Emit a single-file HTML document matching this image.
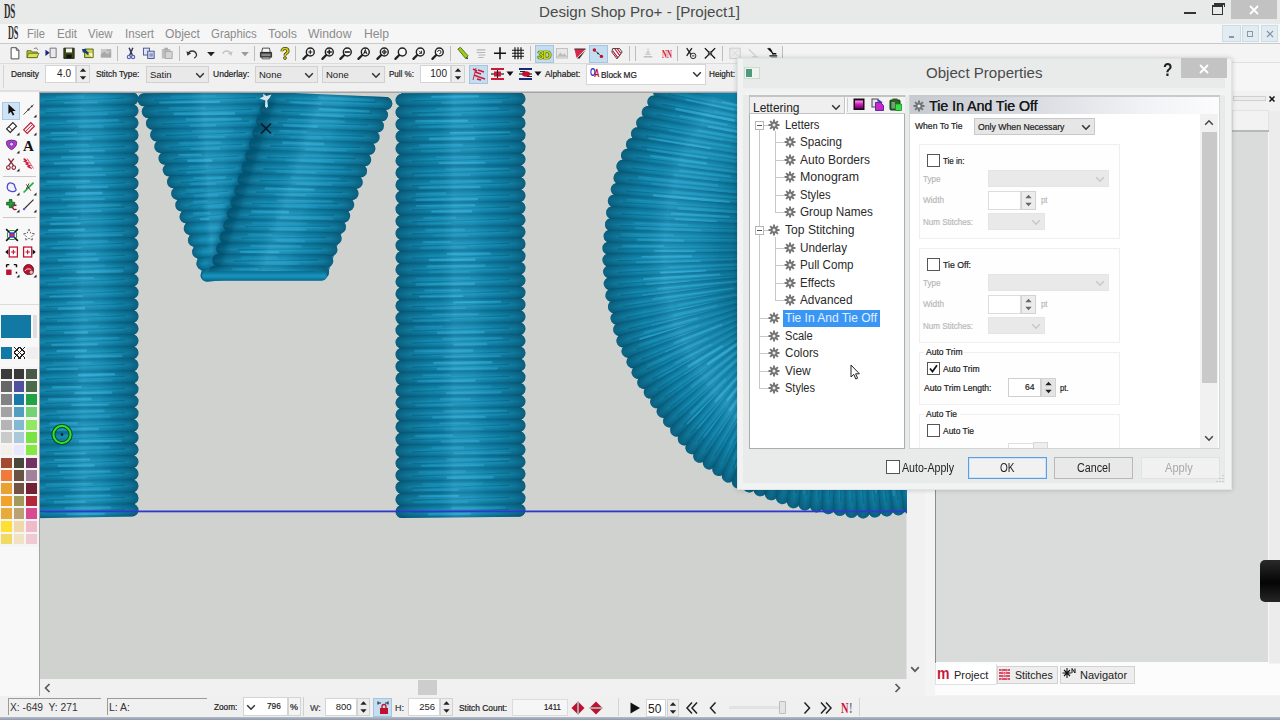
<!DOCTYPE html>
<html lang="en"><head><meta charset="utf-8"><title>Design Shop Pro+ - [Project1]</title>
<style>
html,body{margin:0;padding:0;}
body{width:1280px;height:720px;overflow:hidden;position:relative;background:#f0f0f0;
 font-family:"Liberation Sans",sans-serif;}
div,span,svg{position:absolute;box-sizing:border-box;}
.t{line-height:20px;height:20px;white-space:nowrap;}
.soft{filter:blur(0.35px);}
</style></head>
<body>
<div style="left:0px;top:0px;width:1280px;height:24px;background:#e8eae9;"></div>
<span class="t" style="left:538.7px;top:2px;font-size:15.5px;color:#4a4a4a;transform:scaleX(0.978);transform-origin:0 50%;">Design Shop Pro+ - [Project1]</span>
<span class="t" style="left:3.5px;top:0.5px;font-size:20px;color:#2e2e2e;transform:scaleX(0.450);transform-origin:0 50%;font-weight:bold;font-family:'Liberation Serif',serif;letter-spacing:-0.5px;">DS</span>
<div style="left:1184px;top:12px;width:12px;height:2px;background:#333;"></div>
<div style="left:1212px;top:5px;width:11px;height:10px;border:1.5px solid #333;border-top-width:2.5px;"></div>
<div style="left:1214px;top:3px;width:11px;height:4px;border:1.5px solid #333;border-bottom:none;border-top-width:2px;"></div>
<div style="left:1231px;top:0px;width:46px;height:19px;background:#c2c2c2;"></div>
<svg style="left:1249px;top:5px" width="10" height="10" viewBox="0 0 10 10"><path d="M1 1L9 9M9 1L1 9" stroke="#fff" stroke-width="1.8"/></svg>
<div style="left:0px;top:24px;width:1280px;height:19px;background:#f6f6f6;"></div>
<span class="t" style="left:7.8px;top:22.5px;font-size:19.5px;color:#2e2e2e;transform:scaleX(0.421);transform-origin:0 50%;font-weight:bold;font-family:'Liberation Serif',serif;letter-spacing:-0.5px;">DS</span>
<span class="t" style="left:27px;top:23.5px;font-size:12.8px;color:#8c8c8c;transform:scaleX(0.873);transform-origin:0 50%;">File</span>
<span class="t" style="left:56.5px;top:23.5px;font-size:12.8px;color:#8c8c8c;transform:scaleX(0.907);transform-origin:0 50%;">Edit</span>
<span class="t" style="left:88.3px;top:23.5px;font-size:12.8px;color:#8c8c8c;transform:scaleX(0.891);transform-origin:0 50%;">View</span>
<span class="t" style="left:125px;top:23.5px;font-size:12.8px;color:#8c8c8c;transform:scaleX(0.906);transform-origin:0 50%;">Insert</span>
<span class="t" style="left:165px;top:23.5px;font-size:12.8px;color:#8c8c8c;transform:scaleX(0.946);transform-origin:0 50%;">Object</span>
<span class="t" style="left:211.3px;top:23.5px;font-size:12.8px;color:#8c8c8c;transform:scaleX(0.892);transform-origin:0 50%;">Graphics</span>
<span class="t" style="left:268px;top:23.5px;font-size:12.8px;color:#8c8c8c;transform:scaleX(0.971);transform-origin:0 50%;">Tools</span>
<span class="t" style="left:308px;top:23.5px;font-size:12.8px;color:#8c8c8c;transform:scaleX(0.956);transform-origin:0 50%;">Window</span>
<span class="t" style="left:363.5px;top:23.5px;font-size:12.8px;color:#8c8c8c;transform:scaleX(0.950);transform-origin:0 50%;">Help</span>
<div style="left:1222px;top:25px;width:19px;height:17px;background:#e1ebf2;border:1px solid #cfdbe5;"></div>
<div style="left:1242px;top:25px;width:17px;height:17px;background:#e1ebf2;border:1px solid #cfdbe5;"></div>
<div style="left:1261px;top:25px;width:17px;height:17px;background:#e1ebf2;border:1px solid #cfdbe5;"></div>
<div style="left:1229px;top:36px;width:5px;height:1.5px;background:#8a98a6;"></div>
<div style="left:1247px;top:31px;width:6px;height:6px;border:1px solid #8a98a6;"></div>
<svg style="left:1266px;top:30px" width="8" height="8" viewBox="0 0 8 8"><path d="M1 1L7 7M7 1L1 7" stroke="#8290a0" stroke-width="1.2"/></svg>
<div style="left:0px;top:43px;width:1280px;height:1px;background:#c9c9c9;"></div>
<div style="left:0px;top:44px;width:1280px;height:19px;background:#f1f1f1;"></div>
<div style="left:783px;top:44px;width:497px;height:19px;background:#f4f4f4;"></div>
<div style="left:0px;top:63px;width:1280px;height:27px;background:#f0f0f0;"></div>
<div style="left:0px;top:63px;width:760px;height:1px;background:#dcdcdc;"></div>
<div style="left:117px;top:46px;width:1px;height:15px;background:#bdbdbd;"></div>
<div style="left:179px;top:46px;width:1px;height:15px;background:#bdbdbd;"></div>
<div style="left:254px;top:46px;width:1px;height:15px;background:#bdbdbd;"></div>
<div style="left:295px;top:46px;width:1px;height:15px;background:#bdbdbd;"></div>
<div style="left:450px;top:46px;width:1px;height:15px;background:#bdbdbd;"></div>
<div style="left:530px;top:46px;width:1px;height:15px;background:#bdbdbd;"></div>
<div style="left:629px;top:46px;width:1px;height:15px;background:#bdbdbd;"></div>
<div style="left:635px;top:46px;width:1px;height:15px;background:#bdbdbd;"></div>
<div style="left:677px;top:46px;width:1px;height:15px;background:#bdbdbd;"></div>
<div style="left:722px;top:46px;width:1px;height:15px;background:#bdbdbd;"></div>
<div style="left:782px;top:46px;width:1px;height:15px;background:#bdbdbd;"></div>
<svg style="left:7px;top:45px" width="16" height="16" viewBox="0 0 16 16"><g transform="translate(8 8.3) scale(0.86) translate(-8 -8)"><path d="M3.5 1.5h6l3 3v10h-9z" fill="#fff" stroke="#444" stroke-width="1.1"/><path d="M9.5 1.5v3h3" fill="none" stroke="#444"/></g></svg>
<svg style="left:25px;top:45px" width="16" height="16" viewBox="0 0 16 16"><g transform="translate(8 8.3) scale(0.86) translate(-8 -8)"><path d="M1 5h5l1 1.5h6V13H1z" fill="#b4c238" stroke="#5a6410" stroke-width="1"/><path d="M3 8h12l-2.5 5H1z" fill="#d6e060" stroke="#5a6410" stroke-width="0.9"/><path d="M9 3c2-2 4-1 4.5 1" fill="none" stroke="#444" stroke-width="0.9"/></g></svg>
<svg style="left:43px;top:45px" width="16" height="16" viewBox="0 0 16 16"><g transform="translate(8 8.3) scale(0.86) translate(-8 -8)"><path d="M7 2h7v11H7z" fill="#e8e8ee" stroke="#666" stroke-width="1"/><path d="M1.5 4l5 3.5-5 3.5z" fill="#1a237e"/></g></svg>
<svg style="left:61px;top:45px" width="16" height="16" viewBox="0 0 16 16"><g transform="translate(8 8.3) scale(0.86) translate(-8 -8)"><path d="M2 2h12v12H2z" fill="#3a4a10" stroke="#222"/><rect x="4.5" y="2.5" width="7" height="4.5" fill="#f4f4f4"/><rect x="5" y="9.5" width="6" height="4" fill="#111"/></g></svg>
<svg style="left:80px;top:45px" width="16" height="16" viewBox="0 0 16 16"><g transform="translate(8 8.3) scale(0.86) translate(-8 -8)"><path d="M4 3h10v10H4z" fill="#c8d848" stroke="#4a5410"/><path d="M1 3l5 0 0 2 4 3-2 2-4-3-2 0z" fill="#1c3a7a"/><path d="M8 8l5 0 0 5" fill="#fff8d0"/></g></svg>
<svg style="left:98px;top:45px" width="16" height="16" viewBox="0 0 16 16"><g transform="translate(8 8.3) scale(0.86) translate(-8 -8)"><rect x="2" y="3" width="12" height="10" fill="#c9c9c9"/><path d="M2 9l4-3 4 3 4-4v8H2z" fill="#a8a8a8"/><rect x="9" y="3" width="5" height="3" fill="#b5b5b5"/></g></svg>
<svg style="left:122.5px;top:45px" width="16" height="16" viewBox="0 0 16 16"><g transform="translate(8 8.3) scale(0.86) translate(-8 -8)"><path d="M5.800 1.500L9.500 10M10.200 1.500L6.500 10" stroke="#33335a" stroke-width="1.700"/><circle cx="5.600" cy="12.200" r="1.900" fill="none" stroke="#5a68b4" stroke-width="1.400"/><circle cx="10.400" cy="12.200" r="1.900" fill="none" stroke="#5a68b4" stroke-width="1.400"/></g></svg>
<svg style="left:141px;top:45px" width="16" height="16" viewBox="0 0 16 16"><g transform="translate(8 8.3) scale(0.86) translate(-8 -8)"><rect x="1.5" y="2" width="7" height="8" fill="#dfe3f3" stroke="#3a4a8a"/><rect x="6.500" y="5.5" width="7.500" height="8.500" fill="#c9d2ee" stroke="#3a4a8a"/><path d="M8.5 9h4M8.5 11h4" stroke="#3a4a8a" stroke-width="0.8"/></g></svg>
<svg style="left:159px;top:45px" width="16" height="16" viewBox="0 0 16 16"><g transform="translate(8 8.3) scale(0.86) translate(-8 -8)"><rect x="2" y="3" width="10" height="11" fill="#bdbdbd"/><rect x="6" y="6" width="8" height="8" fill="#d4d4d4" stroke="#a4a4a4"/><rect x="5" y="1.5" width="4" height="3" fill="#a8a8a8"/></g></svg>
<svg style="left:184px;top:45px" width="16" height="16" viewBox="0 0 16 16"><g transform="translate(8 8.3) scale(0.86) translate(-8 -8)"><path d="M4 8.5C5 4.5 11 4 13 8.500c1 2.500-1 4.500-2.500 5" fill="none" stroke="#333" stroke-width="1.5"/><path d="M1.500 5.500l1.200 5.300 4.300-2.800z" fill="#333"/></g></svg>
<svg style="left:203px;top:45px" width="16" height="16" viewBox="0 0 16 16"><g transform="translate(8 8.3) scale(0.86) translate(-8 -8)"><path d="M3.5 6.500h9l-4.500 5z" fill="#222"/></g></svg>
<svg style="left:219px;top:45px" width="16" height="16" viewBox="0 0 16 16"><g transform="translate(8 8.3) scale(0.86) translate(-8 -8)"><path d="M12 8.500C11 4.500 5 4 3 8.500" fill="none" stroke="#c4c4c4" stroke-width="1.5"/><path d="M14.500 5.500l-1.200 5.300-4.300-2.800z" fill="#c4c4c4"/></g></svg>
<svg style="left:237px;top:45px" width="16" height="16" viewBox="0 0 16 16"><g transform="translate(8 8.3) scale(0.86) translate(-8 -8)"><path d="M3.500 6.500h9l-4.500 5z" fill="#9a9a9a"/></g></svg>
<svg style="left:258px;top:45px" width="16" height="16" viewBox="0 0 16 16"><g transform="translate(8 8.3) scale(0.86) translate(-8 -8)"><path d="M4 2h8l1 5H3z" fill="#f6f6f6" stroke="#333"/><path d="M1.500 7h13v5.500h-13z" fill="#555" stroke="#222"/><path d="M3 10h10" stroke="#ccc"/><path d="M3.500 12.500h9v2h-9z" fill="#ddd" stroke="#333" stroke-width="0.8"/></g></svg>
<svg style="left:277px;top:45px" width="16" height="16" viewBox="0 0 16 16"><g transform="translate(8 8.3) scale(0.86) translate(-8 -8)"><path d="M4.500 5.500C4.500 1.500 11.500 1.500 11.500 5.500C11.500 8 8 8 8 10.500" fill="none" stroke="#403800" stroke-width="3.600"/><path d="M4.500 5.500C4.500 1.500 11.500 1.500 11.500 5.500C11.500 8 8 8 8 10.500" fill="none" stroke="#d8d020" stroke-width="1.800"/><circle cx="8" cy="13.500" r="1.700" fill="#d8d020" stroke="#403800" stroke-width="0.9"/></g></svg>
<svg style="left:301px;top:45px" width="16" height="16" viewBox="0 0 16 16"><g transform="translate(8 8.3) scale(0.86) translate(-8 -8)"><circle cx="9.500" cy="6.500" r="4.600" fill="#fafafa" stroke="#222" stroke-width="1.700"/><path d="M6 10L1.500 14.500" stroke="#222" stroke-width="2.600" stroke-linecap="round"/><path d="M7 6.500h5M9.500 4v5" stroke="#222" stroke-width="1.300"/></g></svg>
<svg style="left:320px;top:45px" width="16" height="16" viewBox="0 0 16 16"><g transform="translate(8 8.3) scale(0.86) translate(-8 -8)"><circle cx="9.500" cy="6.500" r="4.600" fill="#fafafa" stroke="#222" stroke-width="1.700"/><path d="M6 10L1.500 14.500" stroke="#222" stroke-width="2.600" stroke-linecap="round"/><path d="M6.500 6.500h6M9.500 3.500v6" stroke="#222" stroke-width="1.900"/></g></svg>
<svg style="left:338px;top:45px" width="16" height="16" viewBox="0 0 16 16"><g transform="translate(8 8.3) scale(0.86) translate(-8 -8)"><circle cx="9.500" cy="6.500" r="4.600" fill="#fafafa" stroke="#222" stroke-width="1.700"/><path d="M6 10L1.500 14.500" stroke="#222" stroke-width="2.600" stroke-linecap="round"/><path d="M6.500 6.500h6" stroke="#222" stroke-width="1.900"/></g></svg>
<svg style="left:356px;top:45px" width="16" height="16" viewBox="0 0 16 16"><g transform="translate(8 8.3) scale(0.86) translate(-8 -8)"><circle cx="9.500" cy="6.500" r="4.600" fill="#fafafa" stroke="#222" stroke-width="1.700"/><path d="M6 10L1.500 14.500" stroke="#222" stroke-width="2.600" stroke-linecap="round"/><path d="M7.500 9l2-5 2 5M8.200 7.400h2.600" stroke="#222" stroke-width="1.200" fill="none"/></g></svg>
<svg style="left:375px;top:45px" width="16" height="16" viewBox="0 0 16 16"><g transform="translate(8 8.3) scale(0.86) translate(-8 -8)"><circle cx="9.500" cy="6.500" r="4.600" fill="#fafafa" stroke="#222" stroke-width="1.700"/><path d="M6 10L1.500 14.500" stroke="#222" stroke-width="2.600" stroke-linecap="round"/><path d="M6.500 6.500h6M9.500 3.500v6" stroke="#222" stroke-width="1.100"/><circle cx="9.500" cy="6.500" r="2" fill="none" stroke="#222" stroke-width="0.9"/></g></svg>
<svg style="left:393px;top:45px" width="16" height="16" viewBox="0 0 16 16"><g transform="translate(8 8.3) scale(0.86) translate(-8 -8)"><circle cx="9.500" cy="6.500" r="4.600" fill="#fafafa" stroke="#222" stroke-width="1.700"/><path d="M6 10L1.500 14.500" stroke="#222" stroke-width="2.600" stroke-linecap="round"/></g></svg>
<svg style="left:411px;top:45px" width="16" height="16" viewBox="0 0 16 16"><g transform="translate(8 8.3) scale(0.86) translate(-8 -8)"><circle cx="9.500" cy="6.500" r="4.600" fill="#fafafa" stroke="#222" stroke-width="1.700"/><path d="M6 10L1.500 14.500" stroke="#222" stroke-width="2.600" stroke-linecap="round"/><path d="M8 5l3 3M11 5l0 3-3 0" stroke="#222" stroke-width="1.100" fill="none"/></g></svg>
<svg style="left:430px;top:45px" width="16" height="16" viewBox="0 0 16 16"><g transform="translate(8 8.3) scale(0.86) translate(-8 -8)"><circle cx="9.500" cy="6.500" r="4.600" fill="#fafafa" stroke="#222" stroke-width="1.700"/><path d="M6 10L1.500 14.500" stroke="#222" stroke-width="2.600" stroke-linecap="round"/><path d="M7.500 6.500a2 2 0 1 1 2 2" stroke="#222" stroke-width="1.100" fill="none"/></g></svg>
<svg style="left:455px;top:45px" width="16" height="16" viewBox="0 0 16 16"><g transform="translate(8 8.3) scale(0.86) translate(-8 -8)"><path d="M2 3l3-2 9 10-3 3z" fill="#9ccc20" stroke="#4a6a08"/><path d="M11 14l3 1-1-3z" fill="#333"/></g></svg>
<svg style="left:473px;top:45px" width="16" height="16" viewBox="0 0 16 16"><g transform="translate(8 8.3) scale(0.86) translate(-8 -8)"><path d="M3 4h10M3 7h10M5 10h8M5 13h6" stroke="#b4b4b4" stroke-width="1.200"/></g></svg>
<svg style="left:492px;top:45px" width="16" height="16" viewBox="0 0 16 16"><g transform="translate(8 8.3) scale(0.86) translate(-8 -8)"><path d="M8 1v14M1 8h14" stroke="#111" stroke-width="1.800"/></g></svg>
<svg style="left:510px;top:45px" width="16" height="16" viewBox="0 0 16 16"><g transform="translate(8 8.3) scale(0.86) translate(-8 -8)"><path d="M4.500 1v14M8 1v14M11.500 1v14M1 4.500h14M1 8h14M1 11.500h14" stroke="#111" stroke-width="1.300"/></g></svg>
<div style="left:535px;top:45px;width:19px;height:18px;background:#c4ddf0;border:1px solid #a4c4e0;"></div>
<span class="t" style="left:537.5px;top:44.5px;font-size:11.5px;color:#c8e000;font-weight:bold;letter-spacing:-0.8px;text-shadow:0 0 1px #2a3a00,0 0 1px #2a3a00,0 0 1px #2a3a00;">3D</span>
<svg style="left:554px;top:45px" width="16" height="16" viewBox="0 0 16 16"><g transform="translate(8 8.3) scale(0.86) translate(-8 -8)"><rect x="1.500" y="2.500" width="13" height="11" fill="#e8e8e8" stroke="#bbb"/><path d="M2 12l4-5 3 3 2-2 3 4z" fill="#bcbcbc"/></g></svg>
<svg style="left:572px;top:45px" width="16" height="16" viewBox="0 0 16 16"><g transform="translate(8 8.3) scale(0.86) translate(-8 -8)"><path d="M1.500 3h13L4 13.500z" fill="#d8284a"/><path d="M14.500 4.500L4.500 14h3z" fill="#222"/><path d="M1.500 3h13" stroke="#333" stroke-width="1.200"/></g></svg>
<div style="left:589px;top:45px;width:19px;height:18px;background:#c4ddf0;border:1px solid #a4c4e0;"></div>
<svg style="left:590px;top:45px" width="16" height="16" viewBox="0 0 16 16"><g transform="translate(8 8.3) scale(0.86) translate(-8 -8)"><path d="M3.500 4L12 11.500" stroke="#333" stroke-width="0.9"/><circle cx="3.800" cy="4.200" r="2" fill="#c01030"/><circle cx="12" cy="11.600" r="2" fill="#c01030"/><circle cx="8" cy="8" r="1" fill="#222"/></g></svg>
<svg style="left:609px;top:45px" width="16" height="16" viewBox="0 0 16 16"><g transform="translate(8 8.3) scale(0.86) translate(-8 -8)"><path d="M3 2.500h8l3 4-6 8-6-8z" fill="#fff" stroke="#222"/><path d="M3 5l6 8M5.500 3l6 8M8.500 3l4 5" stroke="#c01030" stroke-width="1.300"/></g></svg>
<svg style="left:640px;top:45px" width="16" height="16" viewBox="0 0 16 16"><g transform="translate(8 8.3) scale(0.86) translate(-8 -8)"><path d="M3 12h10M5 9h6M6.500 6.500h3" stroke="#c0c0c0" stroke-width="1.600"/><path d="M8 2v5" stroke="#c8c8c8"/></g></svg>
<span class="t" style="left:662px;top:44px;font-size:12px;color:#d01838;transform:scaleX(0.577);transform-origin:0 50%;font-weight:bold;font-family:'Liberation Serif',serif;">NN</span>
<svg style="left:683px;top:45px" width="16" height="16" viewBox="0 0 16 16"><g transform="translate(8 8.3) scale(0.86) translate(-8 -8)"><path d="M3 2l6 9M9 2L3 11" stroke="#222" stroke-width="1.600"/><circle cx="10.500" cy="11" r="3.200" fill="#eee" stroke="#222" stroke-width="1.100"/><path d="M9 11h3" stroke="#222"/></g></svg>
<svg style="left:702px;top:45px" width="16" height="16" viewBox="0 0 16 16"><g transform="translate(8 8.3) scale(0.86) translate(-8 -8)"><path d="M2 2l5 5M14 2l-5 5M2 14l5-5M14 14l-5-5" stroke="#111" stroke-width="1.500"/><path d="M5.500 8h5M8 5.500v5" stroke="#111" stroke-width="1"/></g></svg>
<svg style="left:727px;top:45px" width="16" height="16" viewBox="0 0 16 16"><g transform="translate(8 8.3) scale(0.86) translate(-8 -8)"><rect x="2" y="2" width="12" height="12" fill="#ececec" stroke="#c8c8c8"/><path d="M4 4l8 8M12 4l-8 8" stroke="#d4d4d4"/></g></svg>
<svg style="left:745px;top:45px" width="16" height="16" viewBox="0 0 16 16"><g transform="translate(8 8.3) scale(0.86) translate(-8 -8)"><path d="M3 3l8 8M7 12h7" stroke="#cfcfcf" stroke-width="1.400"/></g></svg>
<svg style="left:764px;top:45px" width="16" height="16" viewBox="0 0 16 16"><g transform="translate(8 8.3) scale(0.86) translate(-8 -8)"><path d="M3 2l7 7M5 2l3 4" stroke="#111" stroke-width="1.500"/><path d="M5 11h9M7 14h7M8 8.500h5" stroke="#111" stroke-width="1.600"/></g></svg>
<div style="left:2.5px;top:65px;width:1px;height:23px;background:#d4d4d4;"></div>
<span class="t" style="left:10.6px;top:64px;font-size:9.2px;color:#222;transform:scaleX(0.913);transform-origin:0 50%;-webkit-text-stroke:0.22px currentColor;">Density</span>
<div style="left:45px;top:65px;width:31px;height:18px;background:#fff;border:1px solid #d5d5d5;"></div>
<span class="t" style="left:45px;top:64.0px;width:26px;text-align:right;font-size:10px;color:#222">4.0</span>
<div style="left:76px;top:65px;width:14px;height:18px;background:#ededed;border:1px solid #d2d2d2;"></div>
<svg style="left:76px;top:65px" width="14" height="18" viewBox="0 0 14 18"><path d="M3.8 6.8l3.200-3.600 3.200 3.600z" fill="#222"/><path d="M3.8 11.2l3.200 3.600 3.200-3.600z" fill="#222"/></svg>
<span class="t" style="left:95.6px;top:64px;font-size:9.2px;color:#222;transform:scaleX(0.906);transform-origin:0 50%;-webkit-text-stroke:0.22px currentColor;">Stitch Type:</span>
<div style="left:146px;top:66px;width:63px;height:17px;background:#e9e9e9;border:1px solid #d0d0d0;"></div>
<span class="t" style="left:150px;top:64.5px;font-size:9.5px;color:#222">Satin</span>
<svg style="left:195.0px;top:71.5px" width="10.0" height="7.0" viewBox="0 0 10 7"><path d="M1.200 1.200L5 5.200L8.800 1.200" fill="none" stroke="#333" stroke-width="1.5"/></svg>
<span class="t" style="left:213px;top:64px;font-size:9.2px;color:#222;transform:scaleX(0.927);transform-origin:0 50%;-webkit-text-stroke:0.22px currentColor;">Underlay:</span>
<div style="left:255px;top:66px;width:63px;height:17px;background:#e9e9e9;border:1px solid #d0d0d0;"></div>
<span class="t" style="left:259px;top:64.5px;font-size:9.5px;color:#222">None</span>
<svg style="left:304.0px;top:71.5px" width="10.0" height="7.0" viewBox="0 0 10 7"><path d="M1.200 1.200L5 5.200L8.800 1.200" fill="none" stroke="#333" stroke-width="1.5"/></svg>
<div style="left:322px;top:66px;width:63px;height:17px;background:#e9e9e9;border:1px solid #d0d0d0;"></div>
<span class="t" style="left:326px;top:64.5px;font-size:9.5px;color:#222">None</span>
<svg style="left:371.0px;top:71.5px" width="10.0" height="7.0" viewBox="0 0 10 7"><path d="M1.200 1.200L5 5.200L8.800 1.200" fill="none" stroke="#333" stroke-width="1.5"/></svg>
<span class="t" style="left:389px;top:64px;font-size:9.2px;color:#222;transform:scaleX(0.873);transform-origin:0 50%;-webkit-text-stroke:0.22px currentColor;">Pull %:</span>
<div style="left:420px;top:65px;width:31px;height:18px;background:#fff;border:1px solid #d5d5d5;"></div>
<span class="t" style="left:420px;top:64.0px;width:27px;text-align:right;font-size:10px;color:#222">100</span>
<div style="left:451px;top:65px;width:14px;height:18px;background:#ededed;border:1px solid #d2d2d2;"></div>
<svg style="left:451px;top:65px" width="14" height="18" viewBox="0 0 14 18"><path d="M3.8 6.8l3.200-3.600 3.200 3.600z" fill="#222"/><path d="M3.8 11.2l3.200 3.600 3.200-3.600z" fill="#222"/></svg>
<div style="left:469px;top:65px;width:19px;height:19px;background:#c4ddf0;border:1px solid #a4c4e0;"></div>
<svg style="left:471px;top:66px" width="16" height="16" viewBox="0 0 16 16"><path d="M2 3l4 2M4 6l6 2M3 9l5 2M7 4l6 2M8 11l6 2M6 13l4 1" stroke="#d01838" stroke-width="1.500"/><path d="M5 2l-3 12" stroke="#d01838" stroke-width="0.9"/></svg>
<svg style="left:490px;top:66px" width="16" height="16" viewBox="0 0 16 16"><path d="M1 3h13M1 13h13" stroke="#d01838" stroke-width="2"/><path d="M1 8h13" stroke="#222" stroke-width="1.200"/><path d="M4 5.500h7v5H4z" fill="#d01838"/><path d="M7.500 4v8" stroke="#222" stroke-width="1.200"/></svg>
<svg style="left:506px;top:71px" width="8" height="6" viewBox="0 0 8 6"><path d="M0.5 0.500h7l-3.500 4.500z" fill="#111"/></svg>
<svg style="left:518px;top:66px" width="16" height="16" viewBox="0 0 16 16"><path d="M1 3h13M1 13h13" stroke="#1a2a7a" stroke-width="2"/><path d="M1 8h13" stroke="#222" stroke-width="1.200"/><ellipse cx="8" cy="8" rx="4" ry="2.800" fill="#c01030"/><path d="M2 5.500h5M9 10.500h5" stroke="#222" stroke-width="1"/></svg>
<svg style="left:534px;top:71px" width="8" height="6" viewBox="0 0 8 6"><path d="M0.5 0.500h7l-3.500 4.500z" fill="#111"/></svg>
<span class="t" style="left:544.5px;top:64px;font-size:9.2px;color:#222;transform:scaleX(0.913);transform-origin:0 50%;-webkit-text-stroke:0.22px currentColor;">Alphabet:</span>
<div style="left:586px;top:63.5px;width:119.5px;height:21.5px;background:#fff;border:1px solid #d5d5d5;"></div>
<span class="t" style="left:589.5px;top:62.5px;font-size:10px;color:#2a2ad0;transform:scaleX(0.707);transform-origin:0 50%;font-weight:bold;">O</span>
<span class="t" style="left:593.5px;top:63.5px;font-size:10px;color:#c01030;transform:scaleX(0.762);transform-origin:0 50%;font-weight:bold;">A</span>
<span class="t" style="left:601px;top:64.5px;font-size:9.2px;color:#222;transform:scaleX(0.903);transform-origin:0 50%;-webkit-text-stroke:0.22px currentColor;">Block MG</span>
<svg style="left:692.0px;top:71.0px" width="10.0" height="7.0" viewBox="0 0 10 7"><path d="M1.200 1.200L5 5.200L8.800 1.200" fill="none" stroke="#333" stroke-width="1.5"/></svg>
<span class="t" style="left:709px;top:64px;font-size:9.2px;color:#222;transform:scaleX(0.892);transform-origin:0 50%;-webkit-text-stroke:0.22px currentColor;">Height:</span>
<div style="left:744px;top:66.5px;width:16px;height:12.5px;background:#eef4ee;border:1px solid #cfd8d4;"></div>
<div style="left:746px;top:68.5px;width:6px;height:8.5px;background:#4f9a7a;"></div>
<div style="left:0px;top:90px;width:39px;height:606px;background:#f8f8f8;"></div>
<div style="left:38.5px;top:92px;width:1.5px;height:604px;background:#a4a4a4;"></div>
<div style="left:0px;top:90px;width:40px;height:2px;background:#e0e0e0;"></div>
<div style="left:2px;top:102px;width:18px;height:17.5px;background:#cfe3f5;border:1px solid #a8c8e8;"></div>
<div style="left:3px;top:176px;width:33px;height:1px;background:#c8c8c8;"></div>
<div style="left:3px;top:217px;width:33px;height:1px;background:#c8c8c8;"></div>
<svg style="left:4px;top:102px" width="16" height="16" viewBox="0 0 16 16"><g transform="translate(8 8) scale(0.9) translate(-8 -8)"><path d="M4 1.500v11l2.800-2.600 2 4.300 1.800-0.800-2-4.200 3.600-0.200z" fill="#111"/></g></svg>
<svg style="left:21px;top:102px" width="16" height="16" viewBox="0 0 16 16"><g transform="translate(8 8) scale(0.9) translate(-8 -8)"><path d="M2 13L13 2" stroke="#333" stroke-width="1"/><circle cx="7.500" cy="7.500" r="1.200" fill="#333"/><circle cx="11" cy="4" r="1" fill="#333"/></g><path d="M12.500 15.500h3v-3z" fill="#222"/></svg>
<svg style="left:4px;top:120px" width="16" height="16" viewBox="0 0 16 16"><g transform="translate(8 8) scale(0.9) translate(-8 -8)"><path d="M2 9l7-7 4 4-7 7z" fill="#fff" stroke="#222" stroke-width="1.200"/><path d="M4.500 6.500l4 4" stroke="#222"/></g><path d="M12.500 15.500h3v-3z" fill="#222"/></svg>
<svg style="left:21px;top:120px" width="16" height="16" viewBox="0 0 16 16"><g transform="translate(8 8) scale(0.9) translate(-8 -8)"><path d="M2 10l8-8 4 4-8 8z" fill="#fbeaea" stroke="#c01030" stroke-width="1.200"/><path d="M4 12l8-8" stroke="#c01030" stroke-width="0.9"/></g><path d="M12.500 15.500h3v-3z" fill="#222"/></svg>
<svg style="left:4px;top:137.5px" width="16" height="16" viewBox="0 0 16 16"><g transform="translate(8 8) scale(0.9) translate(-8 -8)"><path d="M2 3c2-2 9-2 11 0 1 3-2 8-5.500 9C4 11 1 6 2 3z" fill="#b83cc0" stroke="#5a1a8a"/><circle cx="7.500" cy="6" r="2.200" fill="#e8d0f0" stroke="#3a3ab0"/></g><path d="M12.500 15.500h3v-3z" fill="#222"/></svg>
<span class="t" style="left:23px;top:136px;font-size:15px;color:#111;font-weight:bold;font-family:'Liberation Serif',serif;">A</span>
<svg style="left:4px;top:156px" width="16" height="16" viewBox="0 0 16 16"><g transform="translate(8 8) scale(0.9) translate(-8 -8)"><path d="M4 2l6 8M10 2l-6 8" stroke="#8a2030" stroke-width="1.400"/><circle cx="4" cy="12" r="2" fill="none" stroke="#8a2030" stroke-width="1.200"/><circle cx="10" cy="12" r="2" fill="none" stroke="#8a2030" stroke-width="1.200"/></g><path d="M12.500 15.500h3v-3z" fill="#222"/></svg>
<svg style="left:21px;top:156px" width="16" height="16" viewBox="0 0 16 16"><g transform="translate(8 8) scale(0.9) translate(-8 -8)"><path d="M2 2l3 2-2 1 4 2-2 1 4 2-2 1 4 2" stroke="#d01838" stroke-width="1.500" fill="none"/><path d="M6 2l7 11" stroke="#d01838" stroke-width="0.800"/></g></svg>
<svg style="left:4px;top:179.5px" width="16" height="16" viewBox="0 0 16 16"><g transform="translate(8 8) scale(0.9) translate(-8 -8)"><path d="M3 5c1-4 8-3 8 1 0 2 3 3 1 5-2 2-8 1-9-2-0.500-1.500-0.300-3 0-4z" fill="#f4f0ff" stroke="#4a4ad0" stroke-width="1.400"/></g><path d="M12.500 15.500h3v-3z" fill="#222"/></svg>
<svg style="left:21px;top:179.5px" width="16" height="16" viewBox="0 0 16 16"><g transform="translate(8 8) scale(0.9) translate(-8 -8)"><path d="M2 13L13 2" stroke="#20b030" stroke-width="1.800"/><path d="M5 4l5 7M8 3l-3 6" stroke="#333" stroke-width="1"/></g><path d="M12.500 15.500h3v-3z" fill="#222"/></svg>
<svg style="left:4px;top:197px" width="16" height="16" viewBox="0 0 16 16"><g transform="translate(8 8) scale(0.9) translate(-8 -8)"><path d="M2 5h3V2h3v3h3v3H8v3H5V8H2z" fill="#20a030" stroke="#0a4a14" stroke-width="0.800"/><path d="M13 8.500c-3-1-5 1-4 3s3 2 4 1" fill="none" stroke="#8a2030" stroke-width="1.600"/></g><path d="M12.500 15.500h3v-3z" fill="#222"/></svg>
<svg style="left:21px;top:197px" width="16" height="16" viewBox="0 0 16 16"><g transform="translate(8 8) scale(0.9) translate(-8 -8)"><path d="M2 13L13 2" stroke="#333" stroke-width="1.300"/><circle cx="2.500" cy="12.500" r="1.300" fill="#5a5ad0"/></g><path d="M12.500 15.500h3v-3z" fill="#222"/></svg>
<svg style="left:4px;top:227px" width="16" height="16" viewBox="0 0 16 16"><g transform="translate(8 8) scale(0.9) translate(-8 -8)"><path d="M1.500 1.500l4 4M14.500 1.500l-4 4M1.500 14.500l4-4M14.500 14.500l-4-4" stroke="#111" stroke-width="1.800"/><rect x="5" y="5" width="6" height="6" fill="#3a3ad0"/><circle cx="8" cy="8" r="1.800" fill="#e03030"/><path d="M5 3h6M5 13h6M3 5v6M13 5v6" stroke="#20a030" stroke-width="1.200"/></g></svg>
<svg style="left:21px;top:227px" width="16" height="16" viewBox="0 0 16 16"><g transform="translate(8 8) scale(0.9) translate(-8 -8)"><path d="M8 1.500l2 4.500 4.500 0.500-3.500 3 1 4.500-4-2.500-4 2.500 1-4.500-3.500-3 4.500-0.500z" fill="none" stroke="#555" stroke-width="1" stroke-dasharray="2 1.200"/></g></svg>
<svg style="left:4px;top:244px" width="16" height="16" viewBox="0 0 16 16"><g transform="translate(8 8) scale(0.9) translate(-8 -8)"><rect x="5" y="2.500" width="9" height="11" fill="#fff" stroke="#c01030" stroke-width="1.400"/><path d="M9.500 5.500v5M7 8h5" stroke="#c01030" stroke-width="1.200"/><path d="M0.500 8l3.500-3v6z" fill="#111"/></g></svg>
<svg style="left:21px;top:244px" width="16" height="16" viewBox="0 0 16 16"><g transform="translate(8 8) scale(0.9) translate(-8 -8)"><rect x="2" y="2.500" width="9" height="11" fill="#fff" stroke="#c01030" stroke-width="1.400"/><path d="M6.500 5.500v5M4 8h5" stroke="#c01030" stroke-width="1.200"/><path d="M15.500 8l-3.500-3v6z" fill="#111"/></g></svg>
<svg style="left:4px;top:262px" width="16" height="16" viewBox="0 0 16 16"><g transform="translate(8 8) scale(0.9) translate(-8 -8)"><rect x="1.500" y="7.500" width="6" height="6" fill="#c01030"/><path d="M2 2h3M2 2v3M13 2h-3M13 2v3M13 12v-2" stroke="#111" stroke-width="1.600" fill="none"/></g><path d="M12.500 15.500h3v-3z" fill="#222"/></svg>
<svg style="left:21px;top:262px" width="16" height="16" viewBox="0 0 16 16"><g transform="translate(8 8) scale(0.9) translate(-8 -8)"><circle cx="7.500" cy="7.500" r="5.500" fill="#c01030" stroke="#5a0a14"/><path d="M3.500 9c2-3 6-3 8 0" stroke="#fff" stroke-width="1.100" fill="none"/><circle cx="10.500" cy="10.500" r="2.400" fill="#e8b0b8" stroke="#5a0a14" stroke-width="0.800"/></g><path d="M12.500 15.500h3v-3z" fill="#222"/></svg>
<div style="left:0px;top:304px;width:39px;height:1px;background:#dcdcdc;"></div>
<div style="left:1px;top:315px;width:30px;height:23px;background:#1279a4;"></div>
<div style="left:33px;top:315px;width:4px;height:23px;background:#dedede;"></div>
<div style="left:1px;top:347px;width:11px;height:12px;background:#1279a4;"></div>
<div style="left:14px;top:347px;width:11px;height:12px;background:#fff;background-image:repeating-linear-gradient(45deg,#222 0 1px,transparent 1px 4px),repeating-linear-gradient(-45deg,#222 0 1px,transparent 1px 4px);"></div>
<div style="left:27px;top:347px;width:11px;height:12px;background:#efefef;"></div>
<div style="left:0px;top:367px;width:39px;height:180px;background:#f4f4f4;"></div>
<div style="left:1.1px;top:368.7px;width:10.7px;height:10.6px;background:#3b3b3b;"></div>
<div style="left:13.75px;top:368.7px;width:10.7px;height:10.6px;background:#3a3a3a;"></div>
<div style="left:26.400000000000002px;top:368.7px;width:10.7px;height:10.6px;background:#4a584a;"></div>
<div style="left:1.1px;top:381.4px;width:10.7px;height:10.6px;background:#666666;"></div>
<div style="left:13.75px;top:381.4px;width:10.7px;height:10.6px;background:#514fa0;"></div>
<div style="left:26.400000000000002px;top:381.4px;width:10.7px;height:10.6px;background:#4b6b4a;"></div>
<div style="left:1.1px;top:394.09999999999997px;width:10.7px;height:10.6px;background:#838383;"></div>
<div style="left:13.75px;top:394.09999999999997px;width:10.7px;height:10.6px;background:#1878a8;"></div>
<div style="left:26.400000000000002px;top:394.09999999999997px;width:10.7px;height:10.6px;background:#22a244;"></div>
<div style="left:1.1px;top:406.79999999999995px;width:10.7px;height:10.6px;background:#a3a3a3;"></div>
<div style="left:13.75px;top:406.79999999999995px;width:10.7px;height:10.6px;background:#509fc2;"></div>
<div style="left:26.400000000000002px;top:406.79999999999995px;width:10.7px;height:10.6px;background:#74d274;"></div>
<div style="left:1.1px;top:419.5px;width:10.7px;height:10.6px;background:#b4b4b4;"></div>
<div style="left:13.75px;top:419.5px;width:10.7px;height:10.6px;background:#82b9d2;"></div>
<div style="left:26.400000000000002px;top:419.5px;width:10.7px;height:10.6px;background:#93e862;"></div>
<div style="left:1.1px;top:432.2px;width:10.7px;height:10.6px;background:#c9cbc9;"></div>
<div style="left:13.75px;top:432.2px;width:10.7px;height:10.6px;background:#a9c9da;"></div>
<div style="left:26.400000000000002px;top:432.2px;width:10.7px;height:10.6px;background:#7be244;"></div>
<div style="left:1.1px;top:444.9px;width:10.7px;height:10.6px;background:#f1f1ea;"></div>
<div style="left:13.75px;top:444.9px;width:10.7px;height:10.6px;background:#e9e7ff;"></div>
<div style="left:26.400000000000002px;top:444.9px;width:10.7px;height:10.6px;background:#84ea42;"></div>
<div style="left:1.1px;top:457.59999999999997px;width:10.7px;height:10.6px;background:#a04a32;"></div>
<div style="left:13.75px;top:457.59999999999997px;width:10.7px;height:10.6px;background:#48483a;"></div>
<div style="left:26.400000000000002px;top:457.59999999999997px;width:10.7px;height:10.6px;background:#723262;"></div>
<div style="left:1.1px;top:470.29999999999995px;width:10.7px;height:10.6px;background:#f07a3a;"></div>
<div style="left:13.75px;top:470.29999999999995px;width:10.7px;height:10.6px;background:#6a5242;"></div>
<div style="left:26.400000000000002px;top:470.29999999999995px;width:10.7px;height:10.6px;background:#a2829a;"></div>
<div style="left:1.1px;top:483.0px;width:10.7px;height:10.6px;background:#e8a232;"></div>
<div style="left:13.75px;top:483.0px;width:10.7px;height:10.6px;background:#725242;"></div>
<div style="left:26.400000000000002px;top:483.0px;width:10.7px;height:10.6px;background:#722232;"></div>
<div style="left:1.1px;top:495.7px;width:10.7px;height:10.6px;background:#f0a22a;"></div>
<div style="left:13.75px;top:495.7px;width:10.7px;height:10.6px;background:#a29a5a;"></div>
<div style="left:26.400000000000002px;top:495.7px;width:10.7px;height:10.6px;background:#b22a3a;"></div>
<div style="left:1.1px;top:508.4px;width:10.7px;height:10.6px;background:#e8aa3a;"></div>
<div style="left:13.75px;top:508.4px;width:10.7px;height:10.6px;background:#baa272;"></div>
<div style="left:26.400000000000002px;top:508.4px;width:10.7px;height:10.6px;background:#da4a92;"></div>
<div style="left:1.1px;top:521.0999999999999px;width:10.7px;height:10.6px;background:#ffe032;"></div>
<div style="left:13.75px;top:521.0999999999999px;width:10.7px;height:10.6px;background:#f0d8aa;"></div>
<div style="left:26.400000000000002px;top:521.0999999999999px;width:10.7px;height:10.6px;background:#f0baca;"></div>
<div style="left:1.1px;top:533.8px;width:10.7px;height:10.6px;background:#f0da62;"></div>
<div style="left:13.75px;top:533.8px;width:10.7px;height:10.6px;background:#f0e2c2;"></div>
<div style="left:26.400000000000002px;top:533.8px;width:10.7px;height:10.6px;background:#f0cad2;"></div>
<div style="left:906.5px;top:92px;width:18.5px;height:587px;background:#f1f1f1;"></div>
<div style="left:925px;top:92px;width:10px;height:604px;background:#f4f4f4;"></div>
<svg style="left:910.0px;top:665.5px" width="10.0" height="7.0" viewBox="0 0 10 7"><path d="M1.200 1.200L5 5.200L8.800 1.200" fill="none" stroke="#5a5a5a" stroke-width="1.7"/></svg>
<div style="left:40px;top:679px;width:885px;height:17px;background:#f1f1f1;"></div>
<svg style="left:44px;top:683px" width="7" height="10" viewBox="0 0 7 10"><path d="M5.500 1L1.500 5l4 4" fill="none" stroke="#5a5a5a" stroke-width="1.700"/></svg>
<svg style="left:894px;top:683px" width="7" height="10" viewBox="0 0 7 10"><path d="M1.500 1L5.500 5l-4 4" fill="none" stroke="#5a5a5a" stroke-width="1.700"/></svg>
<div style="left:418px;top:680px;width:19px;height:15px;background:#cdcdcd;"></div>
<div style="left:0px;top:696px;width:1280px;height:20px;background:#f0f0f0;"></div>
<div style="left:0px;top:717.2px;width:1280px;height:3px;background:linear-gradient(#b4bcc8,#8e9aaa);"></div>
<div style="left:8px;top:698px;width:93px;height:17px;border-top:1px solid #9a9a9a;border-left:1px solid #9a9a9a;"></div>
<div style="left:107px;top:698px;width:100px;height:17px;border-top:1px solid #9a9a9a;border-left:1px solid #9a9a9a;"></div>
<span class="t" style="left:9.6px;top:697px;font-size:10.5px;color:#333;transform:scaleX(0.976);transform-origin:0 50%;">X: -649&nbsp; Y: 271</span>
<span class="t" style="left:109px;top:697px;font-size:10.5px;color:#333;">L: A:</span>
<span class="t" style="left:213.7px;top:696.5px;font-size:9px;color:#222;transform:scaleX(0.914);transform-origin:0 50%;-webkit-text-stroke:0.22px currentColor;">Zoom:</span>
<div style="left:243px;top:697px;width:45px;height:19px;background:#fff;border:1px solid #d4d4d4;"></div>
<svg style="left:246.0px;top:703.5px" width="10.0" height="7.0" viewBox="0 0 10 7"><path d="M1.200 1.200L5 5.200L8.800 1.200" fill="none" stroke="#333" stroke-width="1.5"/></svg>
<span class="t" style="left:267px;top:696px;font-size:9.5px;color:#222;transform:scaleX(0.871);transform-origin:0 50%;-webkit-text-stroke:0.22px currentColor;">796</span>
<div style="left:288px;top:697px;width:13px;height:19px;background:#f4f4f4;border:1px solid #d4d4d4;"></div>
<span class="t" style="left:290px;top:696.5px;font-size:9px;color:#222;-webkit-text-stroke:0.22px currentColor;">%</span>
<div style="left:303px;top:697px;width:1px;height:19px;background:#d0d0d0;"></div>
<span class="t" style="left:310px;top:698px;font-size:9px;color:#444;-webkit-text-stroke:0.22px currentColor;">W:</span>
<div style="left:324.5px;top:698px;width:32px;height:18px;background:#fff;border:1px solid #d5d5d5;"></div>
<span class="t" style="left:324.5px;top:697.0px;width:27px;text-align:right;font-size:9.5px;color:#222">800</span>
<div style="left:356.5px;top:698px;width:13px;height:18px;background:#ededed;border:1px solid #d2d2d2;"></div>
<svg style="left:356.5px;top:698px" width="13" height="18" viewBox="0 0 13 18"><path d="M3.3 6.8l3.200-3.600 3.200 3.600z" fill="#222"/><path d="M3.3 11.2l3.200 3.600 3.200-3.600z" fill="#222"/></svg>
<div style="left:373px;top:698px;width:19px;height:19px;background:#c4ddf0;border:1px solid #a4c4e0;"></div>
<svg style="left:375px;top:700px" width="16" height="16" viewBox="0 0 16 16"><path d="M3 3h3M10 3h3M3 1.500v3M13 1.500v3" stroke="#222" stroke-width="1.100"/><rect x="5" y="8" width="8" height="6" fill="#c01030"/><path d="M7 8V6.500a2 2 0 0 1 4 0V8" fill="none" stroke="#c01030" stroke-width="1.300"/></svg>
<span class="t" style="left:395px;top:698px;font-size:9px;color:#444;-webkit-text-stroke:0.22px currentColor;">H:</span>
<div style="left:407.5px;top:698px;width:32.5px;height:18px;background:#fff;border:1px solid #d5d5d5;"></div>
<span class="t" style="left:407.5px;top:697.0px;width:27.5px;text-align:right;font-size:9.5px;color:#222">256</span>
<div style="left:440px;top:698px;width:13px;height:18px;background:#ededed;border:1px solid #d2d2d2;"></div>
<svg style="left:440px;top:698px" width="13" height="18" viewBox="0 0 13 18"><path d="M3.3 6.8l3.200-3.600 3.200 3.600z" fill="#222"/><path d="M3.3 11.2l3.200 3.600 3.200-3.600z" fill="#222"/></svg>
<span class="t" style="left:458.7px;top:697.5px;font-size:9px;color:#222;transform:scaleX(0.932);transform-origin:0 50%;-webkit-text-stroke:0.22px currentColor;">Stitch Count:</span>
<div style="left:512px;top:699px;width:56px;height:17px;background:#f6f6f6;border:1px solid #dcdcdc;"></div>
<span class="t" style="left:544px;top:697px;font-size:9.5px;color:#222;transform:scaleX(0.822);transform-origin:0 50%;-webkit-text-stroke:0.22px currentColor;">1411</span>
<svg style="left:570px;top:700px" width="16" height="16" viewBox="0 0 16 16"><path d="M7 2.500v11L1.500 8z" fill="#c01030"/><path d="M9 2.500v11L14.500 8z" fill="#c01030"/><path d="M8 1.500v13" stroke="#333" stroke-width="0.800"/></svg>
<svg style="left:588px;top:700px" width="16" height="16" viewBox="0 0 16 16"><path d="M2.500 7h11L8 1.500z" fill="#c01030"/><path d="M2.500 9h11L8 14.500z" fill="#c01030"/><path d="M1.500 8h13" stroke="#333" stroke-width="0.800"/></svg>
<div style="left:618px;top:698px;width:1px;height:18px;background:#d4d4d4;"></div>
<svg style="left:629px;top:702px" width="12" height="12" viewBox="0 0 12 12"><path d="M1.500 0.500v11L11 6z" fill="#111"/></svg>
<div style="left:646px;top:699px;width:20px;height:18px;background:#fff;border:1px solid #d4d4d4;"></div>
<span class="t" style="left:648px;top:698.5px;font-size:12px;color:#222;">50</span>
<div style="left:667px;top:699px;width:12px;height:18px;background:#ededed;border:1px solid #d2d2d2;"></div>
<svg style="left:667px;top:699px" width="12" height="18" viewBox="0 0 12 18"><path d="M2.8 6.8l3.200-3.600 3.200 3.600z" fill="#222"/><path d="M2.8 11.2l3.200 3.600 3.200-3.600z" fill="#222"/></svg>
<svg style="left:684px;top:700px" width="16" height="16" viewBox="0 0 16 16"><path d="M8.0 2.500L3.0 8L8.0 13.500M13.0 2.500L8.0 8L13.0 13.500" fill="none" stroke="#222" stroke-width="1.500"/></svg>
<svg style="left:705px;top:700px" width="16" height="16" viewBox="0 0 16 16"><path d="M10.5 2.500L5.5 8L10.5 13.500" fill="none" stroke="#222" stroke-width="1.500"/></svg>
<div style="left:729px;top:706px;width:55px;height:3px;background:#e2e2e2;border-radius:1px;"></div>
<div style="left:779px;top:701px;width:7px;height:13px;background:#e4e4e4;border:1px solid #bdbdbd;border-radius:1px;"></div>
<svg style="left:799px;top:700px" width="16" height="16" viewBox="0 0 16 16"><path d="M5.5 2.500L10.5 8L5.5 13.500" fill="none" stroke="#222" stroke-width="1.500"/></svg>
<svg style="left:818px;top:700px" width="16" height="16" viewBox="0 0 16 16"><path d="M3.0 2.500L8.0 8L3.0 13.500M8.0 2.500L13.0 8L8.0 13.500" fill="none" stroke="#222" stroke-width="1.500"/></svg>
<span class="t" style="left:841px;top:698px;font-size:14.5px;color:#c81838;transform:scaleX(0.716);transform-origin:0 50%;font-weight:bold;font-family:'Liberation Serif',serif;">N</span>
<span class="t" style="left:849px;top:698px;font-size:14.5px;color:#7a6a9a;transform:scaleX(0.725);transform-origin:0 50%;font-weight:bold;font-family:'Liberation Serif',serif;">!</span>
<div style="left:858.5px;top:698px;width:1px;height:18px;background:#d4d4d4;"></div>
<svg style="left:40px;top:92px" width="866.5" height="587" viewBox="40 92 866.5 587">
<defs>
<linearGradient id="th" x1="0" y1="0" x2="0" y2="1">
<stop offset="0" stop-color="#066a8e"/><stop offset="0.25" stop-color="#0f83aa"/>
<stop offset="0.5" stop-color="#1a95be"/><stop offset="0.75" stop-color="#0f82a9"/>
<stop offset="1" stop-color="#056589"/></linearGradient>
<linearGradient id="th2" x1="0" y1="0" x2="0" y2="1">
<stop offset="0" stop-color="#066a8e"/><stop offset="0.3" stop-color="#1086ad"/>
<stop offset="0.55" stop-color="#1c98c1"/><stop offset="0.8" stop-color="#0f82a9"/>
<stop offset="1" stop-color="#056589"/></linearGradient>
<linearGradient id="al" x1="0" y1="0" x2="1" y2="0">
<stop offset="0" stop-color="#03425a" stop-opacity="0.62"/><stop offset="0.10" stop-color="#03425a" stop-opacity="0.34"/>
<stop offset="0.28" stop-color="#03425a" stop-opacity="0.06"/><stop offset="0.45" stop-color="#6fd0f4" stop-opacity="0.20"/>
<stop offset="0.60" stop-color="#6fd0f4" stop-opacity="0.14"/><stop offset="0.78" stop-color="#03425a" stop-opacity="0.10"/>
<stop offset="0.92" stop-color="#03425a" stop-opacity="0.36"/><stop offset="1" stop-color="#03425a" stop-opacity="0.62"/></linearGradient>
<linearGradient id="alL" x1="0" y1="0" x2="1" y2="0">
<stop offset="0" stop-color="#03425a" stop-opacity="0.30"/><stop offset="0.25" stop-color="#03425a" stop-opacity="0.08"/>
<stop offset="0.50" stop-color="#6fd0f4" stop-opacity="0.20"/>
<stop offset="0.65" stop-color="#6fd0f4" stop-opacity="0.12"/><stop offset="0.80" stop-color="#03425a" stop-opacity="0.12"/>
<stop offset="0.92" stop-color="#03425a" stop-opacity="0.36"/><stop offset="1" stop-color="#03425a" stop-opacity="0.62"/></linearGradient>
<linearGradient id="alG" x1="0" y1="0" x2="1" y2="0">
<stop offset="0" stop-color="#03425a" stop-opacity="0.60"/><stop offset="0.05" stop-color="#03425a" stop-opacity="0.36"/>
<stop offset="0.14" stop-color="#03425a" stop-opacity="0.08"/><stop offset="0.26" stop-color="#6fd0f4" stop-opacity="0.20"/>
<stop offset="0.36" stop-color="#6fd0f4" stop-opacity="0.12"/><stop offset="0.50" stop-color="#03425a" stop-opacity="0.18"/>
<stop offset="0.62" stop-color="#03425a" stop-opacity="0.40"/><stop offset="1" stop-color="#03425a" stop-opacity="0.45"/></linearGradient>
<filter id="bl2" x="-50%" y="-10%" width="200%" height="120%"><feGaussianBlur stdDeviation="2.2"/></filter>
<filter id="bl" x="-5%" y="-5%" width="110%" height="110%"><feGaussianBlur stdDeviation="0.7"/></filter>
</defs>
<rect x="40" y="92" width="866.5" height="587" fill="#cfd2cf"/>
<g filter="url(#bl)">
<rect x="30" y="93" width="104" height="420" fill="#0e80a7"/>
<rect x="401" y="93" width="119" height="420" fill="#0e80a7"/>
<polygon points="142,95 388,97 326,279 204,279" fill="#0e80a7"/>
<rect x="27.5" y="93.8" width="111.0" height="13.0" rx="6.5" fill="url(#th)" transform="rotate(-0.94 34.0 100.3)"/>
<line x1="45.5" y1="100.9" x2="124.5" y2="98.1" stroke="#05607f" stroke-width="1.3" stroke-opacity="0.50" stroke-linecap="round"/><line x1="57.4" y1="96.9" x2="83.4" y2="96.5" stroke="#3ab8e2" stroke-width="2.3" stroke-opacity="0.23" stroke-linecap="round"/><line x1="64.8" y1="102.8" x2="97.3" y2="102.3" stroke="#3ab8e2" stroke-width="1.7" stroke-opacity="0.40" stroke-linecap="round"/>
<rect x="27.5" y="93.8" width="111.0" height="13.0" rx="6.5" fill="url(#alL)" transform="rotate(-0.94 34.0 100.3)"/>

<rect x="27.5" y="105.9" width="111.0" height="13.0" rx="6.5" fill="url(#th)" transform="rotate(-0.94 34.0 112.4)"/>
<line x1="45.5" y1="113.0" x2="124.5" y2="110.2" stroke="#05607f" stroke-width="1.3" stroke-opacity="0.50" stroke-linecap="round"/><line x1="47.5" y1="109.2" x2="82.1" y2="108.6" stroke="#3ab8e2" stroke-width="1.7" stroke-opacity="0.24" stroke-linecap="round"/><line x1="61.0" y1="115.0" x2="107.3" y2="114.2" stroke="#3ab8e2" stroke-width="1.7" stroke-opacity="0.29" stroke-linecap="round"/>
<rect x="27.5" y="105.9" width="111.0" height="13.0" rx="6.5" fill="url(#alL)" transform="rotate(-0.94 34.0 112.4)"/>

<rect x="27.5" y="118.0" width="111.0" height="13.0" rx="6.5" fill="url(#th)" transform="rotate(-0.94 34.0 124.5)"/>
<line x1="45.5" y1="125.1" x2="124.5" y2="122.3" stroke="#05607f" stroke-width="1.3" stroke-opacity="0.50" stroke-linecap="round"/><line x1="67.8" y1="121.0" x2="117.9" y2="120.2" stroke="#3ab8e2" stroke-width="2.2" stroke-opacity="0.36" stroke-linecap="round"/><line x1="79.9" y1="126.8" x2="102.8" y2="126.4" stroke="#3ab8e2" stroke-width="2.5" stroke-opacity="0.32" stroke-linecap="round"/>
<rect x="27.5" y="118.0" width="111.0" height="13.0" rx="6.5" fill="url(#alL)" transform="rotate(-0.94 34.0 124.5)"/>

<rect x="27.5" y="130.1" width="111.0" height="13.0" rx="6.5" fill="url(#th)" transform="rotate(-0.94 34.0 136.6)"/>
<line x1="45.5" y1="137.2" x2="124.5" y2="134.4" stroke="#05607f" stroke-width="1.3" stroke-opacity="0.50" stroke-linecap="round"/><line x1="51.2" y1="133.3" x2="76.3" y2="132.9" stroke="#3ab8e2" stroke-width="1.9" stroke-opacity="0.53" stroke-linecap="round"/><line x1="52.6" y1="139.3" x2="91.6" y2="138.7" stroke="#3ab8e2" stroke-width="2.2" stroke-opacity="0.35" stroke-linecap="round"/>
<rect x="27.5" y="130.1" width="111.0" height="13.0" rx="6.5" fill="url(#alL)" transform="rotate(-0.94 34.0 136.6)"/>

<rect x="27.5" y="142.2" width="111.0" height="13.0" rx="6.5" fill="url(#th)" transform="rotate(-0.94 34.0 148.7)"/>
<line x1="45.5" y1="149.3" x2="124.5" y2="146.5" stroke="#05607f" stroke-width="1.3" stroke-opacity="0.50" stroke-linecap="round"/><line x1="65.1" y1="145.2" x2="88.5" y2="144.8" stroke="#3ab8e2" stroke-width="1.7" stroke-opacity="0.28" stroke-linecap="round"/><line x1="69.8" y1="151.1" x2="104.1" y2="150.6" stroke="#3ab8e2" stroke-width="1.9" stroke-opacity="0.43" stroke-linecap="round"/>
<rect x="27.5" y="142.2" width="111.0" height="13.0" rx="6.5" fill="url(#alL)" transform="rotate(-0.94 34.0 148.7)"/>

<rect x="27.5" y="154.3" width="111.0" height="13.0" rx="6.5" fill="url(#th)" transform="rotate(-0.94 34.0 160.8)"/>
<line x1="45.5" y1="161.4" x2="124.5" y2="158.6" stroke="#05607f" stroke-width="1.3" stroke-opacity="0.50" stroke-linecap="round"/><line x1="61.8" y1="157.4" x2="92.4" y2="156.9" stroke="#3ab8e2" stroke-width="2.4" stroke-opacity="0.48" stroke-linecap="round"/><line x1="54.7" y1="163.5" x2="93.5" y2="162.9" stroke="#3ab8e2" stroke-width="2.1" stroke-opacity="0.55" stroke-linecap="round"/>
<rect x="27.5" y="154.3" width="111.0" height="13.0" rx="6.5" fill="url(#alL)" transform="rotate(-0.94 34.0 160.8)"/>

<rect x="27.5" y="166.4" width="111.0" height="13.0" rx="6.5" fill="url(#th)" transform="rotate(-0.94 34.0 172.9)"/>
<line x1="45.5" y1="173.5" x2="124.5" y2="170.7" stroke="#05607f" stroke-width="1.3" stroke-opacity="0.50" stroke-linecap="round"/><line x1="71.3" y1="169.3" x2="101.5" y2="168.8" stroke="#3ab8e2" stroke-width="2.6" stroke-opacity="0.25" stroke-linecap="round"/><line x1="60.7" y1="175.5" x2="105.0" y2="174.8" stroke="#3ab8e2" stroke-width="1.8" stroke-opacity="0.40" stroke-linecap="round"/>
<rect x="27.5" y="166.4" width="111.0" height="13.0" rx="6.5" fill="url(#alL)" transform="rotate(-0.94 34.0 172.9)"/>

<rect x="27.5" y="178.5" width="111.0" height="13.0" rx="6.5" fill="url(#th)" transform="rotate(-0.94 34.0 185.0)"/>
<line x1="45.5" y1="185.6" x2="124.5" y2="182.8" stroke="#05607f" stroke-width="1.3" stroke-opacity="0.50" stroke-linecap="round"/><line x1="47.6" y1="181.8" x2="89.2" y2="181.1" stroke="#3ab8e2" stroke-width="2.4" stroke-opacity="0.43" stroke-linecap="round"/><line x1="76.5" y1="187.3" x2="107.4" y2="186.8" stroke="#3ab8e2" stroke-width="2.3" stroke-opacity="0.44" stroke-linecap="round"/>
<rect x="27.5" y="178.5" width="111.0" height="13.0" rx="6.5" fill="url(#alL)" transform="rotate(-0.94 34.0 185.0)"/>

<rect x="27.5" y="190.6" width="111.0" height="13.0" rx="6.5" fill="url(#th)" transform="rotate(-0.94 34.0 197.1)"/>
<line x1="45.5" y1="197.7" x2="124.5" y2="194.9" stroke="#05607f" stroke-width="1.3" stroke-opacity="0.50" stroke-linecap="round"/><line x1="66.2" y1="193.6" x2="101.4" y2="193.0" stroke="#3ab8e2" stroke-width="2.4" stroke-opacity="0.58" stroke-linecap="round"/><line x1="62.7" y1="199.7" x2="104.1" y2="199.0" stroke="#3ab8e2" stroke-width="1.7" stroke-opacity="0.48" stroke-linecap="round"/>
<rect x="27.5" y="190.6" width="111.0" height="13.0" rx="6.5" fill="url(#alL)" transform="rotate(-0.94 34.0 197.1)"/>

<rect x="27.5" y="202.7" width="111.0" height="13.0" rx="6.5" fill="url(#th)" transform="rotate(-0.94 34.0 209.2)"/>
<line x1="45.5" y1="209.8" x2="124.5" y2="207.0" stroke="#05607f" stroke-width="1.3" stroke-opacity="0.50" stroke-linecap="round"/><line x1="68.5" y1="205.7" x2="119.9" y2="204.8" stroke="#3ab8e2" stroke-width="2.4" stroke-opacity="0.31" stroke-linecap="round"/><line x1="59.6" y1="211.8" x2="101.2" y2="211.1" stroke="#3ab8e2" stroke-width="1.6" stroke-opacity="0.38" stroke-linecap="round"/>
<rect x="27.5" y="202.7" width="111.0" height="13.0" rx="6.5" fill="url(#alL)" transform="rotate(-0.94 34.0 209.2)"/>

<rect x="27.5" y="214.8" width="111.0" height="13.0" rx="6.5" fill="url(#th)" transform="rotate(-0.94 34.0 221.3)"/>
<line x1="45.5" y1="221.9" x2="124.5" y2="219.1" stroke="#05607f" stroke-width="1.3" stroke-opacity="0.50" stroke-linecap="round"/><line x1="52.0" y1="218.0" x2="77.1" y2="217.6" stroke="#3ab8e2" stroke-width="1.7" stroke-opacity="0.51" stroke-linecap="round"/><line x1="50.8" y1="224.1" x2="79.8" y2="223.6" stroke="#3ab8e2" stroke-width="2.0" stroke-opacity="0.55" stroke-linecap="round"/>
<rect x="27.5" y="214.8" width="111.0" height="13.0" rx="6.5" fill="url(#alL)" transform="rotate(-0.94 34.0 221.3)"/>

<rect x="27.5" y="226.9" width="111.0" height="13.0" rx="6.5" fill="url(#th)" transform="rotate(-0.94 34.0 233.4)"/>
<line x1="45.5" y1="234.0" x2="124.5" y2="231.2" stroke="#05607f" stroke-width="1.3" stroke-opacity="0.50" stroke-linecap="round"/><line x1="49.0" y1="230.2" x2="84.0" y2="229.6" stroke="#3ab8e2" stroke-width="2.1" stroke-opacity="0.55" stroke-linecap="round"/><line x1="74.5" y1="235.8" x2="122.0" y2="235.0" stroke="#3ab8e2" stroke-width="1.9" stroke-opacity="0.37" stroke-linecap="round"/>
<rect x="27.5" y="226.9" width="111.0" height="13.0" rx="6.5" fill="url(#alL)" transform="rotate(-0.94 34.0 233.4)"/>

<rect x="27.5" y="239.0" width="111.0" height="13.0" rx="6.5" fill="url(#th)" transform="rotate(-0.94 34.0 245.5)"/>
<line x1="45.5" y1="246.1" x2="124.5" y2="243.3" stroke="#05607f" stroke-width="1.3" stroke-opacity="0.50" stroke-linecap="round"/><line x1="58.6" y1="242.1" x2="106.7" y2="241.3" stroke="#3ab8e2" stroke-width="2.6" stroke-opacity="0.26" stroke-linecap="round"/><line x1="52.4" y1="248.2" x2="80.9" y2="247.8" stroke="#3ab8e2" stroke-width="1.8" stroke-opacity="0.39" stroke-linecap="round"/>
<rect x="27.5" y="239.0" width="111.0" height="13.0" rx="6.5" fill="url(#alL)" transform="rotate(-0.94 34.0 245.5)"/>

<rect x="27.5" y="251.1" width="111.0" height="13.0" rx="6.5" fill="url(#th)" transform="rotate(-0.94 34.0 257.6)"/>
<line x1="45.5" y1="258.2" x2="124.5" y2="255.4" stroke="#05607f" stroke-width="1.3" stroke-opacity="0.50" stroke-linecap="round"/><line x1="66.5" y1="254.1" x2="95.9" y2="253.6" stroke="#3ab8e2" stroke-width="1.6" stroke-opacity="0.37" stroke-linecap="round"/><line x1="59.1" y1="260.2" x2="97.6" y2="259.6" stroke="#3ab8e2" stroke-width="2.6" stroke-opacity="0.48" stroke-linecap="round"/>
<rect x="27.5" y="251.1" width="111.0" height="13.0" rx="6.5" fill="url(#alL)" transform="rotate(-0.94 34.0 257.6)"/>

<rect x="27.5" y="263.2" width="111.0" height="13.0" rx="6.5" fill="url(#th)" transform="rotate(-0.94 34.0 269.7)"/>
<line x1="45.5" y1="270.3" x2="124.5" y2="267.5" stroke="#05607f" stroke-width="1.3" stroke-opacity="0.50" stroke-linecap="round"/><line x1="64.0" y1="266.2" x2="104.1" y2="265.6" stroke="#3ab8e2" stroke-width="2.3" stroke-opacity="0.22" stroke-linecap="round"/><line x1="77.3" y1="272.0" x2="122.3" y2="271.3" stroke="#3ab8e2" stroke-width="2.5" stroke-opacity="0.52" stroke-linecap="round"/>
<rect x="27.5" y="263.2" width="111.0" height="13.0" rx="6.5" fill="url(#alL)" transform="rotate(-0.94 34.0 269.7)"/>

<rect x="27.5" y="275.3" width="111.0" height="13.0" rx="6.5" fill="url(#th)" transform="rotate(-0.94 34.0 281.8)"/>
<line x1="45.5" y1="282.4" x2="124.5" y2="279.6" stroke="#05607f" stroke-width="1.3" stroke-opacity="0.50" stroke-linecap="round"/><line x1="59.7" y1="278.4" x2="93.3" y2="277.9" stroke="#3ab8e2" stroke-width="1.7" stroke-opacity="0.45" stroke-linecap="round"/><line x1="48.5" y1="284.6" x2="72.0" y2="284.2" stroke="#3ab8e2" stroke-width="1.8" stroke-opacity="0.26" stroke-linecap="round"/>
<rect x="27.5" y="275.3" width="111.0" height="13.0" rx="6.5" fill="url(#alL)" transform="rotate(-0.94 34.0 281.8)"/>

<rect x="27.5" y="287.4" width="111.0" height="13.0" rx="6.5" fill="url(#th)" transform="rotate(-0.94 34.0 293.9)"/>
<line x1="45.5" y1="294.5" x2="124.5" y2="291.7" stroke="#05607f" stroke-width="1.3" stroke-opacity="0.50" stroke-linecap="round"/><line x1="57.9" y1="290.5" x2="81.0" y2="290.2" stroke="#3ab8e2" stroke-width="1.6" stroke-opacity="0.26" stroke-linecap="round"/><line x1="49.8" y1="296.7" x2="82.3" y2="296.1" stroke="#3ab8e2" stroke-width="1.6" stroke-opacity="0.55" stroke-linecap="round"/>
<rect x="27.5" y="287.4" width="111.0" height="13.0" rx="6.5" fill="url(#alL)" transform="rotate(-0.94 34.0 293.9)"/>

<rect x="27.5" y="299.5" width="111.0" height="13.0" rx="6.5" fill="url(#th)" transform="rotate(-0.94 34.0 306.0)"/>
<line x1="45.5" y1="306.6" x2="124.5" y2="303.8" stroke="#05607f" stroke-width="1.3" stroke-opacity="0.50" stroke-linecap="round"/><line x1="67.4" y1="302.5" x2="93.3" y2="302.1" stroke="#3ab8e2" stroke-width="1.9" stroke-opacity="0.34" stroke-linecap="round"/><line x1="58.9" y1="308.6" x2="84.1" y2="308.2" stroke="#3ab8e2" stroke-width="2.4" stroke-opacity="0.60" stroke-linecap="round"/>
<rect x="27.5" y="299.5" width="111.0" height="13.0" rx="6.5" fill="url(#alL)" transform="rotate(-0.94 34.0 306.0)"/>

<rect x="27.5" y="311.6" width="111.0" height="13.0" rx="6.5" fill="url(#th)" transform="rotate(-0.94 34.0 318.1)"/>
<line x1="45.5" y1="318.7" x2="124.5" y2="315.9" stroke="#05607f" stroke-width="1.3" stroke-opacity="0.50" stroke-linecap="round"/><line x1="62.3" y1="314.7" x2="98.3" y2="314.1" stroke="#3ab8e2" stroke-width="1.7" stroke-opacity="0.24" stroke-linecap="round"/><line x1="58.1" y1="320.7" x2="87.6" y2="320.3" stroke="#3ab8e2" stroke-width="2.4" stroke-opacity="0.26" stroke-linecap="round"/>
<rect x="27.5" y="311.6" width="111.0" height="13.0" rx="6.5" fill="url(#alL)" transform="rotate(-0.94 34.0 318.1)"/>

<rect x="27.5" y="323.7" width="111.0" height="13.0" rx="6.5" fill="url(#th)" transform="rotate(-0.94 34.0 330.2)"/>
<line x1="45.5" y1="330.8" x2="124.5" y2="328.0" stroke="#05607f" stroke-width="1.3" stroke-opacity="0.50" stroke-linecap="round"/><line x1="47.0" y1="327.0" x2="97.2" y2="326.2" stroke="#3ab8e2" stroke-width="2.1" stroke-opacity="0.26" stroke-linecap="round"/><line x1="65.0" y1="332.7" x2="87.3" y2="332.4" stroke="#3ab8e2" stroke-width="2.1" stroke-opacity="0.59" stroke-linecap="round"/>
<rect x="27.5" y="323.7" width="111.0" height="13.0" rx="6.5" fill="url(#alL)" transform="rotate(-0.94 34.0 330.2)"/>

<rect x="27.5" y="335.8" width="111.0" height="13.0" rx="6.5" fill="url(#th)" transform="rotate(-0.94 34.0 342.3)"/>
<line x1="45.5" y1="342.9" x2="124.5" y2="340.1" stroke="#05607f" stroke-width="1.3" stroke-opacity="0.50" stroke-linecap="round"/><line x1="75.9" y1="338.6" x2="118.4" y2="338.0" stroke="#3ab8e2" stroke-width="1.9" stroke-opacity="0.35" stroke-linecap="round"/><line x1="52.1" y1="345.0" x2="96.8" y2="344.3" stroke="#3ab8e2" stroke-width="2.1" stroke-opacity="0.51" stroke-linecap="round"/>
<rect x="27.5" y="335.8" width="111.0" height="13.0" rx="6.5" fill="url(#alL)" transform="rotate(-0.94 34.0 342.3)"/>

<rect x="27.5" y="347.9" width="111.0" height="13.0" rx="6.5" fill="url(#th)" transform="rotate(-0.94 34.0 354.4)"/>
<line x1="45.5" y1="355.0" x2="124.5" y2="352.2" stroke="#05607f" stroke-width="1.3" stroke-opacity="0.50" stroke-linecap="round"/><line x1="57.6" y1="351.0" x2="85.8" y2="350.6" stroke="#3ab8e2" stroke-width="2.4" stroke-opacity="0.59" stroke-linecap="round"/><line x1="75.7" y1="356.8" x2="121.4" y2="356.0" stroke="#3ab8e2" stroke-width="2.4" stroke-opacity="0.50" stroke-linecap="round"/>
<rect x="27.5" y="347.9" width="111.0" height="13.0" rx="6.5" fill="url(#alL)" transform="rotate(-0.94 34.0 354.4)"/>

<rect x="27.5" y="360.0" width="111.0" height="13.0" rx="6.5" fill="url(#th)" transform="rotate(-0.94 34.0 366.5)"/>
<line x1="45.5" y1="367.1" x2="124.5" y2="364.3" stroke="#05607f" stroke-width="1.3" stroke-opacity="0.50" stroke-linecap="round"/><line x1="54.1" y1="363.2" x2="91.1" y2="362.6" stroke="#3ab8e2" stroke-width="2.0" stroke-opacity="0.21" stroke-linecap="round"/><line x1="47.3" y1="369.3" x2="77.2" y2="368.8" stroke="#3ab8e2" stroke-width="1.9" stroke-opacity="0.48" stroke-linecap="round"/>
<rect x="27.5" y="360.0" width="111.0" height="13.0" rx="6.5" fill="url(#alL)" transform="rotate(-0.94 34.0 366.5)"/>

<rect x="27.5" y="372.1" width="111.0" height="13.0" rx="6.5" fill="url(#th)" transform="rotate(-0.94 34.0 378.6)"/>
<line x1="45.5" y1="379.2" x2="124.5" y2="376.4" stroke="#05607f" stroke-width="1.3" stroke-opacity="0.50" stroke-linecap="round"/><line x1="79.2" y1="374.9" x2="114.1" y2="374.3" stroke="#3ab8e2" stroke-width="2.5" stroke-opacity="0.60" stroke-linecap="round"/><line x1="79.2" y1="380.9" x2="111.7" y2="380.4" stroke="#3ab8e2" stroke-width="1.8" stroke-opacity="0.29" stroke-linecap="round"/>
<rect x="27.5" y="372.1" width="111.0" height="13.0" rx="6.5" fill="url(#alL)" transform="rotate(-0.94 34.0 378.6)"/>

<rect x="27.5" y="384.2" width="111.0" height="13.0" rx="6.5" fill="url(#th)" transform="rotate(-0.94 34.0 390.7)"/>
<line x1="45.5" y1="391.3" x2="124.5" y2="388.5" stroke="#05607f" stroke-width="1.3" stroke-opacity="0.50" stroke-linecap="round"/><line x1="53.0" y1="387.4" x2="80.7" y2="387.0" stroke="#3ab8e2" stroke-width="2.2" stroke-opacity="0.56" stroke-linecap="round"/><line x1="75.3" y1="393.1" x2="111.2" y2="392.5" stroke="#3ab8e2" stroke-width="2.3" stroke-opacity="0.52" stroke-linecap="round"/>
<rect x="27.5" y="384.2" width="111.0" height="13.0" rx="6.5" fill="url(#alL)" transform="rotate(-0.94 34.0 390.7)"/>

<rect x="27.5" y="396.3" width="111.0" height="13.0" rx="6.5" fill="url(#th)" transform="rotate(-0.94 34.0 402.8)"/>
<line x1="45.5" y1="403.4" x2="124.5" y2="400.6" stroke="#05607f" stroke-width="1.3" stroke-opacity="0.50" stroke-linecap="round"/><line x1="49.2" y1="399.6" x2="90.6" y2="398.9" stroke="#3ab8e2" stroke-width="2.5" stroke-opacity="0.51" stroke-linecap="round"/><line x1="72.2" y1="405.2" x2="108.0" y2="404.6" stroke="#3ab8e2" stroke-width="1.8" stroke-opacity="0.52" stroke-linecap="round"/>
<rect x="27.5" y="396.3" width="111.0" height="13.0" rx="6.5" fill="url(#alL)" transform="rotate(-0.94 34.0 402.8)"/>

<rect x="27.5" y="408.4" width="111.0" height="13.0" rx="6.5" fill="url(#th)" transform="rotate(-0.94 34.0 414.9)"/>
<line x1="45.5" y1="415.5" x2="124.5" y2="412.7" stroke="#05607f" stroke-width="1.3" stroke-opacity="0.50" stroke-linecap="round"/><line x1="57.7" y1="411.5" x2="103.3" y2="410.8" stroke="#3ab8e2" stroke-width="2.6" stroke-opacity="0.36" stroke-linecap="round"/><line x1="60.2" y1="417.5" x2="110.2" y2="416.7" stroke="#3ab8e2" stroke-width="2.3" stroke-opacity="0.27" stroke-linecap="round"/>
<rect x="27.5" y="408.4" width="111.0" height="13.0" rx="6.5" fill="url(#alL)" transform="rotate(-0.94 34.0 414.9)"/>

<rect x="27.5" y="420.5" width="111.0" height="13.0" rx="6.5" fill="url(#th)" transform="rotate(-0.94 34.0 427.0)"/>
<line x1="45.5" y1="427.6" x2="124.5" y2="424.8" stroke="#05607f" stroke-width="1.3" stroke-opacity="0.50" stroke-linecap="round"/><line x1="50.6" y1="423.8" x2="76.7" y2="423.3" stroke="#3ab8e2" stroke-width="2.5" stroke-opacity="0.52" stroke-linecap="round"/><line x1="51.4" y1="429.7" x2="97.8" y2="429.0" stroke="#3ab8e2" stroke-width="2.6" stroke-opacity="0.46" stroke-linecap="round"/>
<rect x="27.5" y="420.5" width="111.0" height="13.0" rx="6.5" fill="url(#alL)" transform="rotate(-0.94 34.0 427.0)"/>

<rect x="27.5" y="432.6" width="111.0" height="13.0" rx="6.5" fill="url(#th)" transform="rotate(-0.94 34.0 439.1)"/>
<line x1="45.5" y1="439.7" x2="124.5" y2="436.9" stroke="#05607f" stroke-width="1.3" stroke-opacity="0.50" stroke-linecap="round"/><line x1="58.3" y1="435.7" x2="96.3" y2="435.1" stroke="#3ab8e2" stroke-width="1.7" stroke-opacity="0.21" stroke-linecap="round"/><line x1="79.7" y1="441.4" x2="120.8" y2="440.7" stroke="#3ab8e2" stroke-width="2.1" stroke-opacity="0.57" stroke-linecap="round"/>
<rect x="27.5" y="432.6" width="111.0" height="13.0" rx="6.5" fill="url(#alL)" transform="rotate(-0.94 34.0 439.1)"/>

<rect x="27.5" y="444.7" width="111.0" height="13.0" rx="6.5" fill="url(#th)" transform="rotate(-0.94 34.0 451.2)"/>
<line x1="45.5" y1="451.8" x2="124.5" y2="449.0" stroke="#05607f" stroke-width="1.3" stroke-opacity="0.50" stroke-linecap="round"/><line x1="61.2" y1="447.8" x2="108.9" y2="447.0" stroke="#3ab8e2" stroke-width="2.4" stroke-opacity="0.28" stroke-linecap="round"/><line x1="55.0" y1="453.9" x2="85.3" y2="453.4" stroke="#3ab8e2" stroke-width="1.8" stroke-opacity="0.43" stroke-linecap="round"/>
<rect x="27.5" y="444.7" width="111.0" height="13.0" rx="6.5" fill="url(#alL)" transform="rotate(-0.94 34.0 451.2)"/>

<rect x="27.5" y="456.8" width="111.0" height="13.0" rx="6.5" fill="url(#th)" transform="rotate(-0.94 34.0 463.3)"/>
<line x1="45.5" y1="463.9" x2="124.5" y2="461.1" stroke="#05607f" stroke-width="1.3" stroke-opacity="0.50" stroke-linecap="round"/><line x1="55.2" y1="460.0" x2="89.3" y2="459.4" stroke="#3ab8e2" stroke-width="1.7" stroke-opacity="0.56" stroke-linecap="round"/><line x1="58.5" y1="465.9" x2="93.8" y2="465.4" stroke="#3ab8e2" stroke-width="2.2" stroke-opacity="0.56" stroke-linecap="round"/>
<rect x="27.5" y="456.8" width="111.0" height="13.0" rx="6.5" fill="url(#alL)" transform="rotate(-0.94 34.0 463.3)"/>

<rect x="27.5" y="468.9" width="111.0" height="13.0" rx="6.5" fill="url(#th)" transform="rotate(-0.94 34.0 475.4)"/>
<line x1="45.5" y1="476.0" x2="124.5" y2="473.2" stroke="#05607f" stroke-width="1.3" stroke-opacity="0.50" stroke-linecap="round"/><line x1="60.7" y1="472.0" x2="109.8" y2="471.2" stroke="#3ab8e2" stroke-width="2.1" stroke-opacity="0.41" stroke-linecap="round"/><line x1="64.4" y1="477.9" x2="86.4" y2="477.6" stroke="#3ab8e2" stroke-width="2.0" stroke-opacity="0.27" stroke-linecap="round"/>
<rect x="27.5" y="468.9" width="111.0" height="13.0" rx="6.5" fill="url(#alL)" transform="rotate(-0.94 34.0 475.4)"/>

<rect x="27.5" y="481.0" width="111.0" height="13.0" rx="6.5" fill="url(#th)" transform="rotate(-0.94 34.0 487.5)"/>
<line x1="45.5" y1="488.1" x2="124.5" y2="485.3" stroke="#05607f" stroke-width="1.3" stroke-opacity="0.50" stroke-linecap="round"/><line x1="46.4" y1="484.3" x2="91.9" y2="483.6" stroke="#3ab8e2" stroke-width="1.8" stroke-opacity="0.39" stroke-linecap="round"/><line x1="71.3" y1="489.9" x2="109.5" y2="489.3" stroke="#3ab8e2" stroke-width="1.9" stroke-opacity="0.41" stroke-linecap="round"/>
<rect x="27.5" y="481.0" width="111.0" height="13.0" rx="6.5" fill="url(#alL)" transform="rotate(-0.94 34.0 487.5)"/>

<rect x="27.5" y="493.1" width="111.0" height="13.0" rx="6.5" fill="url(#th)" transform="rotate(-0.94 34.0 499.6)"/>
<line x1="45.5" y1="500.2" x2="124.5" y2="497.4" stroke="#05607f" stroke-width="1.3" stroke-opacity="0.50" stroke-linecap="round"/><line x1="65.4" y1="496.1" x2="110.5" y2="495.4" stroke="#3ab8e2" stroke-width="1.7" stroke-opacity="0.42" stroke-linecap="round"/><line x1="54.9" y1="502.3" x2="84.7" y2="501.8" stroke="#3ab8e2" stroke-width="2.4" stroke-opacity="0.40" stroke-linecap="round"/>
<rect x="27.5" y="493.1" width="111.0" height="13.0" rx="6.5" fill="url(#alL)" transform="rotate(-0.94 34.0 499.6)"/>

<rect x="27.5" y="505.2" width="111.0" height="13.0" rx="6.5" fill="url(#th)" transform="rotate(-0.94 34.0 511.7)"/>
<line x1="45.5" y1="512.3" x2="124.5" y2="509.5" stroke="#05607f" stroke-width="1.3" stroke-opacity="0.50" stroke-linecap="round"/><line x1="65.6" y1="508.2" x2="110.0" y2="507.5" stroke="#3ab8e2" stroke-width="2.5" stroke-opacity="0.38" stroke-linecap="round"/><line x1="67.4" y1="514.2" x2="104.1" y2="513.6" stroke="#3ab8e2" stroke-width="2.1" stroke-opacity="0.48" stroke-linecap="round"/>
<rect x="27.5" y="505.2" width="111.0" height="13.0" rx="6.5" fill="url(#alL)" transform="rotate(-0.94 34.0 511.7)"/>

<rect x="395.5" y="93.7" width="130.0" height="13.0" rx="6.5" fill="url(#th)" transform="rotate(-0.69 402.0 100.2)"/>
<line x1="412.2" y1="100.9" x2="508.8" y2="98.1" stroke="#05607f" stroke-width="1.3" stroke-opacity="0.50" stroke-linecap="round"/><line x1="432.2" y1="96.8" x2="478.1" y2="96.3" stroke="#3ab8e2" stroke-width="2.1" stroke-opacity="0.58" stroke-linecap="round"/><line x1="442.7" y1="102.7" x2="501.1" y2="102.0" stroke="#3ab8e2" stroke-width="2.5" stroke-opacity="0.30" stroke-linecap="round"/>
<rect x="395.5" y="93.7" width="130.0" height="13.0" rx="6.5" fill="url(#al)" transform="rotate(-0.69 402.0 100.2)"/>

<rect x="395.5" y="105.8" width="130.0" height="13.0" rx="6.5" fill="url(#th)" transform="rotate(-0.69 402.0 112.3)"/>
<line x1="412.2" y1="113.0" x2="508.8" y2="110.2" stroke="#05607f" stroke-width="1.3" stroke-opacity="0.50" stroke-linecap="round"/><line x1="436.7" y1="108.9" x2="497.6" y2="108.2" stroke="#3ab8e2" stroke-width="2.4" stroke-opacity="0.25" stroke-linecap="round"/><line x1="418.4" y1="115.1" x2="460.9" y2="114.6" stroke="#3ab8e2" stroke-width="1.7" stroke-opacity="0.30" stroke-linecap="round"/>
<rect x="395.5" y="105.8" width="130.0" height="13.0" rx="6.5" fill="url(#al)" transform="rotate(-0.69 402.0 112.3)"/>

<rect x="395.5" y="117.9" width="130.0" height="13.0" rx="6.5" fill="url(#th)" transform="rotate(-0.69 402.0 124.4)"/>
<line x1="412.2" y1="125.1" x2="508.8" y2="122.3" stroke="#05607f" stroke-width="1.3" stroke-opacity="0.50" stroke-linecap="round"/><line x1="416.3" y1="121.2" x2="467.1" y2="120.6" stroke="#3ab8e2" stroke-width="2.4" stroke-opacity="0.56" stroke-linecap="round"/><line x1="419.8" y1="127.2" x2="472.3" y2="126.6" stroke="#3ab8e2" stroke-width="2.3" stroke-opacity="0.26" stroke-linecap="round"/>
<rect x="395.5" y="117.9" width="130.0" height="13.0" rx="6.5" fill="url(#al)" transform="rotate(-0.69 402.0 124.4)"/>

<rect x="395.5" y="130.0" width="130.0" height="13.0" rx="6.5" fill="url(#th)" transform="rotate(-0.69 402.0 136.5)"/>
<line x1="412.2" y1="137.2" x2="508.8" y2="134.4" stroke="#05607f" stroke-width="1.3" stroke-opacity="0.50" stroke-linecap="round"/><line x1="450.3" y1="132.9" x2="509.8" y2="132.2" stroke="#3ab8e2" stroke-width="1.8" stroke-opacity="0.58" stroke-linecap="round"/><line x1="430.0" y1="139.1" x2="474.2" y2="138.6" stroke="#3ab8e2" stroke-width="2.6" stroke-opacity="0.53" stroke-linecap="round"/>
<rect x="395.5" y="130.0" width="130.0" height="13.0" rx="6.5" fill="url(#al)" transform="rotate(-0.69 402.0 136.5)"/>

<rect x="395.5" y="142.1" width="130.0" height="13.0" rx="6.5" fill="url(#th)" transform="rotate(-0.69 402.0 148.6)"/>
<line x1="412.2" y1="149.3" x2="508.8" y2="146.5" stroke="#05607f" stroke-width="1.3" stroke-opacity="0.50" stroke-linecap="round"/><line x1="420.0" y1="145.4" x2="462.1" y2="144.9" stroke="#3ab8e2" stroke-width="2.1" stroke-opacity="0.34" stroke-linecap="round"/><line x1="421.5" y1="151.3" x2="459.5" y2="150.9" stroke="#3ab8e2" stroke-width="2.3" stroke-opacity="0.21" stroke-linecap="round"/>
<rect x="395.5" y="142.1" width="130.0" height="13.0" rx="6.5" fill="url(#al)" transform="rotate(-0.69 402.0 148.6)"/>

<rect x="395.5" y="154.2" width="130.0" height="13.0" rx="6.5" fill="url(#th)" transform="rotate(-0.69 402.0 160.7)"/>
<line x1="412.2" y1="161.4" x2="508.8" y2="158.6" stroke="#05607f" stroke-width="1.3" stroke-opacity="0.50" stroke-linecap="round"/><line x1="436.5" y1="157.3" x2="478.9" y2="156.8" stroke="#3ab8e2" stroke-width="1.6" stroke-opacity="0.33" stroke-linecap="round"/><line x1="439.5" y1="163.2" x2="484.6" y2="162.7" stroke="#3ab8e2" stroke-width="1.7" stroke-opacity="0.59" stroke-linecap="round"/>
<rect x="395.5" y="154.2" width="130.0" height="13.0" rx="6.5" fill="url(#al)" transform="rotate(-0.69 402.0 160.7)"/>

<rect x="395.5" y="166.3" width="130.0" height="13.0" rx="6.5" fill="url(#th)" transform="rotate(-0.69 402.0 172.8)"/>
<line x1="412.2" y1="173.5" x2="508.8" y2="170.7" stroke="#05607f" stroke-width="1.3" stroke-opacity="0.50" stroke-linecap="round"/><line x1="446.3" y1="169.3" x2="508.3" y2="168.6" stroke="#3ab8e2" stroke-width="1.7" stroke-opacity="0.31" stroke-linecap="round"/><line x1="414.9" y1="175.6" x2="469.8" y2="175.0" stroke="#3ab8e2" stroke-width="1.9" stroke-opacity="0.25" stroke-linecap="round"/>
<rect x="395.5" y="166.3" width="130.0" height="13.0" rx="6.5" fill="url(#al)" transform="rotate(-0.69 402.0 172.8)"/>

<rect x="395.5" y="178.4" width="130.0" height="13.0" rx="6.5" fill="url(#th)" transform="rotate(-0.69 402.0 184.9)"/>
<line x1="412.2" y1="185.6" x2="508.8" y2="182.8" stroke="#05607f" stroke-width="1.3" stroke-opacity="0.50" stroke-linecap="round"/><line x1="431.0" y1="181.5" x2="490.7" y2="180.9" stroke="#3ab8e2" stroke-width="2.4" stroke-opacity="0.30" stroke-linecap="round"/><line x1="419.6" y1="187.7" x2="479.6" y2="187.0" stroke="#3ab8e2" stroke-width="2.2" stroke-opacity="0.48" stroke-linecap="round"/>
<rect x="395.5" y="178.4" width="130.0" height="13.0" rx="6.5" fill="url(#al)" transform="rotate(-0.69 402.0 184.9)"/>

<rect x="395.5" y="190.5" width="130.0" height="13.0" rx="6.5" fill="url(#th)" transform="rotate(-0.69 402.0 197.0)"/>
<line x1="412.2" y1="197.7" x2="508.8" y2="194.9" stroke="#05607f" stroke-width="1.3" stroke-opacity="0.50" stroke-linecap="round"/><line x1="417.0" y1="193.8" x2="445.3" y2="193.5" stroke="#3ab8e2" stroke-width="2.3" stroke-opacity="0.37" stroke-linecap="round"/><line x1="416.3" y1="199.8" x2="477.1" y2="199.1" stroke="#3ab8e2" stroke-width="2.2" stroke-opacity="0.52" stroke-linecap="round"/>
<rect x="395.5" y="190.5" width="130.0" height="13.0" rx="6.5" fill="url(#al)" transform="rotate(-0.69 402.0 197.0)"/>

<rect x="395.5" y="202.6" width="130.0" height="13.0" rx="6.5" fill="url(#th)" transform="rotate(-0.69 402.0 209.1)"/>
<line x1="412.2" y1="209.8" x2="508.8" y2="207.0" stroke="#05607f" stroke-width="1.3" stroke-opacity="0.50" stroke-linecap="round"/><line x1="416.7" y1="205.9" x2="474.4" y2="205.2" stroke="#3ab8e2" stroke-width="1.7" stroke-opacity="0.55" stroke-linecap="round"/><line x1="432.3" y1="211.7" x2="471.1" y2="211.3" stroke="#3ab8e2" stroke-width="2.2" stroke-opacity="0.57" stroke-linecap="round"/>
<rect x="395.5" y="202.6" width="130.0" height="13.0" rx="6.5" fill="url(#al)" transform="rotate(-0.69 402.0 209.1)"/>

<rect x="395.5" y="214.7" width="130.0" height="13.0" rx="6.5" fill="url(#th)" transform="rotate(-0.69 402.0 221.2)"/>
<line x1="412.2" y1="221.9" x2="508.8" y2="219.1" stroke="#05607f" stroke-width="1.3" stroke-opacity="0.50" stroke-linecap="round"/><line x1="424.5" y1="217.9" x2="455.5" y2="217.6" stroke="#3ab8e2" stroke-width="2.1" stroke-opacity="0.30" stroke-linecap="round"/><line x1="417.9" y1="224.0" x2="450.1" y2="223.6" stroke="#3ab8e2" stroke-width="1.7" stroke-opacity="0.28" stroke-linecap="round"/>
<rect x="395.5" y="214.7" width="130.0" height="13.0" rx="6.5" fill="url(#al)" transform="rotate(-0.69 402.0 221.2)"/>

<rect x="395.5" y="226.8" width="130.0" height="13.0" rx="6.5" fill="url(#th)" transform="rotate(-0.69 402.0 233.3)"/>
<line x1="412.2" y1="234.0" x2="508.8" y2="231.2" stroke="#05607f" stroke-width="1.3" stroke-opacity="0.50" stroke-linecap="round"/><line x1="426.3" y1="230.0" x2="463.8" y2="229.6" stroke="#3ab8e2" stroke-width="2.4" stroke-opacity="0.32" stroke-linecap="round"/><line x1="434.3" y1="235.9" x2="467.1" y2="235.5" stroke="#3ab8e2" stroke-width="1.9" stroke-opacity="0.21" stroke-linecap="round"/>
<rect x="395.5" y="226.8" width="130.0" height="13.0" rx="6.5" fill="url(#al)" transform="rotate(-0.69 402.0 233.3)"/>

<rect x="395.5" y="238.9" width="130.0" height="13.0" rx="6.5" fill="url(#th)" transform="rotate(-0.69 402.0 245.4)"/>
<line x1="412.2" y1="246.1" x2="508.8" y2="243.3" stroke="#05607f" stroke-width="1.3" stroke-opacity="0.50" stroke-linecap="round"/><line x1="423.7" y1="242.1" x2="450.5" y2="241.8" stroke="#3ab8e2" stroke-width="2.3" stroke-opacity="0.42" stroke-linecap="round"/><line x1="421.2" y1="248.1" x2="464.9" y2="247.6" stroke="#3ab8e2" stroke-width="2.5" stroke-opacity="0.24" stroke-linecap="round"/>
<rect x="395.5" y="238.9" width="130.0" height="13.0" rx="6.5" fill="url(#al)" transform="rotate(-0.69 402.0 245.4)"/>

<rect x="395.5" y="251.0" width="130.0" height="13.0" rx="6.5" fill="url(#th)" transform="rotate(-0.69 402.0 257.5)"/>
<line x1="412.2" y1="258.2" x2="508.8" y2="255.4" stroke="#05607f" stroke-width="1.3" stroke-opacity="0.50" stroke-linecap="round"/><line x1="447.6" y1="253.9" x2="489.7" y2="253.5" stroke="#3ab8e2" stroke-width="2.1" stroke-opacity="0.53" stroke-linecap="round"/><line x1="429.8" y1="260.2" x2="474.7" y2="259.6" stroke="#3ab8e2" stroke-width="2.3" stroke-opacity="0.59" stroke-linecap="round"/>
<rect x="395.5" y="251.0" width="130.0" height="13.0" rx="6.5" fill="url(#al)" transform="rotate(-0.69 402.0 257.5)"/>

<rect x="395.5" y="263.1" width="130.0" height="13.0" rx="6.5" fill="url(#th)" transform="rotate(-0.69 402.0 269.6)"/>
<line x1="412.2" y1="270.3" x2="508.8" y2="267.5" stroke="#05607f" stroke-width="1.3" stroke-opacity="0.50" stroke-linecap="round"/><line x1="427.6" y1="266.3" x2="484.4" y2="265.6" stroke="#3ab8e2" stroke-width="2.3" stroke-opacity="0.45" stroke-linecap="round"/><line x1="430.3" y1="272.2" x2="469.3" y2="271.8" stroke="#3ab8e2" stroke-width="1.7" stroke-opacity="0.25" stroke-linecap="round"/>
<rect x="395.5" y="263.1" width="130.0" height="13.0" rx="6.5" fill="url(#al)" transform="rotate(-0.69 402.0 269.6)"/>

<rect x="395.5" y="275.2" width="130.0" height="13.0" rx="6.5" fill="url(#th)" transform="rotate(-0.69 402.0 281.7)"/>
<line x1="412.2" y1="282.4" x2="508.8" y2="279.6" stroke="#05607f" stroke-width="1.3" stroke-opacity="0.50" stroke-linecap="round"/><line x1="416.2" y1="278.5" x2="469.7" y2="277.9" stroke="#3ab8e2" stroke-width="1.9" stroke-opacity="0.27" stroke-linecap="round"/><line x1="416.8" y1="284.5" x2="474.0" y2="283.8" stroke="#3ab8e2" stroke-width="2.5" stroke-opacity="0.47" stroke-linecap="round"/>
<rect x="395.5" y="275.2" width="130.0" height="13.0" rx="6.5" fill="url(#al)" transform="rotate(-0.69 402.0 281.7)"/>

<rect x="395.5" y="287.3" width="130.0" height="13.0" rx="6.5" fill="url(#th)" transform="rotate(-0.69 402.0 293.8)"/>
<line x1="412.2" y1="294.5" x2="508.8" y2="291.7" stroke="#05607f" stroke-width="1.3" stroke-opacity="0.50" stroke-linecap="round"/><line x1="425.1" y1="290.5" x2="460.2" y2="290.1" stroke="#3ab8e2" stroke-width="1.9" stroke-opacity="0.38" stroke-linecap="round"/><line x1="419.9" y1="296.6" x2="462.5" y2="296.1" stroke="#3ab8e2" stroke-width="1.9" stroke-opacity="0.58" stroke-linecap="round"/>
<rect x="395.5" y="287.3" width="130.0" height="13.0" rx="6.5" fill="url(#al)" transform="rotate(-0.69 402.0 293.8)"/>

<rect x="395.5" y="299.4" width="130.0" height="13.0" rx="6.5" fill="url(#th)" transform="rotate(-0.69 402.0 305.9)"/>
<line x1="412.2" y1="306.6" x2="508.8" y2="303.8" stroke="#05607f" stroke-width="1.3" stroke-opacity="0.50" stroke-linecap="round"/><line x1="454.1" y1="302.3" x2="500.4" y2="301.7" stroke="#3ab8e2" stroke-width="1.8" stroke-opacity="0.59" stroke-linecap="round"/><line x1="426.3" y1="308.6" x2="465.6" y2="308.1" stroke="#3ab8e2" stroke-width="1.6" stroke-opacity="0.35" stroke-linecap="round"/>
<rect x="395.5" y="299.4" width="130.0" height="13.0" rx="6.5" fill="url(#al)" transform="rotate(-0.69 402.0 305.9)"/>

<rect x="395.5" y="311.5" width="130.0" height="13.0" rx="6.5" fill="url(#th)" transform="rotate(-0.69 402.0 318.0)"/>
<line x1="412.2" y1="318.7" x2="508.8" y2="315.9" stroke="#05607f" stroke-width="1.3" stroke-opacity="0.50" stroke-linecap="round"/><line x1="433.2" y1="314.6" x2="477.9" y2="314.1" stroke="#3ab8e2" stroke-width="1.8" stroke-opacity="0.40" stroke-linecap="round"/><line x1="413.5" y1="320.8" x2="449.5" y2="320.4" stroke="#3ab8e2" stroke-width="1.7" stroke-opacity="0.36" stroke-linecap="round"/>
<rect x="395.5" y="311.5" width="130.0" height="13.0" rx="6.5" fill="url(#al)" transform="rotate(-0.69 402.0 318.0)"/>

<rect x="395.5" y="323.6" width="130.0" height="13.0" rx="6.5" fill="url(#th)" transform="rotate(-0.69 402.0 330.1)"/>
<line x1="412.2" y1="330.8" x2="508.8" y2="328.0" stroke="#05607f" stroke-width="1.3" stroke-opacity="0.50" stroke-linecap="round"/><line x1="415.0" y1="326.9" x2="442.0" y2="326.6" stroke="#3ab8e2" stroke-width="1.9" stroke-opacity="0.29" stroke-linecap="round"/><line x1="437.9" y1="332.7" x2="483.6" y2="332.1" stroke="#3ab8e2" stroke-width="2.4" stroke-opacity="0.46" stroke-linecap="round"/>
<rect x="395.5" y="323.6" width="130.0" height="13.0" rx="6.5" fill="url(#al)" transform="rotate(-0.69 402.0 330.1)"/>

<rect x="395.5" y="335.7" width="130.0" height="13.0" rx="6.5" fill="url(#th)" transform="rotate(-0.69 402.0 342.2)"/>
<line x1="412.2" y1="342.9" x2="508.8" y2="340.1" stroke="#05607f" stroke-width="1.3" stroke-opacity="0.50" stroke-linecap="round"/><line x1="443.3" y1="338.7" x2="501.8" y2="338.0" stroke="#3ab8e2" stroke-width="2.0" stroke-opacity="0.33" stroke-linecap="round"/><line x1="454.6" y1="344.6" x2="486.4" y2="344.2" stroke="#3ab8e2" stroke-width="2.3" stroke-opacity="0.46" stroke-linecap="round"/>
<rect x="395.5" y="335.7" width="130.0" height="13.0" rx="6.5" fill="url(#al)" transform="rotate(-0.69 402.0 342.2)"/>

<rect x="395.5" y="347.8" width="130.0" height="13.0" rx="6.5" fill="url(#th)" transform="rotate(-0.69 402.0 354.3)"/>
<line x1="412.2" y1="355.0" x2="508.8" y2="352.2" stroke="#05607f" stroke-width="1.3" stroke-opacity="0.50" stroke-linecap="round"/><line x1="415.1" y1="351.1" x2="472.0" y2="350.5" stroke="#3ab8e2" stroke-width="2.5" stroke-opacity="0.45" stroke-linecap="round"/><line x1="444.1" y1="356.8" x2="500.2" y2="356.1" stroke="#3ab8e2" stroke-width="1.7" stroke-opacity="0.41" stroke-linecap="round"/>
<rect x="395.5" y="347.8" width="130.0" height="13.0" rx="6.5" fill="url(#al)" transform="rotate(-0.69 402.0 354.3)"/>

<rect x="395.5" y="359.9" width="130.0" height="13.0" rx="6.5" fill="url(#th)" transform="rotate(-0.69 402.0 366.4)"/>
<line x1="412.2" y1="367.1" x2="508.8" y2="364.3" stroke="#05607f" stroke-width="1.3" stroke-opacity="0.50" stroke-linecap="round"/><line x1="434.4" y1="363.0" x2="491.3" y2="362.3" stroke="#3ab8e2" stroke-width="2.4" stroke-opacity="0.53" stroke-linecap="round"/><line x1="437.8" y1="369.0" x2="496.9" y2="368.3" stroke="#3ab8e2" stroke-width="2.3" stroke-opacity="0.48" stroke-linecap="round"/>
<rect x="395.5" y="359.9" width="130.0" height="13.0" rx="6.5" fill="url(#al)" transform="rotate(-0.69 402.0 366.4)"/>

<rect x="395.5" y="372.0" width="130.0" height="13.0" rx="6.5" fill="url(#th)" transform="rotate(-0.69 402.0 378.5)"/>
<line x1="412.2" y1="379.2" x2="508.8" y2="376.4" stroke="#05607f" stroke-width="1.3" stroke-opacity="0.50" stroke-linecap="round"/><line x1="422.9" y1="375.2" x2="450.3" y2="374.9" stroke="#3ab8e2" stroke-width="1.7" stroke-opacity="0.34" stroke-linecap="round"/><line x1="417.7" y1="381.3" x2="474.7" y2="380.6" stroke="#3ab8e2" stroke-width="2.2" stroke-opacity="0.45" stroke-linecap="round"/>
<rect x="395.5" y="372.0" width="130.0" height="13.0" rx="6.5" fill="url(#al)" transform="rotate(-0.69 402.0 378.5)"/>

<rect x="395.5" y="384.1" width="130.0" height="13.0" rx="6.5" fill="url(#th)" transform="rotate(-0.69 402.0 390.6)"/>
<line x1="412.2" y1="391.3" x2="508.8" y2="388.5" stroke="#05607f" stroke-width="1.3" stroke-opacity="0.50" stroke-linecap="round"/><line x1="439.5" y1="387.1" x2="490.8" y2="386.6" stroke="#3ab8e2" stroke-width="2.1" stroke-opacity="0.20" stroke-linecap="round"/><line x1="446.8" y1="393.1" x2="500.5" y2="392.4" stroke="#3ab8e2" stroke-width="2.1" stroke-opacity="0.41" stroke-linecap="round"/>
<rect x="395.5" y="384.1" width="130.0" height="13.0" rx="6.5" fill="url(#al)" transform="rotate(-0.69 402.0 390.6)"/>

<rect x="395.5" y="396.2" width="130.0" height="13.0" rx="6.5" fill="url(#th)" transform="rotate(-0.69 402.0 402.7)"/>
<line x1="412.2" y1="403.4" x2="508.8" y2="400.6" stroke="#05607f" stroke-width="1.3" stroke-opacity="0.50" stroke-linecap="round"/><line x1="440.9" y1="399.2" x2="469.6" y2="398.9" stroke="#3ab8e2" stroke-width="2.3" stroke-opacity="0.30" stroke-linecap="round"/><line x1="416.4" y1="405.5" x2="452.4" y2="405.1" stroke="#3ab8e2" stroke-width="2.3" stroke-opacity="0.28" stroke-linecap="round"/>
<rect x="395.5" y="396.2" width="130.0" height="13.0" rx="6.5" fill="url(#al)" transform="rotate(-0.69 402.0 402.7)"/>

<rect x="395.5" y="408.3" width="130.0" height="13.0" rx="6.5" fill="url(#th)" transform="rotate(-0.69 402.0 414.8)"/>
<line x1="412.2" y1="415.5" x2="508.8" y2="412.7" stroke="#05607f" stroke-width="1.3" stroke-opacity="0.50" stroke-linecap="round"/><line x1="444.3" y1="411.3" x2="506.4" y2="410.6" stroke="#3ab8e2" stroke-width="2.1" stroke-opacity="0.35" stroke-linecap="round"/><line x1="433.4" y1="417.4" x2="484.8" y2="416.8" stroke="#3ab8e2" stroke-width="2.4" stroke-opacity="0.45" stroke-linecap="round"/>
<rect x="395.5" y="408.3" width="130.0" height="13.0" rx="6.5" fill="url(#al)" transform="rotate(-0.69 402.0 414.8)"/>

<rect x="395.5" y="420.4" width="130.0" height="13.0" rx="6.5" fill="url(#th)" transform="rotate(-0.69 402.0 426.9)"/>
<line x1="412.2" y1="427.6" x2="508.8" y2="424.8" stroke="#05607f" stroke-width="1.3" stroke-opacity="0.50" stroke-linecap="round"/><line x1="440.2" y1="423.4" x2="469.3" y2="423.1" stroke="#3ab8e2" stroke-width="1.7" stroke-opacity="0.30" stroke-linecap="round"/><line x1="444.5" y1="429.4" x2="481.9" y2="429.0" stroke="#3ab8e2" stroke-width="2.2" stroke-opacity="0.20" stroke-linecap="round"/>
<rect x="395.5" y="420.4" width="130.0" height="13.0" rx="6.5" fill="url(#al)" transform="rotate(-0.69 402.0 426.9)"/>

<rect x="395.5" y="432.5" width="130.0" height="13.0" rx="6.5" fill="url(#th)" transform="rotate(-0.69 402.0 439.0)"/>
<line x1="412.2" y1="439.7" x2="508.8" y2="436.9" stroke="#05607f" stroke-width="1.3" stroke-opacity="0.50" stroke-linecap="round"/><line x1="415.8" y1="435.8" x2="451.9" y2="435.4" stroke="#3ab8e2" stroke-width="2.3" stroke-opacity="0.48" stroke-linecap="round"/><line x1="441.7" y1="441.5" x2="478.6" y2="441.1" stroke="#3ab8e2" stroke-width="2.1" stroke-opacity="0.39" stroke-linecap="round"/>
<rect x="395.5" y="432.5" width="130.0" height="13.0" rx="6.5" fill="url(#al)" transform="rotate(-0.69 402.0 439.0)"/>

<rect x="395.5" y="444.6" width="130.0" height="13.0" rx="6.5" fill="url(#th)" transform="rotate(-0.69 402.0 451.1)"/>
<line x1="412.2" y1="451.8" x2="508.8" y2="449.0" stroke="#05607f" stroke-width="1.3" stroke-opacity="0.50" stroke-linecap="round"/><line x1="432.8" y1="447.7" x2="463.4" y2="447.4" stroke="#3ab8e2" stroke-width="2.5" stroke-opacity="0.28" stroke-linecap="round"/><line x1="454.4" y1="453.5" x2="509.9" y2="452.8" stroke="#3ab8e2" stroke-width="1.6" stroke-opacity="0.38" stroke-linecap="round"/>
<rect x="395.5" y="444.6" width="130.0" height="13.0" rx="6.5" fill="url(#al)" transform="rotate(-0.69 402.0 451.1)"/>

<rect x="395.5" y="456.7" width="130.0" height="13.0" rx="6.5" fill="url(#th)" transform="rotate(-0.69 402.0 463.2)"/>
<line x1="412.2" y1="463.9" x2="508.8" y2="461.1" stroke="#05607f" stroke-width="1.3" stroke-opacity="0.50" stroke-linecap="round"/><line x1="447.7" y1="459.6" x2="509.5" y2="458.9" stroke="#3ab8e2" stroke-width="2.0" stroke-opacity="0.31" stroke-linecap="round"/><line x1="422.1" y1="465.9" x2="483.1" y2="465.2" stroke="#3ab8e2" stroke-width="1.8" stroke-opacity="0.43" stroke-linecap="round"/>
<rect x="395.5" y="456.7" width="130.0" height="13.0" rx="6.5" fill="url(#al)" transform="rotate(-0.69 402.0 463.2)"/>

<rect x="395.5" y="468.8" width="130.0" height="13.0" rx="6.5" fill="url(#th)" transform="rotate(-0.69 402.0 475.3)"/>
<line x1="412.2" y1="476.0" x2="508.8" y2="473.2" stroke="#05607f" stroke-width="1.3" stroke-opacity="0.50" stroke-linecap="round"/><line x1="419.2" y1="472.1" x2="464.7" y2="471.6" stroke="#3ab8e2" stroke-width="2.6" stroke-opacity="0.25" stroke-linecap="round"/><line x1="447.7" y1="477.7" x2="492.7" y2="477.2" stroke="#3ab8e2" stroke-width="2.5" stroke-opacity="0.48" stroke-linecap="round"/>
<rect x="395.5" y="468.8" width="130.0" height="13.0" rx="6.5" fill="url(#al)" transform="rotate(-0.69 402.0 475.3)"/>

<rect x="395.5" y="480.9" width="130.0" height="13.0" rx="6.5" fill="url(#th)" transform="rotate(-0.69 402.0 487.4)"/>
<line x1="412.2" y1="488.1" x2="508.8" y2="485.3" stroke="#05607f" stroke-width="1.3" stroke-opacity="0.50" stroke-linecap="round"/><line x1="422.9" y1="484.1" x2="482.2" y2="483.5" stroke="#3ab8e2" stroke-width="2.1" stroke-opacity="0.21" stroke-linecap="round"/><line x1="413.4" y1="490.2" x2="457.8" y2="489.7" stroke="#3ab8e2" stroke-width="2.1" stroke-opacity="0.32" stroke-linecap="round"/>
<rect x="395.5" y="480.9" width="130.0" height="13.0" rx="6.5" fill="url(#al)" transform="rotate(-0.69 402.0 487.4)"/>

<rect x="395.5" y="493.0" width="130.0" height="13.0" rx="6.5" fill="url(#th)" transform="rotate(-0.69 402.0 499.5)"/>
<line x1="412.2" y1="500.2" x2="508.8" y2="497.4" stroke="#05607f" stroke-width="1.3" stroke-opacity="0.50" stroke-linecap="round"/><line x1="419.1" y1="496.3" x2="458.0" y2="495.8" stroke="#3ab8e2" stroke-width="1.9" stroke-opacity="0.54" stroke-linecap="round"/><line x1="413.4" y1="502.3" x2="467.2" y2="501.7" stroke="#3ab8e2" stroke-width="2.4" stroke-opacity="0.25" stroke-linecap="round"/>
<rect x="395.5" y="493.0" width="130.0" height="13.0" rx="6.5" fill="url(#al)" transform="rotate(-0.69 402.0 499.5)"/>

<rect x="395.5" y="505.1" width="130.0" height="13.0" rx="6.5" fill="url(#th)" transform="rotate(-0.69 402.0 511.6)"/>
<line x1="412.2" y1="512.3" x2="508.8" y2="509.5" stroke="#05607f" stroke-width="1.3" stroke-opacity="0.50" stroke-linecap="round"/><line x1="452.1" y1="508.0" x2="504.6" y2="507.4" stroke="#3ab8e2" stroke-width="2.5" stroke-opacity="0.32" stroke-linecap="round"/><line x1="428.9" y1="514.3" x2="469.6" y2="513.8" stroke="#3ab8e2" stroke-width="2.6" stroke-opacity="0.44" stroke-linecap="round"/>
<rect x="395.5" y="505.1" width="130.0" height="13.0" rx="6.5" fill="url(#al)" transform="rotate(-0.69 402.0 511.6)"/>

<rect x="137.5" y="93.3" width="146.8" height="13.0" rx="6.5" fill="url(#th)" transform="rotate(-0.69 144.0 99.8)"/>
<line x1="154.4" y1="100.4" x2="255.4" y2="97.6" stroke="#05607f" stroke-width="1.3" stroke-opacity="0.50" stroke-linecap="round"/><line x1="171.3" y1="96.4" x2="215.2" y2="95.9" stroke="#3ab8e2" stroke-width="1.9" stroke-opacity="0.22" stroke-linecap="round"/><line x1="160.0" y1="102.5" x2="219.5" y2="101.8" stroke="#3ab8e2" stroke-width="1.9" stroke-opacity="0.57" stroke-linecap="round"/>
<rect x="137.5" y="93.3" width="146.8" height="13.0" rx="6.5" fill="url(#al)" transform="rotate(-0.69 144.0 99.8)"/>
<rect x="141.7" y="105.0" width="138.8" height="13.0" rx="6.5" fill="url(#th)" transform="rotate(-0.73 148.2 111.5)"/>
<line x1="158.3" y1="112.1" x2="252.0" y2="109.3" stroke="#05607f" stroke-width="1.3" stroke-opacity="0.50" stroke-linecap="round"/><line x1="169.5" y1="108.1" x2="204.4" y2="107.7" stroke="#3ab8e2" stroke-width="2.1" stroke-opacity="0.28" stroke-linecap="round"/><line x1="174.6" y1="114.1" x2="234.1" y2="113.4" stroke="#3ab8e2" stroke-width="2.5" stroke-opacity="0.52" stroke-linecap="round"/>
<rect x="141.7" y="105.0" width="138.8" height="13.0" rx="6.5" fill="url(#al)" transform="rotate(-0.73 148.2 111.5)"/>
<rect x="145.9" y="116.7" width="130.9" height="13.0" rx="6.5" fill="url(#th)" transform="rotate(-0.78 152.4 123.2)"/>
<line x1="162.2" y1="123.8" x2="248.6" y2="121.0" stroke="#05607f" stroke-width="1.3" stroke-opacity="0.50" stroke-linecap="round"/><line x1="186.8" y1="119.6" x2="240.3" y2="119.0" stroke="#3ab8e2" stroke-width="2.5" stroke-opacity="0.42" stroke-linecap="round"/><line x1="190.2" y1="125.6" x2="215.3" y2="125.3" stroke="#3ab8e2" stroke-width="2.3" stroke-opacity="0.38" stroke-linecap="round"/>
<rect x="145.9" y="116.7" width="130.9" height="13.0" rx="6.5" fill="url(#al)" transform="rotate(-0.78 152.4 123.2)"/>
<rect x="150.1" y="128.4" width="123.0" height="13.0" rx="6.5" fill="url(#th)" transform="rotate(-0.83 156.6 134.9)"/>
<line x1="166.1" y1="135.5" x2="245.1" y2="132.7" stroke="#05607f" stroke-width="1.3" stroke-opacity="0.50" stroke-linecap="round"/><line x1="192.8" y1="131.3" x2="233.6" y2="130.7" stroke="#3ab8e2" stroke-width="1.9" stroke-opacity="0.22" stroke-linecap="round"/><line x1="198.8" y1="137.2" x2="224.2" y2="136.8" stroke="#3ab8e2" stroke-width="2.1" stroke-opacity="0.34" stroke-linecap="round"/>
<rect x="150.1" y="128.4" width="123.0" height="13.0" rx="6.5" fill="url(#al)" transform="rotate(-0.83 156.6 134.9)"/>
<rect x="154.3" y="140.1" width="115.0" height="13.0" rx="6.5" fill="url(#th)" transform="rotate(-0.90 160.8 146.6)"/>
<line x1="170.0" y1="147.2" x2="241.7" y2="144.4" stroke="#05607f" stroke-width="1.3" stroke-opacity="0.50" stroke-linecap="round"/><line x1="180.0" y1="143.2" x2="219.7" y2="142.6" stroke="#3ab8e2" stroke-width="2.6" stroke-opacity="0.30" stroke-linecap="round"/><line x1="191.3" y1="149.0" x2="219.0" y2="148.6" stroke="#3ab8e2" stroke-width="2.2" stroke-opacity="0.36" stroke-linecap="round"/>
<rect x="154.3" y="140.1" width="115.0" height="13.0" rx="6.5" fill="url(#al)" transform="rotate(-0.90 160.8 146.6)"/>
<rect x="158.5" y="151.8" width="107.1" height="13.0" rx="6.5" fill="url(#th)" transform="rotate(-0.97 165.0 158.3)"/>
<line x1="173.9" y1="158.9" x2="238.3" y2="156.1" stroke="#05607f" stroke-width="1.3" stroke-opacity="0.50" stroke-linecap="round"/><line x1="179.2" y1="155.0" x2="200.7" y2="154.6" stroke="#3ab8e2" stroke-width="1.8" stroke-opacity="0.56" stroke-linecap="round"/><line x1="188.5" y1="160.8" x2="211.4" y2="160.4" stroke="#3ab8e2" stroke-width="2.5" stroke-opacity="0.60" stroke-linecap="round"/>
<rect x="158.5" y="151.8" width="107.1" height="13.0" rx="6.5" fill="url(#al)" transform="rotate(-0.97 165.0 158.3)"/>
<rect x="162.7" y="163.5" width="99.1" height="13.0" rx="6.5" fill="url(#th)" transform="rotate(-1.06 169.2 170.0)"/>
<line x1="177.7" y1="170.6" x2="234.9" y2="167.8" stroke="#05607f" stroke-width="1.3" stroke-opacity="0.50" stroke-linecap="round"/><line x1="189.5" y1="166.5" x2="208.0" y2="166.2" stroke="#3ab8e2" stroke-width="1.8" stroke-opacity="0.24" stroke-linecap="round"/><line x1="186.9" y1="172.6" x2="204.4" y2="172.2" stroke="#3ab8e2" stroke-width="1.8" stroke-opacity="0.30" stroke-linecap="round"/>
<rect x="162.7" y="163.5" width="99.1" height="13.0" rx="6.5" fill="url(#al)" transform="rotate(-1.06 169.2 170.0)"/>
<rect x="166.9" y="175.2" width="91.2" height="13.0" rx="6.5" fill="url(#th)" transform="rotate(-1.17 173.4 181.7)"/>
<line x1="181.6" y1="182.3" x2="231.4" y2="179.5" stroke="#05607f" stroke-width="1.3" stroke-opacity="0.50" stroke-linecap="round"/><line x1="194.4" y1="178.2" x2="224.8" y2="177.5" stroke="#3ab8e2" stroke-width="2.3" stroke-opacity="0.37" stroke-linecap="round"/><line x1="191.2" y1="184.2" x2="214.7" y2="183.7" stroke="#3ab8e2" stroke-width="2.0" stroke-opacity="0.34" stroke-linecap="round"/>
<rect x="166.9" y="175.2" width="91.2" height="13.0" rx="6.5" fill="url(#al)" transform="rotate(-1.17 173.4 181.7)"/>
<rect x="171.1" y="186.9" width="83.2" height="13.0" rx="6.5" fill="url(#th)" transform="rotate(-1.31 177.6 193.4)"/>
<line x1="185.5" y1="194.0" x2="228.0" y2="191.2" stroke="#05607f" stroke-width="1.3" stroke-opacity="0.50" stroke-linecap="round"/><line x1="187.0" y1="190.1" x2="203.1" y2="189.7" stroke="#3ab8e2" stroke-width="2.6" stroke-opacity="0.25" stroke-linecap="round"/><line x1="195.3" y1="195.9" x2="217.1" y2="195.3" stroke="#3ab8e2" stroke-width="2.5" stroke-opacity="0.29" stroke-linecap="round"/>
<rect x="171.1" y="186.9" width="83.2" height="13.0" rx="6.5" fill="url(#al)" transform="rotate(-1.31 177.6 193.4)"/>
<rect x="175.3" y="198.6" width="75.3" height="13.0" rx="6.5" fill="url(#th)" transform="rotate(-1.47 181.8 205.1)"/>
<line x1="189.4" y1="205.7" x2="224.6" y2="202.9" stroke="#05607f" stroke-width="1.3" stroke-opacity="0.50" stroke-linecap="round"/><line x1="193.8" y1="201.7" x2="206.7" y2="201.3" stroke="#3ab8e2" stroke-width="2.0" stroke-opacity="0.38" stroke-linecap="round"/><line x1="204.5" y1="207.4" x2="225.1" y2="206.7" stroke="#3ab8e2" stroke-width="2.5" stroke-opacity="0.21" stroke-linecap="round"/>
<rect x="175.3" y="198.6" width="75.3" height="13.0" rx="6.5" fill="url(#al)" transform="rotate(-1.47 181.8 205.1)"/>
<rect x="179.5" y="210.3" width="67.4" height="13.0" rx="6.5" fill="url(#th)" transform="rotate(-1.69 186.0 216.8)"/>
<line x1="193.3" y1="217.4" x2="221.1" y2="214.6" stroke="#05607f" stroke-width="1.3" stroke-opacity="0.50" stroke-linecap="round"/><line x1="193.8" y1="213.5" x2="209.0" y2="212.9" stroke="#3ab8e2" stroke-width="2.5" stroke-opacity="0.39" stroke-linecap="round"/><line x1="200.8" y1="219.3" x2="208.4" y2="219.0" stroke="#3ab8e2" stroke-width="2.0" stroke-opacity="0.57" stroke-linecap="round"/>
<rect x="179.5" y="210.3" width="67.4" height="13.0" rx="6.5" fill="url(#al)" transform="rotate(-1.69 186.0 216.8)"/>
<rect x="183.7" y="222.0" width="59.4" height="13.0" rx="6.5" fill="url(#th)" transform="rotate(-1.98 190.2 228.5)"/>
<rect x="183.7" y="222.0" width="59.4" height="13.0" rx="6.5" fill="url(#al)" transform="rotate(-1.98 190.2 228.5)"/>
<rect x="187.9" y="233.7" width="51.5" height="13.0" rx="6.5" fill="url(#th)" transform="rotate(-2.38 194.4 240.2)"/>
<rect x="187.9" y="233.7" width="51.5" height="13.0" rx="6.5" fill="url(#al)" transform="rotate(-2.38 194.4 240.2)"/>
<rect x="192.1" y="245.4" width="43.5" height="13.0" rx="6.5" fill="url(#th)" transform="rotate(-3.00 198.6 251.9)"/>
<rect x="192.1" y="245.4" width="43.5" height="13.0" rx="6.5" fill="url(#al)" transform="rotate(-3.00 198.6 251.9)"/>
<rect x="196.3" y="257.1" width="35.6" height="13.0" rx="6.5" fill="url(#th)" transform="rotate(-4.06 202.8 263.6)"/>
<rect x="196.3" y="257.1" width="35.6" height="13.0" rx="6.5" fill="url(#al)" transform="rotate(-4.06 202.8 263.6)"/>
<rect x="200.5" y="268.8" width="27.7" height="13.0" rx="6.5" fill="url(#th)" transform="rotate(-6.25 207.0 275.3)"/>
<rect x="200.5" y="268.8" width="27.7" height="13.0" rx="6.5" fill="url(#al)" transform="rotate(-6.25 207.0 275.3)"/>
<rect x="263.2" y="91.9" width="129.3" height="13.0" rx="6.5" fill="url(#th2)" transform="rotate(2.55 269.7 98.4)"/>
<line x1="285.6" y1="99.9" x2="375.9" y2="102.4" stroke="#05607f" stroke-width="1.3" stroke-opacity="0.50" stroke-linecap="round"/><line x1="319.1" y1="97.6" x2="373.1" y2="100.0" stroke="#3ab8e2" stroke-width="2.6" stroke-opacity="0.30" stroke-linecap="round"/><line x1="290.7" y1="102.3" x2="320.6" y2="103.7" stroke="#3ab8e2" stroke-width="2.1" stroke-opacity="0.47" stroke-linecap="round"/>
<rect x="263.2" y="91.9" width="129.3" height="13.0" rx="6.5" fill="url(#al)" transform="rotate(2.55 269.7 98.4)"/>
<rect x="259.5" y="103.5" width="128.7" height="13.0" rx="6.5" fill="url(#th2)" transform="rotate(2.40 266.0 110.0)"/>
<line x1="281.9" y1="111.4" x2="371.7" y2="113.6" stroke="#05607f" stroke-width="1.3" stroke-opacity="0.50" stroke-linecap="round"/><line x1="319.8" y1="109.2" x2="368.8" y2="111.3" stroke="#3ab8e2" stroke-width="2.2" stroke-opacity="0.51" stroke-linecap="round"/><line x1="300.6" y1="114.4" x2="343.9" y2="116.2" stroke="#3ab8e2" stroke-width="1.6" stroke-opacity="0.51" stroke-linecap="round"/>
<rect x="259.5" y="103.5" width="128.7" height="13.0" rx="6.5" fill="url(#al)" transform="rotate(2.40 266.0 110.0)"/>
<rect x="255.9" y="115.0" width="128.1" height="13.0" rx="6.5" fill="url(#th2)" transform="rotate(2.25 262.4 121.5)"/>
<line x1="278.2" y1="122.9" x2="367.5" y2="124.9" stroke="#05607f" stroke-width="1.3" stroke-opacity="0.50" stroke-linecap="round"/><line x1="288.4" y1="119.5" x2="343.9" y2="121.7" stroke="#3ab8e2" stroke-width="2.2" stroke-opacity="0.32" stroke-linecap="round"/><line x1="284.1" y1="125.4" x2="316.9" y2="126.7" stroke="#3ab8e2" stroke-width="2.2" stroke-opacity="0.48" stroke-linecap="round"/>
<rect x="255.9" y="115.0" width="128.1" height="13.0" rx="6.5" fill="url(#al)" transform="rotate(2.25 262.4 121.5)"/>
<rect x="252.2" y="126.6" width="127.5" height="13.0" rx="6.5" fill="url(#th2)" transform="rotate(2.09 258.7 133.1)"/>
<line x1="274.6" y1="134.5" x2="363.3" y2="136.1" stroke="#05607f" stroke-width="1.3" stroke-opacity="0.50" stroke-linecap="round"/><line x1="280.0" y1="130.9" x2="306.5" y2="131.8" stroke="#3ab8e2" stroke-width="2.1" stroke-opacity="0.43" stroke-linecap="round"/><line x1="290.4" y1="137.3" x2="322.1" y2="138.4" stroke="#3ab8e2" stroke-width="2.2" stroke-opacity="0.20" stroke-linecap="round"/>
<rect x="252.2" y="126.6" width="127.5" height="13.0" rx="6.5" fill="url(#al)" transform="rotate(2.09 258.7 133.1)"/>
<rect x="248.6" y="138.2" width="126.9" height="13.0" rx="6.5" fill="url(#th2)" transform="rotate(1.94 255.1 144.7)"/>
<line x1="270.9" y1="146.0" x2="359.2" y2="147.4" stroke="#05607f" stroke-width="1.3" stroke-opacity="0.50" stroke-linecap="round"/><line x1="283.5" y1="142.6" x2="323.0" y2="144.0" stroke="#3ab8e2" stroke-width="2.6" stroke-opacity="0.46" stroke-linecap="round"/><line x1="305.7" y1="149.4" x2="345.6" y2="150.7" stroke="#3ab8e2" stroke-width="1.8" stroke-opacity="0.30" stroke-linecap="round"/>
<rect x="248.6" y="138.2" width="126.9" height="13.0" rx="6.5" fill="url(#al)" transform="rotate(1.94 255.1 144.7)"/>
<rect x="244.9" y="149.7" width="126.4" height="13.0" rx="6.5" fill="url(#th2)" transform="rotate(1.78 251.4 156.2)"/>
<line x1="267.2" y1="157.5" x2="355.0" y2="158.7" stroke="#05607f" stroke-width="1.3" stroke-opacity="0.50" stroke-linecap="round"/><line x1="304.9" y1="154.9" x2="352.2" y2="156.4" stroke="#3ab8e2" stroke-width="1.9" stroke-opacity="0.21" stroke-linecap="round"/><line x1="287.1" y1="160.3" x2="333.4" y2="161.8" stroke="#3ab8e2" stroke-width="2.0" stroke-opacity="0.30" stroke-linecap="round"/>
<rect x="244.9" y="149.7" width="126.4" height="13.0" rx="6.5" fill="url(#al)" transform="rotate(1.78 251.4 156.2)"/>
<rect x="241.3" y="161.3" width="125.8" height="13.0" rx="6.5" fill="url(#th2)" transform="rotate(1.62 247.8 167.8)"/>
<line x1="263.6" y1="169.0" x2="350.8" y2="169.9" stroke="#05607f" stroke-width="1.3" stroke-opacity="0.50" stroke-linecap="round"/><line x1="289.9" y1="166.0" x2="344.3" y2="167.5" stroke="#3ab8e2" stroke-width="1.8" stroke-opacity="0.21" stroke-linecap="round"/><line x1="277.3" y1="171.6" x2="314.9" y2="172.7" stroke="#3ab8e2" stroke-width="2.3" stroke-opacity="0.28" stroke-linecap="round"/>
<rect x="241.3" y="161.3" width="125.8" height="13.0" rx="6.5" fill="url(#al)" transform="rotate(1.62 247.8 167.8)"/>
<rect x="237.6" y="172.9" width="125.2" height="13.0" rx="6.5" fill="url(#th2)" transform="rotate(1.46 244.1 179.4)"/>
<line x1="259.9" y1="180.6" x2="346.6" y2="181.2" stroke="#05607f" stroke-width="1.3" stroke-opacity="0.50" stroke-linecap="round"/><line x1="291.0" y1="177.6" x2="338.8" y2="178.8" stroke="#3ab8e2" stroke-width="2.1" stroke-opacity="0.28" stroke-linecap="round"/><line x1="297.3" y1="183.7" x2="331.1" y2="184.6" stroke="#3ab8e2" stroke-width="2.4" stroke-opacity="0.29" stroke-linecap="round"/>
<rect x="237.6" y="172.9" width="125.2" height="13.0" rx="6.5" fill="url(#al)" transform="rotate(1.46 244.1 179.4)"/>
<rect x="234.0" y="184.4" width="124.6" height="13.0" rx="6.5" fill="url(#th2)" transform="rotate(1.30 240.5 190.9)"/>
<line x1="256.2" y1="192.1" x2="342.4" y2="192.5" stroke="#05607f" stroke-width="1.3" stroke-opacity="0.50" stroke-linecap="round"/><line x1="265.5" y1="188.5" x2="313.8" y2="189.6" stroke="#3ab8e2" stroke-width="1.9" stroke-opacity="0.58" stroke-linecap="round"/><line x1="275.7" y1="194.7" x2="305.2" y2="195.4" stroke="#3ab8e2" stroke-width="1.8" stroke-opacity="0.37" stroke-linecap="round"/>
<rect x="234.0" y="184.4" width="124.6" height="13.0" rx="6.5" fill="url(#al)" transform="rotate(1.30 240.5 190.9)"/>
<rect x="230.3" y="196.0" width="124.0" height="13.0" rx="6.5" fill="url(#th2)" transform="rotate(1.14 236.8 202.5)"/>
<line x1="252.6" y1="203.6" x2="338.2" y2="203.7" stroke="#05607f" stroke-width="1.3" stroke-opacity="0.50" stroke-linecap="round"/><line x1="278.3" y1="200.3" x2="332.5" y2="201.4" stroke="#3ab8e2" stroke-width="1.7" stroke-opacity="0.36" stroke-linecap="round"/><line x1="261.4" y1="206.0" x2="316.3" y2="207.1" stroke="#3ab8e2" stroke-width="1.7" stroke-opacity="0.22" stroke-linecap="round"/>
<rect x="230.3" y="196.0" width="124.0" height="13.0" rx="6.5" fill="url(#al)" transform="rotate(1.14 236.8 202.5)"/>
<rect x="226.7" y="207.6" width="123.5" height="13.0" rx="6.5" fill="url(#th2)" transform="rotate(0.97 233.2 214.1)"/>
<line x1="248.9" y1="215.1" x2="334.0" y2="215.0" stroke="#05607f" stroke-width="1.3" stroke-opacity="0.50" stroke-linecap="round"/><line x1="252.1" y1="211.4" x2="287.9" y2="212.0" stroke="#3ab8e2" stroke-width="2.5" stroke-opacity="0.55" stroke-linecap="round"/><line x1="276.9" y1="217.8" x2="332.3" y2="218.8" stroke="#3ab8e2" stroke-width="2.5" stroke-opacity="0.33" stroke-linecap="round"/>
<rect x="226.7" y="207.6" width="123.5" height="13.0" rx="6.5" fill="url(#al)" transform="rotate(0.97 233.2 214.1)"/>
<rect x="223.1" y="219.1" width="122.9" height="13.0" rx="6.5" fill="url(#th2)" transform="rotate(0.81 229.6 225.6)"/>
<line x1="245.2" y1="226.6" x2="329.8" y2="226.2" stroke="#05607f" stroke-width="1.3" stroke-opacity="0.50" stroke-linecap="round"/><line x1="253.0" y1="222.9" x2="306.1" y2="223.7" stroke="#3ab8e2" stroke-width="2.3" stroke-opacity="0.21" stroke-linecap="round"/><line x1="270.5" y1="229.2" x2="305.7" y2="229.7" stroke="#3ab8e2" stroke-width="2.0" stroke-opacity="0.33" stroke-linecap="round"/>
<rect x="223.1" y="219.1" width="122.9" height="13.0" rx="6.5" fill="url(#al)" transform="rotate(0.81 229.6 225.6)"/>
<rect x="219.4" y="230.7" width="122.3" height="13.0" rx="6.5" fill="url(#th2)" transform="rotate(0.64 225.9 237.2)"/>
<line x1="241.5" y1="238.2" x2="325.6" y2="237.5" stroke="#05607f" stroke-width="1.3" stroke-opacity="0.50" stroke-linecap="round"/><line x1="248.7" y1="234.4" x2="271.6" y2="234.7" stroke="#3ab8e2" stroke-width="1.9" stroke-opacity="0.34" stroke-linecap="round"/><line x1="277.3" y1="240.8" x2="304.1" y2="241.1" stroke="#3ab8e2" stroke-width="2.6" stroke-opacity="0.28" stroke-linecap="round"/>
<rect x="219.4" y="230.7" width="122.3" height="13.0" rx="6.5" fill="url(#al)" transform="rotate(0.64 225.9 237.2)"/>
<rect x="215.8" y="242.3" width="121.7" height="13.0" rx="6.5" fill="url(#th2)" transform="rotate(0.47 222.3 248.8)"/>
<line x1="237.9" y1="249.7" x2="321.4" y2="248.8" stroke="#05607f" stroke-width="1.3" stroke-opacity="0.50" stroke-linecap="round"/><line x1="251.8" y1="246.0" x2="300.5" y2="246.4" stroke="#3ab8e2" stroke-width="2.4" stroke-opacity="0.37" stroke-linecap="round"/><line x1="240.6" y1="251.9" x2="278.3" y2="252.2" stroke="#3ab8e2" stroke-width="2.0" stroke-opacity="0.57" stroke-linecap="round"/>
<rect x="215.8" y="242.3" width="121.7" height="13.0" rx="6.5" fill="url(#al)" transform="rotate(0.47 222.3 248.8)"/>
<rect x="212.1" y="253.8" width="121.2" height="13.0" rx="6.5" fill="url(#th2)" transform="rotate(0.30 218.6 260.3)"/>
<line x1="234.2" y1="261.2" x2="317.2" y2="260.0" stroke="#05607f" stroke-width="1.3" stroke-opacity="0.50" stroke-linecap="round"/><line x1="242.1" y1="257.4" x2="276.1" y2="257.6" stroke="#3ab8e2" stroke-width="2.5" stroke-opacity="0.21" stroke-linecap="round"/><line x1="249.9" y1="263.5" x2="298.1" y2="263.7" stroke="#3ab8e2" stroke-width="2.4" stroke-opacity="0.22" stroke-linecap="round"/>
<rect x="212.1" y="253.8" width="121.2" height="13.0" rx="6.5" fill="url(#al)" transform="rotate(0.30 218.6 260.3)"/>
<rect x="208.5" y="265.4" width="120.6" height="13.0" rx="6.5" fill="url(#th2)" transform="rotate(0.12 215.0 271.9)"/>
<line x1="230.5" y1="272.7" x2="313.0" y2="271.3" stroke="#05607f" stroke-width="1.3" stroke-opacity="0.50" stroke-linecap="round"/><line x1="232.7" y1="268.9" x2="257.1" y2="269.0" stroke="#3ab8e2" stroke-width="2.5" stroke-opacity="0.30" stroke-linecap="round"/><line x1="258.2" y1="275.0" x2="308.8" y2="275.1" stroke="#3ab8e2" stroke-width="1.9" stroke-opacity="0.31" stroke-linecap="round"/>
<rect x="208.5" y="265.4" width="120.6" height="13.0" rx="6.5" fill="url(#al)" transform="rotate(0.12 215.0 271.9)"/>
<rect x="202.2" y="271.2" width="124.5" height="9.5" rx="4.8" fill="url(#th)" transform="rotate(0.00 207.0 276.0)"/>
<polygon points="262,100 276,100 220,268 207,268" fill="#044a68" opacity="0.42" filter="url(#bl2)"/>
<polygon points="648,80 661.8,91.9 643.9,125.6 625.9,164.1 616.0,204.6 611.0,252.0 613.0,289.4 623.7,336.8 643.1,377.1 673.7,423.0 700.3,453.7 736.4,478.7 796.3,500.1 857.7,510.0 913.4,505.1 915,80" fill="#0e80a7"/>
<rect x="652.9" y="84.9" width="236.5" height="13.0" rx="6.5" fill="url(#th)" transform="rotate(12.00 659.4 91.4)"/>
<line x1="668.1" y1="94.0" x2="794.4" y2="119.2" stroke="#05607f" stroke-width="1.3" stroke-opacity="0.50" stroke-linecap="round"/><line x1="722.6" y1="102.1" x2="786.4" y2="115.7" stroke="#3ab8e2" stroke-width="1.9" stroke-opacity="0.49" stroke-linecap="round"/><line x1="686.4" y1="99.8" x2="733.9" y2="109.8" stroke="#3ab8e2" stroke-width="1.6" stroke-opacity="0.50" stroke-linecap="round"/>
<rect x="652.9" y="84.9" width="236.5" height="13.0" rx="6.5" fill="url(#alG)" transform="rotate(12.00 659.4 91.4)"/>

<rect x="647.3" y="95.4" width="236.5" height="13.0" rx="6.5" fill="url(#th)" transform="rotate(11.38 653.8 101.9)"/>
<line x1="662.5" y1="104.5" x2="789.1" y2="128.3" stroke="#05607f" stroke-width="1.3" stroke-opacity="0.50" stroke-linecap="round"/><line x1="714.9" y1="111.5" x2="779.6" y2="124.6" stroke="#3ab8e2" stroke-width="2.5" stroke-opacity="0.21" stroke-linecap="round"/><line x1="676.4" y1="109.1" x2="733.5" y2="120.6" stroke="#3ab8e2" stroke-width="2.6" stroke-opacity="0.58" stroke-linecap="round"/>
<rect x="647.3" y="95.4" width="236.5" height="13.0" rx="6.5" fill="url(#alG)" transform="rotate(11.38 653.8 101.9)"/>

<rect x="641.7" y="105.9" width="236.5" height="13.0" rx="6.5" fill="url(#th)" transform="rotate(10.75 648.2 112.4)"/>
<line x1="656.9" y1="114.9" x2="783.8" y2="137.4" stroke="#05607f" stroke-width="1.3" stroke-opacity="0.50" stroke-linecap="round"/><line x1="680.2" y1="115.9" x2="726.7" y2="124.7" stroke="#3ab8e2" stroke-width="2.0" stroke-opacity="0.40" stroke-linecap="round"/><line x1="709.0" y1="126.6" x2="752.2" y2="134.8" stroke="#3ab8e2" stroke-width="2.4" stroke-opacity="0.50" stroke-linecap="round"/>
<rect x="641.7" y="105.9" width="236.5" height="13.0" rx="6.5" fill="url(#alG)" transform="rotate(10.75 648.2 112.4)"/>

<rect x="636.1" y="116.5" width="236.5" height="13.0" rx="6.5" fill="url(#th)" transform="rotate(10.13 642.6 123.0)"/>
<line x1="651.4" y1="125.3" x2="778.4" y2="146.4" stroke="#05607f" stroke-width="1.3" stroke-opacity="0.50" stroke-linecap="round"/><line x1="698.7" y1="130.3" x2="770.4" y2="143.2" stroke="#3ab8e2" stroke-width="2.2" stroke-opacity="0.33" stroke-linecap="round"/><line x1="670.0" y1="130.5" x2="722.0" y2="139.8" stroke="#3ab8e2" stroke-width="2.4" stroke-opacity="0.23" stroke-linecap="round"/>
<rect x="636.1" y="116.5" width="236.5" height="13.0" rx="6.5" fill="url(#alG)" transform="rotate(10.13 642.6 123.0)"/>

<rect x="630.9" y="127.2" width="236.5" height="13.0" rx="6.5" fill="url(#th)" transform="rotate(9.33 637.4 133.7)"/>
<line x1="646.3" y1="136.0" x2="773.6" y2="155.3" stroke="#05607f" stroke-width="1.3" stroke-opacity="0.50" stroke-linecap="round"/><line x1="659.1" y1="134.6" x2="730.0" y2="146.3" stroke="#3ab8e2" stroke-width="1.8" stroke-opacity="0.23" stroke-linecap="round"/><line x1="649.2" y1="138.3" x2="710.5" y2="148.4" stroke="#3ab8e2" stroke-width="1.9" stroke-opacity="0.59" stroke-linecap="round"/>
<rect x="630.9" y="127.2" width="236.5" height="13.0" rx="6.5" fill="url(#alG)" transform="rotate(9.33 637.4 133.7)"/>

<rect x="625.9" y="138.0" width="236.5" height="13.0" rx="6.5" fill="url(#th)" transform="rotate(8.50 632.4 144.5)"/>
<line x1="641.3" y1="146.6" x2="768.9" y2="164.1" stroke="#05607f" stroke-width="1.3" stroke-opacity="0.50" stroke-linecap="round"/><line x1="692.1" y1="150.8" x2="770.6" y2="162.5" stroke="#3ab8e2" stroke-width="1.9" stroke-opacity="0.23" stroke-linecap="round"/><line x1="647.7" y1="149.4" x2="706.5" y2="158.2" stroke="#3ab8e2" stroke-width="2.3" stroke-opacity="0.38" stroke-linecap="round"/>
<rect x="625.9" y="138.0" width="236.5" height="13.0" rx="6.5" fill="url(#alG)" transform="rotate(8.50 632.4 144.5)"/>

<rect x="620.9" y="148.8" width="236.5" height="13.0" rx="6.5" fill="url(#th)" transform="rotate(7.66 627.4 155.3)"/>
<line x1="636.3" y1="157.3" x2="764.2" y2="172.9" stroke="#05607f" stroke-width="1.3" stroke-opacity="0.50" stroke-linecap="round"/><line x1="651.1" y1="155.9" x2="706.1" y2="163.3" stroke="#3ab8e2" stroke-width="2.2" stroke-opacity="0.47" stroke-linecap="round"/><line x1="679.0" y1="164.9" x2="754.8" y2="175.1" stroke="#3ab8e2" stroke-width="2.3" stroke-opacity="0.25" stroke-linecap="round"/>
<rect x="620.9" y="148.8" width="236.5" height="13.0" rx="6.5" fill="url(#alG)" transform="rotate(7.66 627.4 155.3)"/>

<rect x="616.3" y="159.8" width="236.5" height="13.0" rx="6.5" fill="url(#th)" transform="rotate(6.82 622.8 166.3)"/>
<line x1="631.8" y1="168.1" x2="759.9" y2="181.8" stroke="#05607f" stroke-width="1.3" stroke-opacity="0.50" stroke-linecap="round"/><line x1="680.3" y1="170.5" x2="729.4" y2="176.4" stroke="#3ab8e2" stroke-width="2.2" stroke-opacity="0.35" stroke-linecap="round"/><line x1="674.0" y1="175.0" x2="718.4" y2="180.3" stroke="#3ab8e2" stroke-width="1.8" stroke-opacity="0.30" stroke-linecap="round"/>
<rect x="616.3" y="159.8" width="236.5" height="13.0" rx="6.5" fill="url(#alG)" transform="rotate(6.82 622.8 166.3)"/>

<rect x="613.5" y="171.3" width="236.5" height="13.0" rx="6.5" fill="url(#th)" transform="rotate(5.96 620.0 177.8)"/>
<line x1="629.0" y1="179.6" x2="757.2" y2="191.4" stroke="#05607f" stroke-width="1.3" stroke-opacity="0.50" stroke-linecap="round"/><line x1="639.3" y1="177.2" x2="717.2" y2="185.4" stroke="#3ab8e2" stroke-width="2.2" stroke-opacity="0.33" stroke-linecap="round"/><line x1="652.2" y1="183.8" x2="735.4" y2="192.5" stroke="#3ab8e2" stroke-width="2.1" stroke-opacity="0.29" stroke-linecap="round"/>
<rect x="613.5" y="171.3" width="236.5" height="13.0" rx="6.5" fill="url(#alG)" transform="rotate(5.96 620.0 177.8)"/>

<rect x="610.7" y="182.9" width="236.5" height="13.0" rx="6.5" fill="url(#th)" transform="rotate(5.11 617.2 189.4)"/>
<line x1="626.2" y1="191.0" x2="754.6" y2="200.9" stroke="#05607f" stroke-width="1.3" stroke-opacity="0.50" stroke-linecap="round"/><line x1="673.0" y1="191.8" x2="739.7" y2="197.7" stroke="#3ab8e2" stroke-width="2.6" stroke-opacity="0.24" stroke-linecap="round"/><line x1="653.9" y1="195.3" x2="728.7" y2="202.0" stroke="#3ab8e2" stroke-width="2.4" stroke-opacity="0.57" stroke-linecap="round"/>
<rect x="610.7" y="182.9" width="236.5" height="13.0" rx="6.5" fill="url(#alG)" transform="rotate(5.11 617.2 189.4)"/>

<rect x="607.8" y="194.5" width="236.5" height="13.0" rx="6.5" fill="url(#th)" transform="rotate(4.26 614.3 201.0)"/>
<line x1="623.4" y1="202.4" x2="751.9" y2="210.4" stroke="#05607f" stroke-width="1.3" stroke-opacity="0.50" stroke-linecap="round"/><line x1="627.3" y1="199.3" x2="676.5" y2="203.0" stroke="#3ab8e2" stroke-width="1.7" stroke-opacity="0.28" stroke-linecap="round"/><line x1="679.0" y1="208.4" x2="742.4" y2="213.1" stroke="#3ab8e2" stroke-width="2.5" stroke-opacity="0.35" stroke-linecap="round"/>
<rect x="607.8" y="194.5" width="236.5" height="13.0" rx="6.5" fill="url(#alG)" transform="rotate(4.26 614.3 201.0)"/>

<rect x="606.1" y="206.2" width="236.5" height="13.0" rx="6.5" fill="url(#th)" transform="rotate(3.31 612.6 212.7)"/>
<line x1="621.7" y1="214.0" x2="750.3" y2="219.9" stroke="#05607f" stroke-width="1.3" stroke-opacity="0.50" stroke-linecap="round"/><line x1="671.7" y1="213.5" x2="728.6" y2="216.8" stroke="#3ab8e2" stroke-width="1.9" stroke-opacity="0.51" stroke-linecap="round"/><line x1="675.8" y1="219.0" x2="715.9" y2="221.3" stroke="#3ab8e2" stroke-width="2.2" stroke-opacity="0.45" stroke-linecap="round"/>
<rect x="606.1" y="206.2" width="236.5" height="13.0" rx="6.5" fill="url(#alG)" transform="rotate(3.31 612.6 212.7)"/>

<rect x="604.9" y="218.0" width="236.5" height="13.0" rx="6.5" fill="url(#th)" transform="rotate(2.31 611.4 224.5)"/>
<line x1="620.4" y1="225.7" x2="749.2" y2="229.3" stroke="#05607f" stroke-width="1.3" stroke-opacity="0.50" stroke-linecap="round"/><line x1="634.2" y1="222.8" x2="687.2" y2="225.0" stroke="#3ab8e2" stroke-width="1.7" stroke-opacity="0.28" stroke-linecap="round"/><line x1="636.0" y1="228.1" x2="700.4" y2="230.7" stroke="#3ab8e2" stroke-width="2.3" stroke-opacity="0.28" stroke-linecap="round"/>
<rect x="604.9" y="218.0" width="236.5" height="13.0" rx="6.5" fill="url(#alG)" transform="rotate(2.31 611.4 224.5)"/>

<rect x="603.6" y="229.8" width="236.5" height="13.0" rx="6.5" fill="url(#th)" transform="rotate(1.32 610.1 236.3)"/>
<line x1="619.2" y1="237.4" x2="748.0" y2="238.7" stroke="#05607f" stroke-width="1.3" stroke-opacity="0.50" stroke-linecap="round"/><line x1="621.3" y1="234.0" x2="672.4" y2="235.2" stroke="#3ab8e2" stroke-width="2.3" stroke-opacity="0.27" stroke-linecap="round"/><line x1="638.1" y1="239.6" x2="683.0" y2="240.6" stroke="#3ab8e2" stroke-width="2.4" stroke-opacity="0.42" stroke-linecap="round"/>
<rect x="603.6" y="229.8" width="236.5" height="13.0" rx="6.5" fill="url(#alG)" transform="rotate(1.32 610.1 236.3)"/>

<rect x="602.4" y="241.7" width="236.5" height="13.0" rx="6.5" fill="url(#th)" transform="rotate(0.32 608.9 248.2)"/>
<line x1="618.0" y1="249.0" x2="746.8" y2="248.1" stroke="#05607f" stroke-width="1.3" stroke-opacity="0.50" stroke-linecap="round"/><line x1="623.0" y1="245.7" x2="662.9" y2="245.9" stroke="#3ab8e2" stroke-width="2.0" stroke-opacity="0.42" stroke-linecap="round"/><line x1="655.2" y1="251.0" x2="694.6" y2="251.3" stroke="#3ab8e2" stroke-width="1.8" stroke-opacity="0.48" stroke-linecap="round"/>
<rect x="602.4" y="241.7" width="236.5" height="13.0" rx="6.5" fill="url(#alG)" transform="rotate(0.32 608.9 248.2)"/>

<rect x="602.4" y="253.5" width="236.5" height="13.0" rx="6.5" fill="url(#th)" transform="rotate(-0.85 608.9 260.0)"/>
<line x1="618.0" y1="260.7" x2="746.8" y2="257.2" stroke="#05607f" stroke-width="1.3" stroke-opacity="0.50" stroke-linecap="round"/><line x1="642.3" y1="256.9" x2="691.2" y2="256.2" stroke="#3ab8e2" stroke-width="1.9" stroke-opacity="0.58" stroke-linecap="round"/><line x1="637.0" y1="262.2" x2="699.7" y2="261.3" stroke="#3ab8e2" stroke-width="2.0" stroke-opacity="0.37" stroke-linecap="round"/>
<rect x="602.4" y="253.5" width="236.5" height="13.0" rx="6.5" fill="url(#alG)" transform="rotate(-0.85 608.9 260.0)"/>

<rect x="603.1" y="265.3" width="236.5" height="13.0" rx="6.5" fill="url(#th)" transform="rotate(-2.11 609.6 271.8)"/>
<line x1="618.7" y1="272.3" x2="747.3" y2="266.0" stroke="#05607f" stroke-width="1.3" stroke-opacity="0.50" stroke-linecap="round"/><line x1="668.3" y1="267.1" x2="748.7" y2="264.1" stroke="#3ab8e2" stroke-width="2.0" stroke-opacity="0.28" stroke-linecap="round"/><line x1="660.9" y1="272.6" x2="705.8" y2="270.9" stroke="#3ab8e2" stroke-width="1.6" stroke-opacity="0.56" stroke-linecap="round"/>
<rect x="603.1" y="265.3" width="236.5" height="13.0" rx="6.5" fill="url(#alG)" transform="rotate(-2.11 609.6 271.8)"/>

<rect x="603.7" y="277.2" width="236.5" height="13.0" rx="6.5" fill="url(#th)" transform="rotate(-3.38 610.2 283.7)"/>
<line x1="619.3" y1="283.9" x2="747.8" y2="274.8" stroke="#05607f" stroke-width="1.3" stroke-opacity="0.50" stroke-linecap="round"/><line x1="644.2" y1="279.1" x2="719.3" y2="274.6" stroke="#3ab8e2" stroke-width="2.0" stroke-opacity="0.55" stroke-linecap="round"/><line x1="646.6" y1="284.1" x2="689.5" y2="281.6" stroke="#3ab8e2" stroke-width="1.6" stroke-opacity="0.42" stroke-linecap="round"/>
<rect x="603.7" y="277.2" width="236.5" height="13.0" rx="6.5" fill="url(#alG)" transform="rotate(-3.38 610.2 283.7)"/>

<rect x="605.3" y="288.8" width="236.5" height="13.0" rx="6.5" fill="url(#th)" transform="rotate(-5.21 611.8 295.3)"/>
<line x1="620.9" y1="295.3" x2="749.1" y2="282.0" stroke="#05607f" stroke-width="1.3" stroke-opacity="0.50" stroke-linecap="round"/><line x1="657.8" y1="288.5" x2="737.0" y2="281.3" stroke="#3ab8e2" stroke-width="1.7" stroke-opacity="0.45" stroke-linecap="round"/><line x1="643.2" y1="295.1" x2="702.6" y2="289.7" stroke="#3ab8e2" stroke-width="1.7" stroke-opacity="0.31" stroke-linecap="round"/>
<rect x="605.3" y="288.8" width="236.5" height="13.0" rx="6.5" fill="url(#alG)" transform="rotate(-5.21 611.8 295.3)"/>

<rect x="607.9" y="300.3" width="236.5" height="13.0" rx="6.5" fill="url(#th)" transform="rotate(-7.60 614.4 306.8)"/>
<line x1="623.5" y1="306.4" x2="751.0" y2="287.7" stroke="#05607f" stroke-width="1.3" stroke-opacity="0.50" stroke-linecap="round"/><line x1="653.4" y1="298.9" x2="733.0" y2="288.3" stroke="#3ab8e2" stroke-width="1.7" stroke-opacity="0.40" stroke-linecap="round"/><line x1="669.8" y1="302.0" x2="751.5" y2="291.1" stroke="#3ab8e2" stroke-width="1.8" stroke-opacity="0.25" stroke-linecap="round"/>
<rect x="607.9" y="300.3" width="236.5" height="13.0" rx="6.5" fill="url(#alG)" transform="rotate(-7.60 614.4 306.8)"/>

<rect x="610.5" y="311.7" width="236.5" height="13.0" rx="6.5" fill="url(#th)" transform="rotate(-9.99 617.0 318.2)"/>
<line x1="626.1" y1="317.4" x2="752.7" y2="293.5" stroke="#05607f" stroke-width="1.3" stroke-opacity="0.50" stroke-linecap="round"/><line x1="678.9" y1="304.7" x2="753.7" y2="291.5" stroke="#3ab8e2" stroke-width="2.1" stroke-opacity="0.22" stroke-linecap="round"/><line x1="678.9" y1="310.0" x2="732.0" y2="300.6" stroke="#3ab8e2" stroke-width="2.5" stroke-opacity="0.45" stroke-linecap="round"/>
<rect x="610.5" y="311.7" width="236.5" height="13.0" rx="6.5" fill="url(#alG)" transform="rotate(-9.99 617.0 318.2)"/>

<rect x="613.1" y="323.1" width="236.5" height="13.0" rx="6.5" fill="url(#th)" transform="rotate(-12.38 619.6 329.6)"/>
<line x1="628.6" y1="328.5" x2="754.1" y2="299.3" stroke="#05607f" stroke-width="1.3" stroke-opacity="0.50" stroke-linecap="round"/><line x1="674.4" y1="315.0" x2="716.2" y2="305.8" stroke="#3ab8e2" stroke-width="2.4" stroke-opacity="0.29" stroke-linecap="round"/><line x1="652.5" y1="325.1" x2="727.2" y2="308.7" stroke="#3ab8e2" stroke-width="2.4" stroke-opacity="0.27" stroke-linecap="round"/>
<rect x="613.1" y="323.1" width="236.5" height="13.0" rx="6.5" fill="url(#alG)" transform="rotate(-12.38 619.6 329.6)"/>

<rect x="616.4" y="334.3" width="236.5" height="13.0" rx="6.5" fill="url(#th)" transform="rotate(-14.99 622.9 340.8)"/>
<line x1="631.9" y1="339.2" x2="755.9" y2="304.3" stroke="#05607f" stroke-width="1.3" stroke-opacity="0.50" stroke-linecap="round"/><line x1="644.2" y1="332.4" x2="696.9" y2="318.3" stroke="#3ab8e2" stroke-width="2.1" stroke-opacity="0.35" stroke-linecap="round"/><line x1="640.4" y1="338.8" x2="685.9" y2="326.6" stroke="#3ab8e2" stroke-width="2.3" stroke-opacity="0.56" stroke-linecap="round"/>
<rect x="616.4" y="334.3" width="236.5" height="13.0" rx="6.5" fill="url(#alG)" transform="rotate(-14.99 622.9 340.8)"/>

<rect x="621.5" y="344.8" width="236.5" height="13.0" rx="6.5" fill="url(#th)" transform="rotate(-18.09 628.0 351.3)"/>
<line x1="636.9" y1="349.2" x2="758.8" y2="307.7" stroke="#05607f" stroke-width="1.3" stroke-opacity="0.50" stroke-linecap="round"/><line x1="639.4" y1="344.8" x2="698.8" y2="325.4" stroke="#3ab8e2" stroke-width="2.4" stroke-opacity="0.22" stroke-linecap="round"/><line x1="683.4" y1="335.9" x2="722.2" y2="323.3" stroke="#3ab8e2" stroke-width="2.2" stroke-opacity="0.42" stroke-linecap="round"/>
<rect x="621.5" y="344.8" width="236.5" height="13.0" rx="6.5" fill="url(#alG)" transform="rotate(-18.09 628.0 351.3)"/>

<rect x="626.5" y="355.3" width="236.5" height="13.0" rx="6.5" fill="url(#th)" transform="rotate(-21.18 633.0 361.8)"/>
<line x1="641.8" y1="359.2" x2="761.3" y2="311.2" stroke="#05607f" stroke-width="1.3" stroke-opacity="0.50" stroke-linecap="round"/><line x1="674.6" y1="342.9" x2="721.3" y2="324.8" stroke="#3ab8e2" stroke-width="2.0" stroke-opacity="0.43" stroke-linecap="round"/><line x1="666.0" y1="351.8" x2="728.7" y2="327.5" stroke="#3ab8e2" stroke-width="2.0" stroke-opacity="0.38" stroke-linecap="round"/>
<rect x="626.5" y="355.3" width="236.5" height="13.0" rx="6.5" fill="url(#alG)" transform="rotate(-21.18 633.0 361.8)"/>

<rect x="631.6" y="365.8" width="236.5" height="13.0" rx="6.5" fill="url(#th)" transform="rotate(-24.28 638.1 372.3)"/>
<line x1="646.7" y1="369.3" x2="763.4" y2="314.9" stroke="#05607f" stroke-width="1.3" stroke-opacity="0.50" stroke-linecap="round"/><line x1="647.8" y1="365.1" x2="707.3" y2="338.2" stroke="#3ab8e2" stroke-width="2.1" stroke-opacity="0.29" stroke-linecap="round"/><line x1="687.7" y1="352.8" x2="754.4" y2="322.7" stroke="#3ab8e2" stroke-width="2.1" stroke-opacity="0.27" stroke-linecap="round"/>
<rect x="631.6" y="365.8" width="236.5" height="13.0" rx="6.5" fill="url(#alG)" transform="rotate(-24.28 638.1 372.3)"/>

<rect x="637.2" y="375.9" width="236.5" height="13.0" rx="6.5" fill="url(#th)" transform="rotate(-27.48 643.7 382.4)"/>
<line x1="652.2" y1="378.9" x2="765.7" y2="318.1" stroke="#05607f" stroke-width="1.3" stroke-opacity="0.50" stroke-linecap="round"/><line x1="675.3" y1="363.1" x2="711.1" y2="344.5" stroke="#3ab8e2" stroke-width="1.7" stroke-opacity="0.37" stroke-linecap="round"/><line x1="658.8" y1="377.5" x2="709.1" y2="351.4" stroke="#3ab8e2" stroke-width="2.1" stroke-opacity="0.22" stroke-linecap="round"/>
<rect x="637.2" y="375.9" width="236.5" height="13.0" rx="6.5" fill="url(#alG)" transform="rotate(-27.48 643.7 382.4)"/>

<rect x="643.7" y="385.6" width="236.5" height="13.0" rx="6.5" fill="url(#th)" transform="rotate(-30.80 650.2 392.1)"/>
<line x1="658.4" y1="388.1" x2="768.2" y2="320.8" stroke="#05607f" stroke-width="1.3" stroke-opacity="0.50" stroke-linecap="round"/><line x1="688.5" y1="366.2" x2="722.0" y2="346.2" stroke="#3ab8e2" stroke-width="2.3" stroke-opacity="0.51" stroke-linecap="round"/><line x1="685.1" y1="374.3" x2="717.5" y2="355.0" stroke="#3ab8e2" stroke-width="2.1" stroke-opacity="0.35" stroke-linecap="round"/>
<rect x="643.7" y="385.6" width="236.5" height="13.0" rx="6.5" fill="url(#alG)" transform="rotate(-30.80 650.2 392.1)"/>

<rect x="650.1" y="395.3" width="236.5" height="13.0" rx="6.5" fill="url(#th)" transform="rotate(-34.13 656.6 401.8)"/>
<line x1="664.6" y1="397.3" x2="770.3" y2="323.7" stroke="#05607f" stroke-width="1.3" stroke-opacity="0.50" stroke-linecap="round"/><line x1="708.0" y1="363.8" x2="742.4" y2="340.4" stroke="#3ab8e2" stroke-width="2.5" stroke-opacity="0.60" stroke-linecap="round"/><line x1="700.7" y1="375.0" x2="762.8" y2="333.0" stroke="#3ab8e2" stroke-width="1.8" stroke-opacity="0.59" stroke-linecap="round"/>
<rect x="650.1" y="395.3" width="236.5" height="13.0" rx="6.5" fill="url(#alG)" transform="rotate(-34.13 656.6 401.8)"/>

<rect x="656.6" y="404.9" width="236.5" height="13.0" rx="6.5" fill="url(#th)" transform="rotate(-37.46 663.1 411.4)"/>
<line x1="670.8" y1="406.5" x2="772.1" y2="326.9" stroke="#05607f" stroke-width="1.3" stroke-opacity="0.50" stroke-linecap="round"/><line x1="691.7" y1="386.2" x2="756.7" y2="336.4" stroke="#3ab8e2" stroke-width="2.5" stroke-opacity="0.27" stroke-linecap="round"/><line x1="708.0" y1="380.3" x2="772.0" y2="331.2" stroke="#3ab8e2" stroke-width="1.7" stroke-opacity="0.34" stroke-linecap="round"/>
<rect x="656.6" y="404.9" width="236.5" height="13.0" rx="6.5" fill="url(#alG)" transform="rotate(-37.46 663.1 411.4)"/>

<rect x="663.0" y="414.6" width="236.5" height="13.0" rx="6.5" fill="url(#th)" transform="rotate(-40.79 669.5 421.1)"/>
<line x1="676.9" y1="415.8" x2="773.4" y2="330.4" stroke="#05607f" stroke-width="1.3" stroke-opacity="0.50" stroke-linecap="round"/><line x1="707.8" y1="384.6" x2="740.2" y2="356.7" stroke="#3ab8e2" stroke-width="2.5" stroke-opacity="0.31" stroke-linecap="round"/><line x1="713.7" y1="386.4" x2="745.6" y2="358.9" stroke="#3ab8e2" stroke-width="2.1" stroke-opacity="0.57" stroke-linecap="round"/>
<rect x="663.0" y="414.6" width="236.5" height="13.0" rx="6.5" fill="url(#alG)" transform="rotate(-40.79 669.5 421.1)"/>

<rect x="670.2" y="423.7" width="236.5" height="13.0" rx="6.5" fill="url(#th)" transform="rotate(-44.15 676.7 430.2)"/>
<line x1="683.8" y1="424.5" x2="775.1" y2="333.6" stroke="#05607f" stroke-width="1.3" stroke-opacity="0.50" stroke-linecap="round"/><line x1="690.8" y1="412.9" x2="725.1" y2="379.6" stroke="#3ab8e2" stroke-width="2.1" stroke-opacity="0.33" stroke-linecap="round"/><line x1="687.5" y1="423.3" x2="719.0" y2="392.7" stroke="#3ab8e2" stroke-width="1.8" stroke-opacity="0.57" stroke-linecap="round"/>
<rect x="670.2" y="423.7" width="236.5" height="13.0" rx="6.5" fill="url(#alG)" transform="rotate(-44.15 676.7 430.2)"/>

<rect x="677.8" y="432.5" width="236.5" height="13.0" rx="6.5" fill="url(#th)" transform="rotate(-47.54 684.3 439.0)"/>
<line x1="691.1" y1="432.8" x2="776.8" y2="336.7" stroke="#05607f" stroke-width="1.3" stroke-opacity="0.50" stroke-linecap="round"/><line x1="715.2" y1="401.4" x2="768.4" y2="343.2" stroke="#3ab8e2" stroke-width="1.8" stroke-opacity="0.51" stroke-linecap="round"/><line x1="697.7" y1="428.2" x2="738.9" y2="383.2" stroke="#3ab8e2" stroke-width="2.2" stroke-opacity="0.34" stroke-linecap="round"/>
<rect x="677.8" y="432.5" width="236.5" height="13.0" rx="6.5" fill="url(#alG)" transform="rotate(-47.54 684.3 439.0)"/>

<rect x="685.4" y="441.3" width="236.5" height="13.0" rx="6.5" fill="url(#th)" transform="rotate(-50.93 691.9 447.8)"/>
<line x1="698.3" y1="441.2" x2="778.2" y2="340.2" stroke="#05607f" stroke-width="1.3" stroke-opacity="0.50" stroke-linecap="round"/><line x1="727.3" y1="400.0" x2="766.5" y2="351.7" stroke="#3ab8e2" stroke-width="2.2" stroke-opacity="0.55" stroke-linecap="round"/><line x1="704.3" y1="436.7" x2="757.0" y2="371.8" stroke="#3ab8e2" stroke-width="2.2" stroke-opacity="0.36" stroke-linecap="round"/>
<rect x="685.4" y="441.3" width="236.5" height="13.0" rx="6.5" fill="url(#alG)" transform="rotate(-50.93 691.9 447.8)"/>

<rect x="693.2" y="449.8" width="236.5" height="13.0" rx="6.5" fill="url(#th)" transform="rotate(-54.34 699.7 456.3)"/>
<line x1="705.7" y1="449.4" x2="779.5" y2="343.8" stroke="#05607f" stroke-width="1.3" stroke-opacity="0.50" stroke-linecap="round"/><line x1="729.8" y1="410.0" x2="757.7" y2="371.0" stroke="#3ab8e2" stroke-width="2.6" stroke-opacity="0.43" stroke-linecap="round"/><line x1="719.7" y1="432.9" x2="762.0" y2="374.1" stroke="#3ab8e2" stroke-width="2.0" stroke-opacity="0.27" stroke-linecap="round"/>
<rect x="693.2" y="449.8" width="236.5" height="13.0" rx="6.5" fill="url(#alG)" transform="rotate(-54.34 699.7 456.3)"/>

<rect x="702.8" y="456.4" width="236.5" height="13.0" rx="6.5" fill="url(#th)" transform="rotate(-57.99 709.3 462.9)"/>
<line x1="714.8" y1="455.6" x2="781.7" y2="345.5" stroke="#05607f" stroke-width="1.3" stroke-opacity="0.50" stroke-linecap="round"/><line x1="734.7" y1="417.3" x2="754.5" y2="385.6" stroke="#3ab8e2" stroke-width="2.4" stroke-opacity="0.30" stroke-linecap="round"/><line x1="736.0" y1="425.0" x2="780.1" y2="354.5" stroke="#3ab8e2" stroke-width="2.2" stroke-opacity="0.47" stroke-linecap="round"/>
<rect x="702.8" y="456.4" width="236.5" height="13.0" rx="6.5" fill="url(#alG)" transform="rotate(-57.99 709.3 462.9)"/>

<rect x="712.3" y="463.0" width="236.5" height="13.0" rx="6.5" fill="url(#th)" transform="rotate(-61.64 718.8 469.5)"/>
<line x1="723.8" y1="461.8" x2="783.6" y2="347.7" stroke="#05607f" stroke-width="1.3" stroke-opacity="0.50" stroke-linecap="round"/><line x1="729.8" y1="443.6" x2="746.5" y2="412.7" stroke="#3ab8e2" stroke-width="1.6" stroke-opacity="0.26" stroke-linecap="round"/><line x1="742.5" y1="431.1" x2="769.2" y2="381.7" stroke="#3ab8e2" stroke-width="2.1" stroke-opacity="0.56" stroke-linecap="round"/>
<rect x="712.3" y="463.0" width="236.5" height="13.0" rx="6.5" fill="url(#alG)" transform="rotate(-61.64 718.8 469.5)"/>

<rect x="721.8" y="469.6" width="236.5" height="13.0" rx="6.5" fill="url(#th)" transform="rotate(-65.28 728.3 476.1)"/>
<line x1="732.9" y1="468.1" x2="785.3" y2="350.5" stroke="#05607f" stroke-width="1.3" stroke-opacity="0.50" stroke-linecap="round"/><line x1="733.5" y1="458.7" x2="752.8" y2="416.8" stroke="#3ab8e2" stroke-width="2.3" stroke-opacity="0.21" stroke-linecap="round"/><line x1="735.2" y1="467.5" x2="757.1" y2="419.9" stroke="#3ab8e2" stroke-width="1.7" stroke-opacity="0.34" stroke-linecap="round"/>
<rect x="721.8" y="469.6" width="236.5" height="13.0" rx="6.5" fill="url(#alG)" transform="rotate(-65.28 728.3 476.1)"/>

<rect x="731.8" y="475.5" width="236.5" height="13.0" rx="6.5" fill="url(#th)" transform="rotate(-68.65 738.3 482.0)"/>
<line x1="742.3" y1="473.8" x2="787.7" y2="353.2" stroke="#05607f" stroke-width="1.3" stroke-opacity="0.50" stroke-linecap="round"/><line x1="744.2" y1="459.5" x2="767.4" y2="400.3" stroke="#3ab8e2" stroke-width="2.2" stroke-opacity="0.28" stroke-linecap="round"/><line x1="757.2" y1="440.6" x2="778.4" y2="386.3" stroke="#3ab8e2" stroke-width="1.7" stroke-opacity="0.57" stroke-linecap="round"/>
<rect x="731.8" y="475.5" width="236.5" height="13.0" rx="6.5" fill="url(#alG)" transform="rotate(-68.65 738.3 482.0)"/>

<rect x="742.8" y="479.4" width="236.5" height="13.0" rx="6.5" fill="url(#th)" transform="rotate(-71.21 749.3 485.9)"/>
<line x1="753.0" y1="477.5" x2="793.0" y2="355.1" stroke="#05607f" stroke-width="1.3" stroke-opacity="0.50" stroke-linecap="round"/><line x1="754.6" y1="462.2" x2="768.2" y2="422.1" stroke="#3ab8e2" stroke-width="1.7" stroke-opacity="0.46" stroke-linecap="round"/><line x1="770.9" y1="430.6" x2="794.5" y2="361.2" stroke="#3ab8e2" stroke-width="2.0" stroke-opacity="0.31" stroke-linecap="round"/>
<rect x="742.8" y="479.4" width="236.5" height="13.0" rx="6.5" fill="url(#alG)" transform="rotate(-71.21 749.3 485.9)"/>

<rect x="753.8" y="483.3" width="236.5" height="13.0" rx="6.5" fill="url(#th)" transform="rotate(-73.76 760.3 489.8)"/>
<line x1="763.6" y1="481.3" x2="798.1" y2="357.2" stroke="#05607f" stroke-width="1.3" stroke-opacity="0.50" stroke-linecap="round"/><line x1="760.9" y1="478.4" x2="779.6" y2="414.4" stroke="#3ab8e2" stroke-width="2.2" stroke-opacity="0.34" stroke-linecap="round"/><line x1="775.9" y1="445.7" x2="791.7" y2="391.3" stroke="#3ab8e2" stroke-width="2.5" stroke-opacity="0.49" stroke-linecap="round"/>
<rect x="753.8" y="483.3" width="236.5" height="13.0" rx="6.5" fill="url(#alG)" transform="rotate(-73.76 760.3 489.8)"/>

<rect x="764.9" y="487.3" width="236.5" height="13.0" rx="6.5" fill="url(#th)" transform="rotate(-76.31 771.4 493.8)"/>
<line x1="774.3" y1="485.1" x2="803.2" y2="359.6" stroke="#05607f" stroke-width="1.3" stroke-opacity="0.50" stroke-linecap="round"/><line x1="774.6" y1="469.4" x2="793.4" y2="392.4" stroke="#3ab8e2" stroke-width="1.6" stroke-opacity="0.41" stroke-linecap="round"/><line x1="781.7" y1="462.1" x2="792.8" y2="416.8" stroke="#3ab8e2" stroke-width="1.7" stroke-opacity="0.51" stroke-linecap="round"/>
<rect x="764.9" y="487.3" width="236.5" height="13.0" rx="6.5" fill="url(#alG)" transform="rotate(-76.31 771.4 493.8)"/>

<rect x="775.9" y="491.2" width="236.5" height="13.0" rx="6.5" fill="url(#th)" transform="rotate(-78.87 782.4 497.7)"/>
<line x1="784.9" y1="488.9" x2="808.2" y2="362.2" stroke="#05607f" stroke-width="1.3" stroke-opacity="0.50" stroke-linecap="round"/><line x1="782.0" y1="486.2" x2="794.0" y2="425.4" stroke="#3ab8e2" stroke-width="2.5" stroke-opacity="0.26" stroke-linecap="round"/><line x1="789.1" y1="476.9" x2="801.6" y2="413.4" stroke="#3ab8e2" stroke-width="2.1" stroke-opacity="0.46" stroke-linecap="round"/>
<rect x="775.9" y="491.2" width="236.5" height="13.0" rx="6.5" fill="url(#alG)" transform="rotate(-78.87 782.4 497.7)"/>

<rect x="786.9" y="495.2" width="236.5" height="13.0" rx="6.5" fill="url(#th)" transform="rotate(-81.42 793.4 501.7)"/>
<line x1="795.6" y1="492.8" x2="813.2" y2="365.2" stroke="#05607f" stroke-width="1.3" stroke-opacity="0.50" stroke-linecap="round"/><line x1="799.2" y1="445.9" x2="805.7" y2="402.8" stroke="#3ab8e2" stroke-width="1.9" stroke-opacity="0.32" stroke-linecap="round"/><line x1="798.0" y1="489.0" x2="809.7" y2="411.3" stroke="#3ab8e2" stroke-width="2.4" stroke-opacity="0.49" stroke-linecap="round"/>
<rect x="786.9" y="495.2" width="236.5" height="13.0" rx="6.5" fill="url(#alG)" transform="rotate(-81.42 793.4 501.7)"/>

<rect x="798.4" y="497.5" width="236.5" height="13.0" rx="6.5" fill="url(#th)" transform="rotate(-83.46 804.9 504.0)"/>
<line x1="806.7" y1="495.0" x2="819.8" y2="366.9" stroke="#05607f" stroke-width="1.3" stroke-opacity="0.50" stroke-linecap="round"/><line x1="803.6" y1="492.9" x2="812.3" y2="417.0" stroke="#3ab8e2" stroke-width="2.3" stroke-opacity="0.39" stroke-linecap="round"/><line x1="813.4" y1="452.6" x2="819.9" y2="395.8" stroke="#3ab8e2" stroke-width="1.8" stroke-opacity="0.24" stroke-linecap="round"/>
<rect x="798.4" y="497.5" width="236.5" height="13.0" rx="6.5" fill="url(#alG)" transform="rotate(-83.46 804.9 504.0)"/>

<rect x="810.0" y="499.4" width="236.5" height="13.0" rx="6.5" fill="url(#th)" transform="rotate(-85.34 816.5 505.9)"/>
<line x1="818.1" y1="496.9" x2="827.0" y2="368.3" stroke="#05607f" stroke-width="1.3" stroke-opacity="0.50" stroke-linecap="round"/><line x1="815.9" y1="482.2" x2="818.9" y2="445.4" stroke="#3ab8e2" stroke-width="1.9" stroke-opacity="0.50" stroke-linecap="round"/><line x1="823.2" y1="456.8" x2="829.4" y2="380.6" stroke="#3ab8e2" stroke-width="2.3" stroke-opacity="0.31" stroke-linecap="round"/>
<rect x="810.0" y="499.4" width="236.5" height="13.0" rx="6.5" fill="url(#alG)" transform="rotate(-85.34 816.5 505.9)"/>

<rect x="821.7" y="501.2" width="236.5" height="13.0" rx="6.5" fill="url(#th)" transform="rotate(-87.22 828.2 507.7)"/>
<line x1="829.4" y1="498.7" x2="834.1" y2="369.9" stroke="#05607f" stroke-width="1.3" stroke-opacity="0.50" stroke-linecap="round"/><line x1="827.6" y1="466.1" x2="830.3" y2="409.8" stroke="#3ab8e2" stroke-width="2.4" stroke-opacity="0.41" stroke-linecap="round"/><line x1="832.0" y1="482.5" x2="835.2" y2="416.1" stroke="#3ab8e2" stroke-width="2.6" stroke-opacity="0.29" stroke-linecap="round"/>
<rect x="821.7" y="501.2" width="236.5" height="13.0" rx="6.5" fill="url(#alG)" transform="rotate(-87.22 828.2 507.7)"/>

<rect x="833.3" y="503.1" width="236.5" height="13.0" rx="6.5" fill="url(#th)" transform="rotate(-89.10 839.8 509.6)"/>
<line x1="840.8" y1="500.5" x2="841.2" y2="371.7" stroke="#05607f" stroke-width="1.3" stroke-opacity="0.50" stroke-linecap="round"/><line x1="838.2" y1="449.8" x2="838.7" y2="414.0" stroke="#3ab8e2" stroke-width="1.9" stroke-opacity="0.29" stroke-linecap="round"/><line x1="843.2" y1="457.5" x2="844.5" y2="376.2" stroke="#3ab8e2" stroke-width="2.3" stroke-opacity="0.33" stroke-linecap="round"/>
<rect x="833.3" y="503.1" width="236.5" height="13.0" rx="6.5" fill="url(#alG)" transform="rotate(-89.10 839.8 509.6)"/>

<rect x="845.0" y="505.0" width="236.5" height="13.0" rx="6.5" fill="url(#th)" transform="rotate(-90.98 851.5 511.5)"/>
<line x1="852.1" y1="502.4" x2="848.3" y2="373.6" stroke="#05607f" stroke-width="1.3" stroke-opacity="0.50" stroke-linecap="round"/><line x1="847.8" y1="451.7" x2="847.0" y2="400.7" stroke="#3ab8e2" stroke-width="1.8" stroke-opacity="0.56" stroke-linecap="round"/><line x1="853.3" y1="465.6" x2="852.1" y2="396.7" stroke="#3ab8e2" stroke-width="2.3" stroke-opacity="0.59" stroke-linecap="round"/>
<rect x="845.0" y="505.0" width="236.5" height="13.0" rx="6.5" fill="url(#alG)" transform="rotate(-90.98 851.5 511.5)"/>

<rect x="856.7" y="505.5" width="236.5" height="13.0" rx="6.5" fill="url(#th)" transform="rotate(-92.77 863.2 512.0)"/>
<line x1="863.5" y1="502.9" x2="855.7" y2="374.3" stroke="#05607f" stroke-width="1.3" stroke-opacity="0.50" stroke-linecap="round"/><line x1="858.8" y1="475.4" x2="855.1" y2="399.3" stroke="#3ab8e2" stroke-width="2.3" stroke-opacity="0.54" stroke-linecap="round"/><line x1="864.1" y1="477.0" x2="860.7" y2="406.5" stroke="#3ab8e2" stroke-width="2.2" stroke-opacity="0.32" stroke-linecap="round"/>
<rect x="856.7" y="505.5" width="236.5" height="13.0" rx="6.5" fill="url(#alG)" transform="rotate(-92.77 863.2 512.0)"/>

<rect x="868.4" y="504.5" width="236.5" height="13.0" rx="6.5" fill="url(#th)" transform="rotate(-94.45 874.9 511.0)"/>
<line x1="875.0" y1="501.9" x2="863.4" y2="373.6" stroke="#05607f" stroke-width="1.3" stroke-opacity="0.50" stroke-linecap="round"/><line x1="870.6" y1="488.9" x2="865.5" y2="423.6" stroke="#3ab8e2" stroke-width="1.7" stroke-opacity="0.56" stroke-linecap="round"/><line x1="876.1" y1="492.2" x2="873.3" y2="456.0" stroke="#3ab8e2" stroke-width="1.7" stroke-opacity="0.57" stroke-linecap="round"/>
<rect x="868.4" y="504.5" width="236.5" height="13.0" rx="6.5" fill="url(#alG)" transform="rotate(-94.45 874.9 511.0)"/>

<rect x="880.2" y="503.5" width="236.5" height="13.0" rx="6.5" fill="url(#th)" transform="rotate(-96.12 886.7 510.0)"/>
<line x1="886.5" y1="500.8" x2="871.2" y2="372.9" stroke="#05607f" stroke-width="1.3" stroke-opacity="0.50" stroke-linecap="round"/><line x1="880.9" y1="480.6" x2="876.4" y2="438.9" stroke="#3ab8e2" stroke-width="1.6" stroke-opacity="0.22" stroke-linecap="round"/><line x1="884.0" y1="460.7" x2="877.0" y2="395.0" stroke="#3ab8e2" stroke-width="2.3" stroke-opacity="0.49" stroke-linecap="round"/>
<rect x="880.2" y="503.5" width="236.5" height="13.0" rx="6.5" fill="url(#alG)" transform="rotate(-96.12 886.7 510.0)"/>

<rect x="892.0" y="502.4" width="236.5" height="13.0" rx="6.5" fill="url(#th)" transform="rotate(-97.80 898.5 508.9)"/>
<line x1="898.0" y1="499.8" x2="878.9" y2="372.4" stroke="#05607f" stroke-width="1.3" stroke-opacity="0.50" stroke-linecap="round"/><line x1="894.0" y1="495.2" x2="885.3" y2="431.9" stroke="#3ab8e2" stroke-width="2.0" stroke-opacity="0.53" stroke-linecap="round"/><line x1="893.4" y1="452.7" x2="882.7" y2="374.8" stroke="#3ab8e2" stroke-width="1.7" stroke-opacity="0.55" stroke-linecap="round"/>
<rect x="892.0" y="502.4" width="236.5" height="13.0" rx="6.5" fill="url(#alG)" transform="rotate(-97.80 898.5 508.9)"/>

<rect x="903.7" y="501.4" width="236.5" height="13.0" rx="6.5" fill="url(#th)" transform="rotate(-99.48 910.2 507.9)"/>
<line x1="909.5" y1="498.8" x2="886.7" y2="372.0" stroke="#05607f" stroke-width="1.3" stroke-opacity="0.50" stroke-linecap="round"/><line x1="897.5" y1="447.5" x2="884.7" y2="370.9" stroke="#3ab8e2" stroke-width="1.7" stroke-opacity="0.28" stroke-linecap="round"/><line x1="910.0" y1="490.9" x2="904.0" y2="454.8" stroke="#3ab8e2" stroke-width="2.4" stroke-opacity="0.52" stroke-linecap="round"/>
<rect x="903.7" y="501.4" width="236.5" height="13.0" rx="6.5" fill="url(#alG)" transform="rotate(-99.48 910.2 507.9)"/>

</g>
<rect x="40" y="510.5" width="867" height="1.8" fill="#2f38cc"/>
<path d="M261 123.5 L271 133.5 M271 123.5 L261 133.5" stroke="#0a1a2a" stroke-width="1.7" fill="none"/>
<path d="M259.5 98.5 L263.5 96.5 L263 93.8 L266.5 96 L271.5 94.6 L269.5 98 L267.3 100.5 L268 106.5 L266.5 108 L265 106.5 L265.3 100.5 Z" fill="#eef3f5" opacity="0.9" filter="url(#bl)"/>
<circle cx="62" cy="434.5" r="8.6" fill="none" stroke="#0b3d1c" stroke-width="4"/><circle cx="62" cy="434.5" r="8.6" fill="none" stroke="#2be02b" stroke-width="2.2"/><circle cx="62" cy="434.5" r="1.3" fill="#04222e"/>
</svg>
<div style="left:40px;top:90.5px;width:896px;height:2.5px;background:linear-gradient(#e0e0e0,#a8a8a8 60%,#9c9c9c);"></div>
<div style="left:935px;top:63px;width:345px;height:633px;background:#f3f3f3;"></div>
<div style="left:935px;top:92px;width:1px;height:571px;background:#8c8c8c;"></div>
<div style="left:936px;top:92px;width:332px;height:571px;background:#dadcdb;"></div>
<div style="left:1268px;top:92px;width:12px;height:571px;background:#ececec;"></div>
<div style="left:1268px;top:92px;width:1px;height:571px;background:#f8f8f8;"></div>
<div style="left:936px;top:662px;width:333px;height:1.5px;background:#fbfbfb;"></div>
<div style="left:1232px;top:62px;width:48px;height:29.5px;background:#f6f6f6;border-top:1px solid #e0e0e0;border-bottom:1px solid #dcdcdc;"></div>
<div style="left:1232px;top:91px;width:48px;height:20px;background:#f1f1f1;"></div>
<div style="left:1233px;top:96px;width:33px;height:5px;border:1px solid #d0d0d0;background:#ececec;"></div>
<svg style="left:1269px;top:95.5px" width="6" height="6" viewBox="0 0 6 6"><path d="M0.5 0.5L5.5 5.5M5.5 0.5L0.5 5.5" stroke="#111" stroke-width="1.500"/></svg>
<div style="left:1232px;top:110px;width:37px;height:21px;background:#f2f2f2;border:1px solid #e2e2e2;"></div>
<div style="left:1232px;top:130px;width:37px;height:1.5px;background:#b8b8b8;"></div>
<div style="left:1260px;top:560px;width:26px;height:42px;background:linear-gradient(#2a2a2a,#0a0a0a 45%,#050505 55%,#262626);border-radius:5px;"></div>
<div style="left:935px;top:664px;width:345px;height:31px;background:#fcfcfc;"></div>
<div style="left:935px;top:664px;width:62px;height:21px;background:#fff;border:1px solid #e2e2e2;border-top:none;"></div>
<div style="left:997px;top:666px;width:61px;height:18px;background:#eeeeee;border:1px solid #d2d2d2;"></div>
<div style="left:1060px;top:666px;width:75px;height:18px;background:#eeeeee;border:1px solid #d2d2d2;"></div>
<span class="t" style="left:937px;top:663.5px;font-size:16px;color:#c81838;transform:scaleX(0.879);transform-origin:0 50%;font-weight:bold;">m</span>
<span class="t" style="left:954px;top:665px;font-size:11px;color:#222;">Project</span>
<svg style="left:998px;top:668px" width="13" height="13" viewBox="0 0 13 13"><path d="M1 2h11M1 5h11M1 8h11M1 11h11" stroke="#d01838" stroke-width="1.600"/><path d="M3 1l7 11M10 1L3 12" stroke="#f0a0b0" stroke-width="1"/></svg>
<span class="t" style="left:1015px;top:664.5px;font-size:11px;color:#222;transform:scaleX(0.964);transform-origin:0 50%;">Stitches</span>
<svg style="left:1062px;top:667px" width="14" height="14" viewBox="0 0 14 14"><path d="M5 1v10M0.500 6h9M2 3l6 6M8 3l-6 6" stroke="#111" stroke-width="1.100"/><path d="M10 6V1.500l3 4.500V1.500" stroke="#111" stroke-width="1" fill="none"/></svg>
<span class="t" style="left:1080px;top:664.5px;font-size:11px;color:#222;">Navigator</span>
<div style="left:736.5px;top:57.5px;width:495.5px;height:432.5px;background:#f1f2f2;box-shadow:0 0 5px rgba(0,0,0,0.20);border:1px solid #e2e3e3;"></div>
<div style="left:743px;top:58.5px;width:481.5px;height:424px;background:#e9ebea;"></div>
<div style="left:743px;top:88px;width:481.5px;height:6.5px;background:linear-gradient(#eeefef,#f3f4f4);"></div>
<span class="t" style="left:926px;top:63px;font-size:15.5px;color:#4a4a4a;transform:scaleX(0.973);transform-origin:0 50%;">Object Properties</span>
<span class="t" style="left:1162.5px;top:59.5px;font-size:17.5px;color:#222;transform:scaleX(0.889);transform-origin:0 50%;font-weight:bold;">?</span>
<div style="left:1181px;top:58px;width:46px;height:20px;background:#c3c3c3;"></div>
<svg style="left:1199px;top:63.500px" width="10" height="10" viewBox="0 0 10 10"><path d="M1 1L9 9M9 1L1 9" stroke="#fff" stroke-width="1.800"/></svg>
<div style="left:744px;top:66.5px;width:16px;height:12.5px;background:#eef4ee;border:1px solid #cfd8d4;"></div>
<div style="left:746px;top:68.5px;width:6px;height:8.5px;background:#4f9a7a;"></div>
<div style="left:749px;top:95px;width:156px;height:354px;background:#fff;border:1px solid #acacac;border-top:2px solid #c2c3c4;"></div>
<div style="left:749px;top:96px;width:96px;height:18px;background:#efefef;border:1px solid #c4c4c4;"></div>
<span class="t" style="left:752.5px;top:97.5px;font-size:12.5px;color:#222;transform:scaleX(0.956);transform-origin:0 50%;">Lettering</span>
<svg style="left:831.0px;top:103.5px" width="10.0" height="7.0" viewBox="0 0 10 7"><path d="M1.200 1.200L5 5.200L8.800 1.200" fill="none" stroke="#333" stroke-width="1.5"/></svg>
<div style="left:846px;top:97px;width:59px;height:17px;background:#f3f3f3;border-bottom:1px solid #c8c8c8;"></div>
<div style="left:846.5px;top:98px;width:1px;height:14px;background:#d0d0d0;"></div>
<svg style="left:852.5px;top:97.5px" width="13" height="13" viewBox="0 0 13 13"><defs><linearGradient id="mg" x1="0" y1="0" x2="0" y2="1"><stop offset="0" stop-color="#f8a8e8"/><stop offset="0.45" stop-color="#d818c8"/><stop offset="1" stop-color="#60085a"/></linearGradient></defs><rect x="0.500" y="0.500" width="11" height="11.500" fill="#1a0a14"/><rect x="2" y="2.500" width="8" height="8" fill="url(#mg)"/></svg>
<svg style="left:871px;top:97.5px" width="13" height="13" viewBox="0 0 13 13"><rect x="1" y="1" width="6" height="8" fill="#e4e4ee" stroke="#555" stroke-width="1.100"/><path d="M4.500 4.500h5l3 3v5h-8z" fill="#c828c8" stroke="#5a28a8" stroke-width="1"/><path d="M7 2l4 3" stroke="#4a3ab0" stroke-width="1.600"/></svg>
<svg style="left:889px;top:97.5px" width="13" height="13" viewBox="0 0 13 13"><rect x="1" y="2" width="10" height="10" rx="1" fill="#1f6a28" stroke="#0c3a12"/><rect x="3.500" y="0.500" width="5" height="3" fill="#3a5a20"/><rect x="2.500" y="4" width="3.500" height="6.500" fill="#7aa070"/><path d="M6.500 6h6v6.500h-6z" fill="#38e048" stroke="#1a8a28" stroke-width="0.800"/></svg>
<div style="left:759px;top:124px;width:1px;height:264px;background:#c8c8c8;"></div>
<div style="left:775px;top:131px;width:1px;height:81px;background:#c8c8c8;"></div>
<div style="left:775px;top:237px;width:1px;height:63px;background:#c8c8c8;"></div>
<div style="left:759px;top:124.5px;width:10px;height:1px;background:#c8c8c8;"></div>
<div style="left:755px;top:120.5px;width:9px;height:9px;background:#fff;border:1px solid #b4b4b4;"></div>
<div style="left:757px;top:124.5px;width:5px;height:1px;background:#555;"></div>
<svg style="left:768px;top:118.5px" width="12" height="12" viewBox="0 0 12 12"><circle cx="6" cy="6" r="3.500" fill="#747474"/><path d="M6 0.500v2.500M6 9v2.500M0.500 6h2.500M9 6h2.500M2.100 2.100l1.800 1.800M8.100 8.100l1.800 1.800M2.100 9.900l1.800-1.800M8.100 3.900l1.800-1.800" stroke="#747474" stroke-width="1.900"/><circle cx="6" cy="6" r="1.500" fill="#ececec"/></svg>
<span class="t" style="left:785px;top:114.5px;font-size:12.5px;color:#2a2a2a;transform:scaleX(0.903);transform-origin:0 50%;">Letters</span>
<div style="left:775px;top:142px;width:9px;height:1px;background:#c8c8c8;"></div>
<svg style="left:784px;top:136px" width="12" height="12" viewBox="0 0 12 12"><circle cx="6" cy="6" r="3.500" fill="#747474"/><path d="M6 0.500v2.500M6 9v2.500M0.500 6h2.500M9 6h2.500M2.100 2.100l1.800 1.800M8.100 8.100l1.800 1.800M2.100 9.900l1.800-1.800M8.100 3.900l1.800-1.800" stroke="#747474" stroke-width="1.900"/><circle cx="6" cy="6" r="1.500" fill="#ececec"/></svg>
<span class="t" style="left:800px;top:132px;font-size:12.5px;color:#2a2a2a;transform:scaleX(0.930);transform-origin:0 50%;">Spacing</span>
<div style="left:775px;top:159.5px;width:9px;height:1px;background:#c8c8c8;"></div>
<svg style="left:784px;top:153.5px" width="12" height="12" viewBox="0 0 12 12"><circle cx="6" cy="6" r="3.500" fill="#747474"/><path d="M6 0.500v2.500M6 9v2.500M0.500 6h2.500M9 6h2.500M2.100 2.100l1.800 1.800M8.100 8.100l1.800 1.800M2.100 9.900l1.800-1.800M8.100 3.900l1.800-1.800" stroke="#747474" stroke-width="1.900"/><circle cx="6" cy="6" r="1.500" fill="#ececec"/></svg>
<span class="t" style="left:800px;top:149.5px;font-size:12.5px;color:#2a2a2a;transform:scaleX(0.960);transform-origin:0 50%;">Auto Borders</span>
<div style="left:775px;top:177px;width:9px;height:1px;background:#c8c8c8;"></div>
<svg style="left:784px;top:171px" width="12" height="12" viewBox="0 0 12 12"><circle cx="6" cy="6" r="3.500" fill="#747474"/><path d="M6 0.500v2.500M6 9v2.500M0.500 6h2.500M9 6h2.500M2.100 2.100l1.800 1.800M8.100 8.100l1.800 1.800M2.100 9.900l1.800-1.800M8.100 3.900l1.800-1.800" stroke="#747474" stroke-width="1.900"/><circle cx="6" cy="6" r="1.500" fill="#ececec"/></svg>
<span class="t" style="left:800px;top:167px;font-size:12.5px;color:#2a2a2a;transform:scaleX(0.988);transform-origin:0 50%;">Monogram</span>
<div style="left:775px;top:194.5px;width:9px;height:1px;background:#c8c8c8;"></div>
<svg style="left:784px;top:188.5px" width="12" height="12" viewBox="0 0 12 12"><circle cx="6" cy="6" r="3.500" fill="#747474"/><path d="M6 0.500v2.500M6 9v2.500M0.500 6h2.500M9 6h2.500M2.100 2.100l1.800 1.800M8.100 8.100l1.800 1.800M2.100 9.900l1.800-1.800M8.100 3.900l1.800-1.800" stroke="#747474" stroke-width="1.900"/><circle cx="6" cy="6" r="1.500" fill="#ececec"/></svg>
<span class="t" style="left:800px;top:184.5px;font-size:12.5px;color:#2a2a2a;transform:scaleX(0.896);transform-origin:0 50%;">Styles</span>
<div style="left:775px;top:212px;width:9px;height:1px;background:#c8c8c8;"></div>
<svg style="left:784px;top:206px" width="12" height="12" viewBox="0 0 12 12"><circle cx="6" cy="6" r="3.500" fill="#747474"/><path d="M6 0.500v2.500M6 9v2.500M0.500 6h2.500M9 6h2.500M2.100 2.100l1.800 1.800M8.100 8.100l1.800 1.800M2.100 9.900l1.800-1.800M8.100 3.900l1.800-1.800" stroke="#747474" stroke-width="1.900"/><circle cx="6" cy="6" r="1.500" fill="#ececec"/></svg>
<span class="t" style="left:800px;top:202px;font-size:12.5px;color:#2a2a2a;transform:scaleX(0.938);transform-origin:0 50%;">Group Names</span>
<div style="left:759px;top:230px;width:10px;height:1px;background:#c8c8c8;"></div>
<div style="left:755px;top:226px;width:9px;height:9px;background:#fff;border:1px solid #b4b4b4;"></div>
<div style="left:757px;top:230px;width:5px;height:1px;background:#555;"></div>
<svg style="left:768px;top:224px" width="12" height="12" viewBox="0 0 12 12"><circle cx="6" cy="6" r="3.500" fill="#747474"/><path d="M6 0.500v2.500M6 9v2.500M0.500 6h2.500M9 6h2.500M2.100 2.100l1.800 1.800M8.100 8.100l1.800 1.800M2.100 9.900l1.800-1.800M8.100 3.900l1.800-1.800" stroke="#747474" stroke-width="1.900"/><circle cx="6" cy="6" r="1.500" fill="#ececec"/></svg>
<span class="t" style="left:785px;top:220px;font-size:12.5px;color:#2a2a2a;transform:scaleX(0.971);transform-origin:0 50%;">Top Stitching</span>
<div style="left:775px;top:247.5px;width:9px;height:1px;background:#c8c8c8;"></div>
<svg style="left:784px;top:241.5px" width="12" height="12" viewBox="0 0 12 12"><circle cx="6" cy="6" r="3.500" fill="#747474"/><path d="M6 0.500v2.500M6 9v2.500M0.500 6h2.500M9 6h2.500M2.100 2.100l1.800 1.800M8.100 8.100l1.800 1.800M2.100 9.900l1.800-1.800M8.100 3.900l1.800-1.800" stroke="#747474" stroke-width="1.900"/><circle cx="6" cy="6" r="1.500" fill="#ececec"/></svg>
<span class="t" style="left:800px;top:237.5px;font-size:12.5px;color:#2a2a2a;transform:scaleX(0.940);transform-origin:0 50%;">Underlay</span>
<div style="left:775px;top:265px;width:9px;height:1px;background:#c8c8c8;"></div>
<svg style="left:784px;top:259px" width="12" height="12" viewBox="0 0 12 12"><circle cx="6" cy="6" r="3.500" fill="#747474"/><path d="M6 0.500v2.500M6 9v2.500M0.500 6h2.500M9 6h2.500M2.100 2.100l1.800 1.800M8.100 8.100l1.800 1.800M2.100 9.900l1.800-1.800M8.100 3.900l1.800-1.800" stroke="#747474" stroke-width="1.900"/><circle cx="6" cy="6" r="1.500" fill="#ececec"/></svg>
<span class="t" style="left:800px;top:255px;font-size:12.5px;color:#2a2a2a;transform:scaleX(0.928);transform-origin:0 50%;">Pull Comp</span>
<div style="left:775px;top:282.5px;width:9px;height:1px;background:#c8c8c8;"></div>
<svg style="left:784px;top:276.5px" width="12" height="12" viewBox="0 0 12 12"><circle cx="6" cy="6" r="3.500" fill="#747474"/><path d="M6 0.500v2.500M6 9v2.500M0.500 6h2.500M9 6h2.500M2.100 2.100l1.800 1.800M8.100 8.100l1.800 1.800M2.100 9.900l1.800-1.800M8.100 3.900l1.800-1.800" stroke="#747474" stroke-width="1.900"/><circle cx="6" cy="6" r="1.500" fill="#ececec"/></svg>
<span class="t" style="left:800px;top:272.5px;font-size:12.5px;color:#2a2a2a;transform:scaleX(0.922);transform-origin:0 50%;">Effects</span>
<div style="left:775px;top:300px;width:9px;height:1px;background:#c8c8c8;"></div>
<svg style="left:784px;top:294px" width="12" height="12" viewBox="0 0 12 12"><circle cx="6" cy="6" r="3.500" fill="#747474"/><path d="M6 0.500v2.500M6 9v2.500M0.500 6h2.500M9 6h2.500M2.100 2.100l1.800 1.800M8.100 8.100l1.800 1.800M2.100 9.900l1.800-1.800M8.100 3.900l1.800-1.800" stroke="#747474" stroke-width="1.900"/><circle cx="6" cy="6" r="1.500" fill="#ececec"/></svg>
<span class="t" style="left:800px;top:290px;font-size:12.5px;color:#2a2a2a;transform:scaleX(0.944);transform-origin:0 50%;">Advanced</span>
<div style="left:759px;top:318px;width:10px;height:1px;background:#c8c8c8;"></div>
<svg style="left:768px;top:312px" width="12" height="12" viewBox="0 0 12 12"><circle cx="6" cy="6" r="3.500" fill="#747474"/><path d="M6 0.500v2.500M6 9v2.500M0.500 6h2.500M9 6h2.500M2.100 2.100l1.800 1.800M8.100 8.100l1.800 1.800M2.100 9.900l1.800-1.800M8.100 3.900l1.800-1.800" stroke="#747474" stroke-width="1.900"/><circle cx="6" cy="6" r="1.500" fill="#ececec"/></svg>
<div style="left:783px;top:309.5px;width:97px;height:17px;background:#3a96f4;"></div>
<span class="t" style="left:785px;top:308px;font-size:12.5px;color:#e4f0ff;transform:scaleX(0.960);transform-origin:0 50%;">Tie In And Tie Off</span>
<div style="left:759px;top:335.5px;width:10px;height:1px;background:#c8c8c8;"></div>
<svg style="left:768px;top:329.5px" width="12" height="12" viewBox="0 0 12 12"><circle cx="6" cy="6" r="3.500" fill="#747474"/><path d="M6 0.500v2.500M6 9v2.500M0.500 6h2.500M9 6h2.500M2.100 2.100l1.800 1.800M8.100 8.100l1.800 1.800M2.100 9.900l1.800-1.800M8.100 3.900l1.800-1.800" stroke="#747474" stroke-width="1.900"/><circle cx="6" cy="6" r="1.500" fill="#ececec"/></svg>
<span class="t" style="left:785px;top:325.5px;font-size:12.5px;color:#2a2a2a;transform:scaleX(0.886);transform-origin:0 50%;">Scale</span>
<div style="left:759px;top:353px;width:10px;height:1px;background:#c8c8c8;"></div>
<svg style="left:768px;top:347px" width="12" height="12" viewBox="0 0 12 12"><circle cx="6" cy="6" r="3.500" fill="#747474"/><path d="M6 0.500v2.500M6 9v2.500M0.500 6h2.500M9 6h2.500M2.100 2.100l1.800 1.800M8.100 8.100l1.800 1.800M2.100 9.900l1.800-1.800M8.100 3.900l1.800-1.800" stroke="#747474" stroke-width="1.900"/><circle cx="6" cy="6" r="1.500" fill="#ececec"/></svg>
<span class="t" style="left:785px;top:343px;font-size:12.5px;color:#2a2a2a;transform:scaleX(0.930);transform-origin:0 50%;">Colors</span>
<div style="left:759px;top:370.5px;width:10px;height:1px;background:#c8c8c8;"></div>
<svg style="left:768px;top:364.5px" width="12" height="12" viewBox="0 0 12 12"><circle cx="6" cy="6" r="3.500" fill="#747474"/><path d="M6 0.500v2.500M6 9v2.500M0.500 6h2.500M9 6h2.500M2.100 2.100l1.800 1.800M8.100 8.100l1.800 1.800M2.100 9.900l1.800-1.800M8.100 3.900l1.800-1.800" stroke="#747474" stroke-width="1.900"/><circle cx="6" cy="6" r="1.500" fill="#ececec"/></svg>
<span class="t" style="left:785px;top:360.5px;font-size:12.5px;color:#2a2a2a;transform:scaleX(0.953);transform-origin:0 50%;">View</span>
<div style="left:759px;top:388px;width:10px;height:1px;background:#c8c8c8;"></div>
<svg style="left:768px;top:382px" width="12" height="12" viewBox="0 0 12 12"><circle cx="6" cy="6" r="3.500" fill="#747474"/><path d="M6 0.500v2.500M6 9v2.500M0.500 6h2.500M9 6h2.500M2.100 2.100l1.800 1.800M8.100 8.100l1.800 1.800M2.100 9.900l1.800-1.800M8.100 3.900l1.800-1.800" stroke="#747474" stroke-width="1.900"/><circle cx="6" cy="6" r="1.500" fill="#ececec"/></svg>
<span class="t" style="left:785px;top:378px;font-size:12.5px;color:#2a2a2a;transform:scaleX(0.881);transform-origin:0 50%;">Styles</span>
<svg style="left:850px;top:364px" width="11" height="17" viewBox="0 0 11 17"><path d="M1 1v12l2.800-2.600 2 4.600 1.800-0.800-2-4.400h3.800z" fill="#fff" stroke="#222" stroke-width="1"/></svg>
<div style="left:909px;top:95px;width:311px;height:354px;background:#fff;border:1px solid #d4d4d4;border-top:2px solid #c8cacb;"></div>
<div style="left:910px;top:97px;width:309px;height:17px;background:linear-gradient(90deg,#c6cad1,#d9dce2 40%,#f1f2f5 75%,#fcfcfd);"></div>
<svg style="left:913px;top:99.5px" width="12" height="12" viewBox="0 0 12 12"><circle cx="6" cy="6" r="3.500" fill="#747474"/><path d="M6 0.500v2.500M6 9v2.500M0.500 6h2.500M9 6h2.500M2.100 2.100l1.800 1.800M8.100 8.100l1.800 1.800M2.100 9.900l1.800-1.800M8.100 3.900l1.800-1.800" stroke="#747474" stroke-width="1.900"/><circle cx="6" cy="6" r="1.500" fill="#ececec"/></svg>
<span class="t" style="left:929px;top:95.5px;font-size:14px;color:#1a1a1a;transform:scaleX(1.010);transform-origin:0 50%;text-shadow:0.300px 0 0 #1a1a1a;">Tie In And Tie Off</span>
<span class="t" style="left:915px;top:116px;font-size:9.5px;color:#222;transform:scaleX(0.903);transform-origin:0 50%;-webkit-text-stroke:0.22px currentColor;">When To Tie</span>
<div style="left:974px;top:118px;width:121px;height:17px;background:#e6e6e6;border:1px solid #c9c9c9;"></div>
<svg style="left:1081.0px;top:123.5px" width="10.0" height="7.0" viewBox="0 0 10 7"><path d="M1.200 1.200L5 5.200L8.800 1.200" fill="none" stroke="#333" stroke-width="1.5"/></svg>
<span class="t" style="left:978px;top:116.5px;font-size:9.5px;color:#222;transform:scaleX(0.915);transform-origin:0 50%;-webkit-text-stroke:0.22px currentColor;">Only When Necessary</span>
<div style="left:1200px;top:114px;width:18px;height:334px;background:#f1f1f1;"></div>
<div style="left:1201.5px;top:131.5px;width:15px;height:251px;background:#c9c9c9;"></div>
<svg style="left:1204px;top:119px" width="10" height="7" viewBox="0 0 10 7"><path d="M1.200 5.800L5 1.800L8.800 5.800" fill="none" stroke="#444" stroke-width="1.500"/></svg>
<svg style="left:1204.0px;top:434.5px" width="10.0" height="7.0" viewBox="0 0 10 7"><path d="M1.200 1.200L5 5.200L8.800 1.200" fill="none" stroke="#444" stroke-width="1.5"/></svg>
<div style="left:919px;top:144px;width:201px;height:95px;border:1px solid #efefef;background:#fefefe;"></div>
<div style="left:927px;top:154px;width:13px;height:13px;background:#fff;border:1px solid #555;"></div>
<span class="t" style="left:943px;top:150.5px;font-size:9.5px;color:#222;transform:scaleX(0.843);transform-origin:0 50%;-webkit-text-stroke:0.22px currentColor;">Tie in:</span>
<span class="t" style="left:923px;top:168.5px;font-size:9.5px;color:#b9b9b9;transform:scaleX(0.850);transform-origin:0 50%;-webkit-text-stroke:0.22px currentColor;">Type</span>
<div style="left:988px;top:170px;width:121px;height:17px;background:#e9e9e9;border:1px solid #e4e4e4;"></div>
<svg style="left:1095.0px;top:175.5px" width="10.0" height="7.0" viewBox="0 0 10 7"><path d="M1.200 1.200L5 5.200L8.800 1.200" fill="none" stroke="#c8c8c8" stroke-width="1.5"/></svg>
<span class="t" style="left:923px;top:190px;font-size:9.5px;color:#b9b9b9;transform:scaleX(0.865);transform-origin:0 50%;-webkit-text-stroke:0.22px currentColor;">Width</span>
<div style="left:988px;top:191px;width:33px;height:19px;background:#fff;border:1px solid #dcdcdc;"></div>
<div style="left:1021px;top:191px;width:15px;height:19px;background:#ececec;border:1px solid #d2d2d2;"></div>
<svg style="left:1021px;top:191px" width="15" height="19" viewBox="0 0 15 19"><path d="M4.3 7.3l3.200-3.600 3.200 3.600z" fill="#666"/><path d="M4.3 11.7l3.200 3.600 3.200-3.600z" fill="#666"/></svg>
<span class="t" style="left:1040.5px;top:190px;font-size:9.5px;color:#b9b9b9;transform:scaleX(0.820);transform-origin:0 50%;-webkit-text-stroke:0.22px currentColor;">pt</span>
<span class="t" style="left:923px;top:211.5px;font-size:9.5px;color:#b9b9b9;transform:scaleX(0.846);transform-origin:0 50%;-webkit-text-stroke:0.22px currentColor;">Num Stitches:</span>
<div style="left:988px;top:213px;width:57px;height:17px;background:#e9e9e9;border:1px solid #e4e4e4;"></div>
<svg style="left:1031.0px;top:218.5px" width="10.0" height="7.0" viewBox="0 0 10 7"><path d="M1.200 1.200L5 5.200L8.800 1.200" fill="none" stroke="#c8c8c8" stroke-width="1.5"/></svg>
<div style="left:919px;top:248px;width:201px;height:95px;border:1px solid #efefef;background:#fefefe;"></div>
<div style="left:927px;top:258px;width:13px;height:13px;background:#fff;border:1px solid #555;"></div>
<span class="t" style="left:943px;top:254.5px;font-size:9.5px;color:#222;transform:scaleX(0.914);transform-origin:0 50%;-webkit-text-stroke:0.22px currentColor;">Tie Off:</span>
<span class="t" style="left:923px;top:272.5px;font-size:9.5px;color:#b9b9b9;transform:scaleX(0.850);transform-origin:0 50%;-webkit-text-stroke:0.22px currentColor;">Type</span>
<div style="left:988px;top:274px;width:121px;height:17px;background:#e9e9e9;border:1px solid #e4e4e4;"></div>
<svg style="left:1095.0px;top:279.5px" width="10.0" height="7.0" viewBox="0 0 10 7"><path d="M1.200 1.200L5 5.200L8.800 1.200" fill="none" stroke="#c8c8c8" stroke-width="1.5"/></svg>
<span class="t" style="left:923px;top:294px;font-size:9.5px;color:#b9b9b9;transform:scaleX(0.865);transform-origin:0 50%;-webkit-text-stroke:0.22px currentColor;">Width</span>
<div style="left:988px;top:295px;width:33px;height:19px;background:#fff;border:1px solid #dcdcdc;"></div>
<div style="left:1021px;top:295px;width:15px;height:19px;background:#ececec;border:1px solid #d2d2d2;"></div>
<svg style="left:1021px;top:295px" width="15" height="19" viewBox="0 0 15 19"><path d="M4.3 7.3l3.200-3.600 3.200 3.600z" fill="#666"/><path d="M4.3 11.7l3.200 3.600 3.200-3.600z" fill="#666"/></svg>
<span class="t" style="left:1040.5px;top:294px;font-size:9.5px;color:#b9b9b9;transform:scaleX(0.820);transform-origin:0 50%;-webkit-text-stroke:0.22px currentColor;">pt</span>
<span class="t" style="left:923px;top:315.5px;font-size:9.5px;color:#b9b9b9;transform:scaleX(0.846);transform-origin:0 50%;-webkit-text-stroke:0.22px currentColor;">Num Stitches:</span>
<div style="left:988px;top:317px;width:57px;height:17px;background:#e9e9e9;border:1px solid #e4e4e4;"></div>
<svg style="left:1031.0px;top:322.5px" width="10.0" height="7.0" viewBox="0 0 10 7"><path d="M1.200 1.200L5 5.200L8.800 1.200" fill="none" stroke="#c8c8c8" stroke-width="1.5"/></svg>
<div style="left:919px;top:352px;width:201px;height:53px;border:1px solid #efefef;background:#fefefe;"></div>
<div style="left:924px;top:346px;width:40px;height:12px;background:#fff;"></div>
<span class="t" style="left:926px;top:342px;font-size:9.5px;color:#222;transform:scaleX(0.898);transform-origin:0 50%;-webkit-text-stroke:0.22px currentColor;">Auto Trim</span>
<div style="left:927px;top:362px;width:13px;height:13px;background:#fff;border:1px solid #555;"></div>
<svg style="left:927px;top:362px" width="13" height="13" viewBox="0 0 13 13"><path d="M3 6.500l2.500 3L10 3.300" fill="none" stroke="#111" stroke-width="1.700"/></svg>
<span class="t" style="left:943px;top:358.5px;font-size:9.5px;color:#222;transform:scaleX(0.898);transform-origin:0 50%;-webkit-text-stroke:0.22px currentColor;">Auto Trim</span>
<span class="t" style="left:923.5px;top:377.5px;font-size:9.5px;color:#222;transform:scaleX(0.900);transform-origin:0 50%;-webkit-text-stroke:0.22px currentColor;">Auto Trim Length:</span>
<div style="left:1008px;top:378px;width:33px;height:19px;background:#fff;border:1px solid #cfcfcf;"></div>
<span class="t" style="left:1025.3px;top:376.5px;font-size:9.5px;color:#222;transform:scaleX(0.899);transform-origin:0 50%;-webkit-text-stroke:0.22px currentColor;">64</span>
<div style="left:1041px;top:378px;width:15px;height:19px;background:#e4e4e4;border:1px solid #d2d2d2;"></div>
<svg style="left:1041px;top:378px" width="15" height="19" viewBox="0 0 15 19"><path d="M4.3 7.3l3.200-3.600 3.200 3.600z" fill="#222"/><path d="M4.3 11.7l3.200 3.600 3.200-3.600z" fill="#222"/></svg>
<span class="t" style="left:1060px;top:377.5px;font-size:9.5px;color:#222;transform:scaleX(0.805);transform-origin:0 50%;-webkit-text-stroke:0.22px currentColor;">pt.</span>
<div style="left:919px;top:414px;width:201px;height:40px;border:1px solid #efefef;background:#fefefe;border-bottom:none;height:34px;"></div>
<div style="left:924px;top:408px;width:36px;height:12px;background:#fff;"></div>
<span class="t" style="left:926px;top:404.4px;font-size:9.5px;color:#222;transform:scaleX(0.889);transform-origin:0 50%;-webkit-text-stroke:0.22px currentColor;">Auto Tie</span>
<div style="left:927px;top:424px;width:13px;height:13px;background:#fff;border:1px solid #555;"></div>
<span class="t" style="left:943px;top:420.5px;font-size:9.5px;color:#222;transform:scaleX(0.889);transform-origin:0 50%;-webkit-text-stroke:0.22px currentColor;">Auto Tie</span>
<div style="left:1008px;top:443px;width:33px;height:5px;background:#fff;border:1px solid #e0e0e0;border-bottom:none;"></div>
<div style="left:1033px;top:442px;width:15px;height:6px;background:#eee;border:1px solid #d8d8d8;border-bottom:none;"></div>
<div style="left:886px;top:460px;width:14px;height:14px;background:#fff;border:1px solid #555;"></div>
<span class="t" style="left:902px;top:457.8px;font-size:12.5px;color:#222;transform:scaleX(0.850);transform-origin:0 50%;">Auto-Apply</span>
<div style="left:968px;top:457px;width:79px;height:22px;background:#f1f1f1;border:1px solid #5aa0e0;box-shadow:inset 0 0 0 1px #cfe4f8;"></div>
<span class="t" style="left:1000.4px;top:457.5px;font-size:12.5px;color:#222;transform:scaleX(0.803);transform-origin:0 50%;">OK</span>
<div style="left:1054px;top:457px;width:79px;height:22px;background:#e9e9e9;border:1px solid #b8b8b8;"></div>
<span class="t" style="left:1077px;top:457.5px;font-size:12.5px;color:#222;transform:scaleX(0.861);transform-origin:0 50%;">Cancel</span>
<div style="left:1141px;top:457px;width:79px;height:22px;background:#f1f1f1;border:1px solid #e2e2e2;"></div>
<span class="t" style="left:1165.3px;top:457.5px;font-size:12.5px;color:#a8a8a8;transform:scaleX(0.886);transform-origin:0 50%;">Apply</span>
<svg style="left:1216px;top:474px" width="9" height="9" viewBox="0 0 9 9"><path d="M7 1v1M7 4v1M4 4v1M7 7v1M4 7v1M1 7v1" stroke="#c4c4c4" stroke-width="1.600"/></svg>
</body></html>
